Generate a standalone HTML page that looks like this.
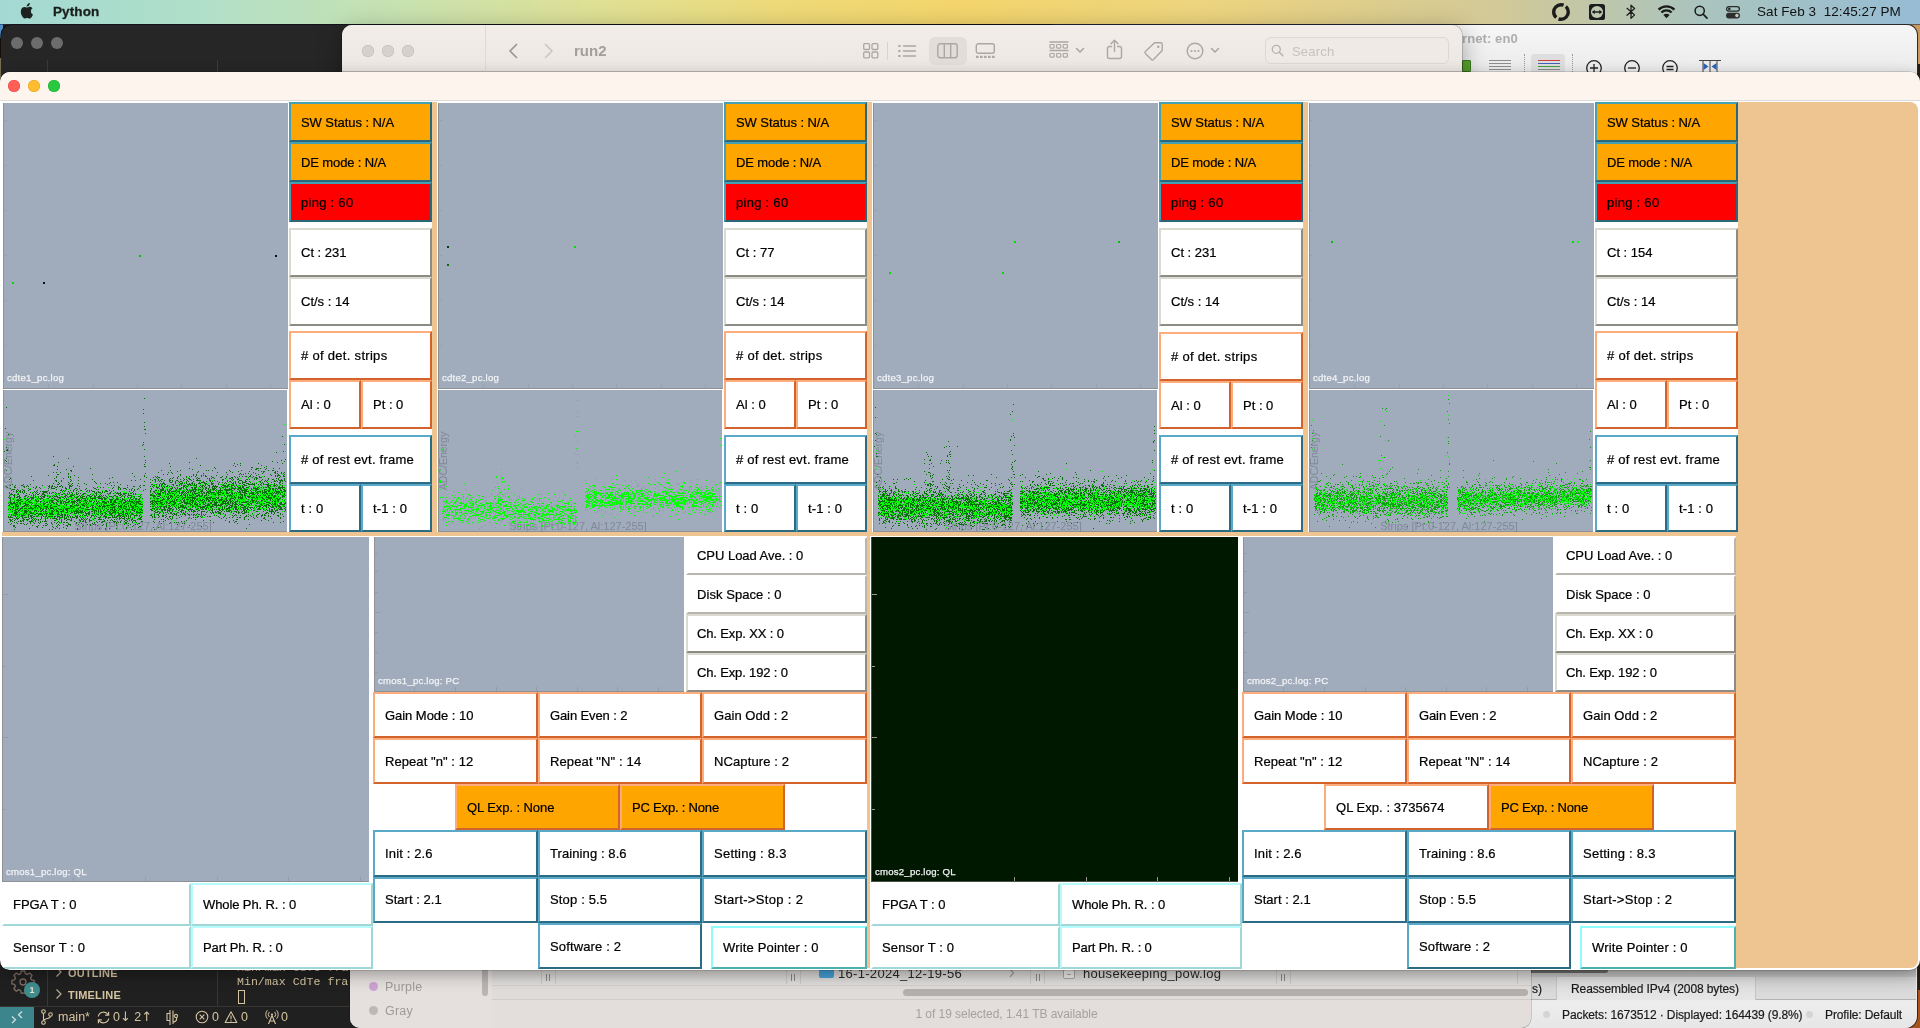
<!DOCTYPE html><html><head><meta charset="utf-8"><title>Python</title><style>
*{box-sizing:border-box;margin:0;padding:0}
html,body{width:1920px;height:1028px;overflow:hidden}
body{position:relative;-webkit-font-smoothing:antialiased;font-family:"Liberation Sans",sans-serif;font-size:13px;color:#000;background:#2a1c10}
.abs,.w,.p,.lb,.ax,.wh{position:absolute}
.wh{background:#fff}
.w{border:2px solid;padding-left:10px;white-space:pre;overflow:hidden;background:#fff;font-size:13px;-webkit-text-stroke:.22px #000}
.p{background:#a0abbb;border-left:1px solid #8e9196;border-bottom:1px solid #8e9196}
.lb{color:#f1f3f6;font-size:9.600px;line-height:12px;white-space:pre;letter-spacing:.22px;-webkit-text-stroke:.25px #f1f3f6}
.t{border-color:#46a0b4 #2a6778 #2a6778 #46a0b4}
.o{border-color:#fdac7c #d3632b #d3632b #fdac7c}
.g{border-color:#dadad0 #8c8c84 #8c8c84 #dadad0}
.g2{border-color:#fff #b9b6ae #b9b6ae #fff}
.c{border-color:#b9fafa #9fd6d6 #9fd6d6 #b9fafa}
.c2{border-color:#fff #a0d8d8 #a0d8d8 #fff}
.wp{border-color:#8ffbfb #4db0ae #4db0ae #8ffbfb}
.b{border-color:#58aac8 #2d6b84 #2d6b84 #58aac8}
.or{background:#ffa500}
.rd{background:#ff0000}
.ax{color:#818998;font-size:11px;line-height:12px;white-space:pre}
svg{position:absolute;overflow:visible}
</style></head><body><div id="root" style="position:absolute;left:0;top:0;width:1920px;height:1028px;will-change:transform">
<div class="abs" style="left:0;top:24px;width:3px;height:14px;background:#4f8fc8"></div>
<div class="abs" style="left:0;top:58px;width:3px;height:20px;background:#eadca0"></div>
<div class="abs" style="left:1900px;top:24px;width:20px;height:40px;background:#c89a60"></div>
<div class="abs" style="left:1900px;top:990px;width:20px;height:38px;background:#a8521c"></div>
<div class="abs" style="left:0;top:0;width:1920px;height:24px;background:linear-gradient(90deg,#a3d9d3 0,#b0dfc8 200px,#c8e2b0 400px,#dfe094 600px,#efd976 800px,#f3d56c 960px,#edd47e 1200px,#d2c998 1500px,#aac4be 1700px,#96bcd4 1920px)"></div>
<div class="abs" style="left:0;top:24px;width:1920px;height:1px;background:rgba(30,50,80,.6)"></div>
<svg style="left:20px;top:3px" width="13.100" height="15.700" viewBox="-1 0 14.500 17.300"><path d="M6.500 4.900C7.300 4.900 8.300 4 9.700 4c.6 0 2.200.2 3.200 1.800-.1.100-1.900 1.100-1.900 3.300 0 2.600 2.200 3.500 2.300 3.500 0 .1-.4 1.300-1.200 2.500-.7 1-1.400 2-2.500 2s-1.500-.6-2.700-.6c-1.300 0-1.700.6-2.700.6-1.100.1-1.900-1.100-2.600-2.100C.200 12.900-.9 9.100.600 6.500 1.300 5.200 2.600 4.400 4 4.400c1.100 0 2 .5 2.500.5zM9 2.700C9.600 2 10 1 9.900 0 9 0 8 .6 7.400 1.300 6.800 2 6.300 3 6.500 3.900c.9.100 1.900-.4 2.500-1.200z" fill="#1b221f"/></svg>
<div class="abs" style="left:53px;top:4px;font-size:13.5px;font-weight:700;line-height:16px;color:#1a1f1c;letter-spacing:.1px;-webkit-text-stroke:.3px #1a1f1c">Python</div>
<div class="abs" style="left:1757px;top:4px;font-size:13.5px;line-height:16px;color:#111;white-space:pre;letter-spacing:.06px">Sat Feb 3  12:45:27 PM</div>
<svg style="left:1551px;top:2px" width="20" height="20" viewBox="0 0 20 20"><circle cx="10" cy="10" r="7.300" fill="none" stroke="#1c1c1c" stroke-width="3.400" stroke-dasharray="20.300 2.630" stroke-dashoffset="6.400"/></svg>
<svg style="left:1589px;top:4px" width="16" height="16" viewBox="0 0 16 16"><rect x="0" y="0" width="16" height="16" rx="2.600" fill="#1c1c1c"/><circle cx="8" cy="8" r="6.100" fill="#bcc8b0"/><path d="M2.800 8l2.900-2.300v1.500h4.600V5.700L13.200 8l-2.900 2.300V8.800H5.700v1.500z" fill="#1c1c1c"/></svg>
<svg style="left:1625px;top:3px" width="12" height="18" viewBox="0 0 12 18"><path d="M2 5.300l7.600 6.600L6 15.400V2.200l3.600 3.300L2 12.300" fill="none" stroke="#1c1c1c" stroke-width="1.250" stroke-linejoin="round" stroke-linecap="round"/></svg>
<svg style="left:1657px;top:4px" width="19" height="15" viewBox="0 0 19 15"><path d="M1.600 5.600a11.300 11.300 0 0 1 15.800 0M4.400 8.500a7.300 7.300 0 0 1 10.200 0" fill="none" stroke="#1c1c1c" stroke-width="2.300" stroke-linecap="butt"/><path d="M9.500 14.200L6.400 11a4.400 4.400 0 0 1 6.200 0z" fill="#1c1c1c"/></svg>
<svg style="left:1693px;top:4px" width="16" height="16" viewBox="0 0 16 16"><circle cx="6.700" cy="6.800" r="4.600" fill="none" stroke="#1c1c1c" stroke-width="1.500"/><path d="M10.100 10.200l3.900 3.900" stroke="#1c1c1c" stroke-width="1.700" stroke-linecap="round"/></svg>
<svg style="left:1725px;top:5px" width="16" height="14" viewBox="0 0 16 14"><rect x="1.600" y="1.600" width="12.800" height="4.600" rx="2.300" fill="none" stroke="#2a2a2a" stroke-width="1.300"/><circle cx="4.300" cy="3.900" r="1.300" fill="#2a2a2a"/><rect x="1" y="7.700" width="14" height="5.700" rx="2.850" fill="#2e2e2e"/><circle cx="11.900" cy="10.550" r="1.700" fill="#c4cbbe"/></svg>
<div class="abs" style="left:1px;top:25px;width:1060px;height:1003px;background:#262626;border-radius:10px 10px 0 0;box-shadow:0 0 0 .5px #000"></div>
<div class="abs" style="left:11px;top:37px;width:12px;height:12px;border-radius:50%;background:#6c6c6c"></div>
<div class="abs" style="left:31px;top:37px;width:12px;height:12px;border-radius:50%;background:#6c6c6c"></div>
<div class="abs" style="left:51px;top:37px;width:12px;height:12px;border-radius:50%;background:#6c6c6c"></div>
<div class="abs" style="left:47px;top:60px;width:1px;height:12px;background:#3e3a36"></div>
<div class="abs" style="left:217px;top:60px;width:1px;height:12px;background:#3e3a36"></div>
<div class="abs" style="left:0;top:960px;width:360px;height:68px;background:#202020"></div>
<div class="abs" style="left:47px;top:960px;width:1px;height:46px;background:#3a3633"></div>
<div class="abs" style="left:217px;top:960px;width:1px;height:46px;background:#3a3633"></div>
<div class="abs" style="left:0;top:1006px;width:360px;height:1px;background:#38342f"></div>
<svg style="left:10px;top:969px" width="26" height="26" viewBox="0 0 26 26"><g fill="none" stroke="#7c6f64" stroke-width="1.300"><circle cx="13" cy="13" r="3"/><path d="M11.200 2h3.600l.5 2.700 2 .85 2.300-1.550 2.500 2.500-1.550 2.300.85 2 2.700.5v3.600l-2.700.5-.85 2 1.550 2.300-2.500 2.500-2.300-1.550-2 .85-.5 2.700h-3.600l-.5-2.700-2-.85-2.300 1.550-2.500-2.500 1.550-2.300-.85-2-2.700-.5v-3.600l2.700-.5.85-2-1.550-2.300 2.500-2.500 2.300 1.550 2-.85z" stroke-linejoin="round"/></g></svg>
<div class="abs" style="left:24px;top:982px;width:16px;height:16px;border-radius:50%;background:#3f8c8f;color:#e8e0c8;font-size:9px;font-weight:700;line-height:16px;text-align:center">1</div>
<svg style="left:55px;top:966px" width="8" height="12" viewBox="0 0 8 12"><path d="M1.500 1.500l4.500 4.500-4.500 4.500" fill="none" stroke="#bdae93" stroke-width="1.200"/></svg>
<div class="abs" style="left:68px;top:966px;font-size:11px;font-weight:700;line-height:14px;color:#d5c4a1;letter-spacing:.2px">OUTLINE</div>
<svg style="left:55px;top:988px" width="8" height="12" viewBox="0 0 8 12"><path d="M1.500 1.500l4.500 4.500-4.500 4.500" fill="none" stroke="#bdae93" stroke-width="1.200"/></svg>
<div class="abs" style="left:68px;top:988px;font-size:11px;font-weight:700;line-height:14px;color:#d5c4a1;letter-spacing:.2px">TIMELINE</div>
<div class="abs" style="left:237px;top:961px;font-family:'Liberation Mono',monospace;font-size:11.600px;line-height:14px;color:#d5c4a1;white-space:pre">Min/max CdTe fra</div>
<div class="abs" style="left:237px;top:975px;font-family:'Liberation Mono',monospace;font-size:11.600px;line-height:14px;color:#d5c4a1;white-space:pre">Min/max CdTe fra</div>
<div class="abs" style="left:238px;top:990px;width:7px;height:14px;border:1px solid #d5c4a1"></div>
<div class="abs" style="left:0;top:1007px;width:34px;height:21px;background:#3c858c;border-radius:0 0 0 0"></div>
<svg style="left:10px;top:1010px" width="14" height="14" viewBox="0 0 14 14"><path d="M2 6.500l3.500 3.300L2 13M12 1.500L8.500 4.700 12 8" fill="none" stroke="#d5e4e0" stroke-width="1.200"/></svg>
<svg style="left:40px;top:1008px" width="14" height="18" viewBox="0 0 14 18"><circle cx="3.500" cy="3.500" r="1.800" fill="none" stroke="#d5c4a1" stroke-width="1.100"/><circle cx="3.500" cy="14.500" r="1.800" fill="none" stroke="#d5c4a1" stroke-width="1.100"/><circle cx="10.500" cy="6.500" r="1.800" fill="none" stroke="#d5c4a1" stroke-width="1.100"/><path d="M3.500 5.300v7.400M10.500 8.300c0 3-7 2-7 4.400" fill="none" stroke="#d5c4a1" stroke-width="1.100"/></svg>
<div class="abs" style="left:58px;top:1009px;font-size:12.5px;line-height:16px;color:#d5c4a1;white-space:pre">main*</div>
<svg style="left:96px;top:1010px" width="15" height="15" viewBox="0 0 15 15"><path d="M2.300 6.500a5.300 5.300 0 0 1 9.800-1.700M12.700 8.500a5.300 5.300 0 0 1-9.800 1.700" fill="none" stroke="#d5c4a1" stroke-width="1.200"/><path d="M12.600 1.800v3.400H9.200M2.400 13.200V9.800h3.400" fill="none" stroke="#d5c4a1" stroke-width="1.200"/></svg>
<div class="abs" style="left:113px;top:1009px;font-size:12.5px;line-height:16px;color:#d5c4a1;white-space:pre">0<span style="font-family:'DejaVu Sans',sans-serif;font-size:13px">↓</span> 2<span style="font-family:'DejaVu Sans',sans-serif;font-size:13px">↑</span></div>
<svg style="left:165px;top:1009px" width="14" height="17" viewBox="0 0 14 17"><path d="M5 1v15M5 4.500h-3v7h3M8 1.500v13.500M8 13c3 0 4-2 3.500-4.500" fill="none" stroke="#d5c4a1" stroke-width="1.100"/><circle cx="11" cy="7" r="1.600" fill="none" stroke="#d5c4a1" stroke-width="1.100"/></svg>
<svg style="left:195px;top:1010px" width="14" height="14" viewBox="0 0 14 14"><circle cx="7" cy="7" r="5.800" fill="none" stroke="#d5c4a1" stroke-width="1.100"/><path d="M4.700 4.700l4.600 4.600M9.300 4.700L4.700 9.300" stroke="#d5c4a1" stroke-width="1.100"/></svg>
<div class="abs" style="left:212px;top:1009px;font-size:12.5px;line-height:16px;color:#d5c4a1;white-space:pre">0</div>
<svg style="left:224px;top:1010px" width="14" height="14" viewBox="0 0 14 14"><path d="M7 1.800l5.800 10.700H1.200z" fill="none" stroke="#d5c4a1" stroke-width="1.100" stroke-linejoin="round"/><path d="M7 5.500v3.700M7 10.300v1.200" stroke="#d5c4a1" stroke-width="1.100"/></svg>
<div class="abs" style="left:241px;top:1009px;font-size:12.5px;line-height:16px;color:#d5c4a1;white-space:pre">0</div>
<svg style="left:265px;top:1009px" width="14" height="16" viewBox="0 0 14 16"><path d="M7 6.500L3.500 15M7 6.500L10.500 15M4.800 12h4.400" fill="none" stroke="#d5c4a1" stroke-width="1.100"/><circle cx="7" cy="5.500" r="1.100" fill="#d5c4a1"/><path d="M4.300 3a3.800 3.800 0 0 0 0 5M9.700 3a3.800 3.800 0 0 1 0 5M2.400 1.300a6.300 6.300 0 0 0 0 8.400M11.600 1.300a6.300 6.300 0 0 1 0 8.400" fill="none" stroke="#d5c4a1" stroke-width="1"/></svg>
<div class="abs" style="left:281px;top:1009px;font-size:12.5px;line-height:16px;color:#d5c4a1;white-space:pre">0</div>
<div class="abs" style="left:1440px;top:25px;width:1478px;height:1003px"></div>
<div class="abs" style="left:1440px;top:25px;width:477px;height:1003px;background:linear-gradient(#f6f6f6 0,#ebebeb 47px,#ebebeb 100%);border-radius:10px 10px 12px 10px;box-shadow:0 0 0 1px #2a2a2a"></div>
<div class="abs" style="left:1462px;top:31px;font-size:13px;font-weight:700;line-height:16px;color:#adadad;white-space:pre;letter-spacing:.1px">rnet: en0</div>
<div class="abs" style="left:1462px;top:60px;width:9px;height:12px;background:#5aa832;border:1px solid #3f8020;border-radius:1px"></div>
<div class="abs" style="left:1489px;top:60px;width:22px;height:12px;background:repeating-linear-gradient(#8c8c8c 0,#8c8c8c 1px,transparent 1px,transparent 3px)"></div>
<div class="abs" style="left:1524px;top:54px;width:1px;height:18px;border-left:1px dotted #999"></div>
<div class="abs" style="left:1531px;top:54px;width:34px;height:20px;background:#dedede;border-radius:4px"></div>
<div class="abs" style="left:1538px;top:60px;width:22px;height:1px;background:#d04040;box-shadow:0 3px 0 #4060c0,0 6px 0 #40a040,0 9px 0 #888"></div>
<div class="abs" style="left:1572px;top:54px;width:1px;height:18px;border-left:1px dotted #999"></div>
<svg style="left:1585px;top:59px" width="18" height="18" viewBox="0 0 18 18"><circle cx="9" cy="9" r="7.300" fill="none" stroke="#222" stroke-width="1.300"/><path d="M5 9h8M9 5v8" stroke="#222" stroke-width="1.300"/></svg>
<svg style="left:1623px;top:59px" width="18" height="18" viewBox="0 0 18 18"><circle cx="9" cy="9" r="7.300" fill="none" stroke="#222" stroke-width="1.300"/><path d="M5 9h8" stroke="#222" stroke-width="1.300"/></svg>
<svg style="left:1661px;top:59px" width="18" height="18" viewBox="0 0 18 18"><circle cx="9" cy="9" r="7.300" fill="none" stroke="#222" stroke-width="1.300"/><path d="M5.500 7.500h7M5.500 10.500h7" stroke="#222" stroke-width="1.300"/></svg>
<svg style="left:1698px;top:59px" width="24" height="14" viewBox="0 0 24 14"><path d="M1 1.500h22M5 2v12M12 2v12M19 2v12" stroke="#444" stroke-width="1" fill="none"/><path d="M5.500 4l5 3.500-5 3.500zM18.500 4l-5 3.500 5 3.500z" fill="#2a62b8"/></svg>
<div class="abs" style="left:1520px;top:960px;width:396px;height:17px;background:linear-gradient(#a8a8a8,#c4c4c4)"></div>
<div class="abs" style="left:1520px;top:968px;width:88px;height:5px;background:#6a6a6a;border-radius:0 3px 3px 0"></div>
<div class="abs" style="left:1520px;top:977px;width:396px;height:23px;background:linear-gradient(#d2d2d2,#dcdcdc);border-bottom:1px solid #b4b4b4"></div>
<div class="abs" style="left:1556px;top:977px;width:200px;height:23px;background:linear-gradient(#dcdcdc,#e6e6e6);border-left:1px solid #c4c4c4;border-right:1px solid #c4c4c4"></div>
<div class="abs" style="left:1532px;top:982px;font-size:12px;line-height:14px;color:#1a1a1a;white-space:pre;letter-spacing:-.1px;-webkit-text-stroke:.2px #1a1a1a">s)</div>
<div class="abs" style="left:1571px;top:982px;font-size:12px;line-height:14px;color:#1a1a1a;white-space:pre;letter-spacing:-.1px;-webkit-text-stroke:.2px #1a1a1a">Reassembled IPv4 (2008 bytes)</div>
<div class="abs" style="left:1520px;top:1001px;width:396px;height:27px;background:linear-gradient(#eeeeee,#e6e6e6);border-radius:0 0 12px 0"></div>
<div class="abs" style="left:1543px;top:1011px;width:7px;height:7px;border-radius:50%;background:#d4d4d4"></div>
<div class="abs" style="left:1562px;top:1008px;font-size:12px;line-height:14px;color:#1a1a1a;white-space:pre;letter-spacing:-.1px;-webkit-text-stroke:.2px #1a1a1a">Packets: 1673512 · Displayed: 164439 (9.8%)</div>
<div class="abs" style="left:1806px;top:1011px;width:7px;height:7px;border-radius:50%;background:#d4d4d4"></div>
<div class="abs" style="left:1825px;top:1008px;font-size:12px;line-height:14px;color:#1a1a1a;white-space:pre;letter-spacing:-.1px;-webkit-text-stroke:.2px #1a1a1a">Profile: Default</div>
<div class="abs" style="left:342px;top:25px;width:1120px;height:80px;background:#efeae5;border-radius:10px 10px 0 0;box-shadow:0 0 0 .5px rgba(0,0,0,.35),0 6px 24px rgba(0,0,0,.35)"></div>
<div class="abs" style="left:342px;top:25px;width:1120px;height:47px;background:linear-gradient(#f2ede8,#ece7e2);border-radius:10px 10px 0 0;border-bottom:1px solid #cfcac5"></div>
<div class="abs" style="left:485px;top:25px;width:1px;height:47px;background:#dfdad5"></div>
<div class="abs" style="left:362px;top:45px;width:12px;height:12px;border-radius:50%;background:#d5d1cc;box-shadow:inset 0 0 0 .5px #bdb9b4"></div>
<div class="abs" style="left:382px;top:45px;width:12px;height:12px;border-radius:50%;background:#d5d1cc;box-shadow:inset 0 0 0 .5px #bdb9b4"></div>
<div class="abs" style="left:402px;top:45px;width:12px;height:12px;border-radius:50%;background:#d5d1cc;box-shadow:inset 0 0 0 .5px #bdb9b4"></div>
<svg style="left:508px;top:43px" width="10" height="16" viewBox="0 0 10 16"><path d="M8.500 1.500L2 8l6.500 6.500" fill="none" stroke="#9a9691" stroke-width="1.700" stroke-linecap="round" stroke-linejoin="round"/></svg>
<svg style="left:544px;top:43px" width="10" height="16" viewBox="0 0 10 16"><path d="M1.500 1.500L8 8l-6.500 6.500" fill="none" stroke="#cbc7c2" stroke-width="1.700" stroke-linecap="round" stroke-linejoin="round"/></svg>
<div class="abs" style="left:574px;top:42px;font-size:15px;font-weight:700;line-height:18px;color:#a29e99">run2</div>
<svg style="left:863px;top:43px" width="16" height="16" viewBox="0 0 16 16"><g fill="none" stroke="#aba7a2" stroke-width="1.300"><rect x=".7" y=".7" width="5.800" height="5.800" rx="1"/><rect x="9" y=".7" width="5.800" height="5.800" rx="1"/><rect x=".7" y="9" width="5.800" height="5.800" rx="1"/><rect x="9" y="9" width="5.800" height="5.800" rx="1"/></g></svg>
<div class="abs" style="left:887px;top:42px;width:1px;height:18px;background:#d9d4cf"></div>
<svg style="left:898px;top:44px" width="19" height="14" viewBox="0 0 19 14"><g stroke="#aba7a2" stroke-width="1.500" stroke-linecap="round"><path d="M5.500 2h12M5.500 7h12M5.500 12h12"/><path d="M1 2h.800M1 7h.800M1 12h.800" stroke-width="1.800"/></g></svg>
<div class="abs" style="left:929px;top:37px;width:38px;height:28px;border-radius:6px;background:#e2ddd8"></div>
<svg style="left:937px;top:43px" width="21" height="16" viewBox="0 0 21 16"><g fill="none" stroke="#aba7a2" stroke-width="1.400"><rect x=".8" y=".8" width="19.400" height="14" rx="2.500"/><path d="M7.300 1v14M13.700 1v14"/></g></svg>
<svg style="left:975px;top:43px" width="21" height="16" viewBox="0 0 21 16"><g fill="none" stroke="#aba7a2" stroke-width="1.400"><rect x="1.300" y=".8" width="18" height="9.500" rx="2"/></g><g fill="#aba7a2"><rect x="1" y="12.800" width="2.600" height="2.200"/><rect x="5" y="12.800" width="2.600" height="2.200"/><rect x="9" y="12.800" width="2.600" height="2.200"/><rect x="13" y="12.800" width="2.600" height="2.200"/><rect x="17" y="12.800" width="2.600" height="2.200"/></g></svg>
<svg style="left:1049px;top:41px" width="20" height="18" viewBox="0 0 20 18"><g fill="none" stroke="#aba7a2" stroke-width="1.200"><path d="M.5 1h19M.5 9.500h19" stroke-width="1.400"/><rect x="1" y="3.500" width="4.200" height="3.600" rx=".8"/><rect x="7.600" y="3.500" width="4.200" height="3.600" rx=".8"/><rect x="14.200" y="3.500" width="4.200" height="3.600" rx=".8"/><rect x="1" y="12.500" width="4.200" height="3.600" rx=".8"/><rect x="7.600" y="12.500" width="4.200" height="3.600" rx=".8"/><rect x="14.200" y="12.500" width="4.200" height="3.600" rx=".8"/></g></svg>
<svg style="left:1075px;top:47px" width="10" height="7" viewBox="0 0 10 7"><path d="M1.500 1.500L5 5l3.500-3.500" fill="none" stroke="#aba7a2" stroke-width="1.600" stroke-linecap="round" stroke-linejoin="round"/></svg>
<svg style="left:1106px;top:39px" width="17" height="21" viewBox="0 0 17 21"><g fill="none" stroke="#aba7a2" stroke-width="1.400" stroke-linecap="round" stroke-linejoin="round"><path d="M5.500 7.500H3.500a2 2 0 0 0-2 2v8a2 2 0 0 0 2 2h10a2 2 0 0 0 2-2v-8a2 2 0 0 0-2-2h-2"/><path d="M8.500 12.500V1.500M5 4.800L8.500 1.300 12 4.800"/></g></svg>
<svg style="left:1143px;top:41px" width="21" height="21" viewBox="0 0 21 21"><g fill="none" stroke="#aba7a2" stroke-width="1.400" stroke-linejoin="round"><path d="M11.500 1.800h6.200a1.500 1.500 0 0 1 1.500 1.500v6.200L10.500 18.600a1.500 1.500 0 0 1-2.100 0L2.400 12.600a1.500 1.500 0 0 1 0-2.100z"/></g><circle cx="15.300" cy="5.700" r="1.200" fill="#aba7a2"/></svg>
<svg style="left:1186px;top:42px" width="18" height="18" viewBox="0 0 18 18"><circle cx="9" cy="9" r="7.800" fill="none" stroke="#aba7a2" stroke-width="1.400"/><g fill="#aba7a2"><circle cx="5.500" cy="9" r="1.100"/><circle cx="9" cy="9" r="1.100"/><circle cx="12.500" cy="9" r="1.100"/></g></svg>
<svg style="left:1210px;top:47px" width="10" height="7" viewBox="0 0 10 7"><path d="M1.500 1.500L5 5l3.500-3.500" fill="none" stroke="#aba7a2" stroke-width="1.600" stroke-linecap="round" stroke-linejoin="round"/></svg>
<div class="abs" style="left:1265px;top:37px;width:184px;height:27px;border-radius:6px;background:#efeae5;border:1px solid #ddd8d3"></div>
<svg style="left:1271px;top:44px" width="13" height="13" viewBox="0 0 13 13"><circle cx="5.300" cy="5.300" r="4" fill="none" stroke="#b5b1ac" stroke-width="1.300"/><path d="M8.300 8.300l3.500 3.500" stroke="#b5b1ac" stroke-width="1.400" stroke-linecap="round"/></svg>
<div class="abs" style="left:1292px;top:44px;font-size:13px;line-height:16px;color:#c6c2bd;letter-spacing:.2px">Search</div>
<div class="abs" style="left:350px;top:960px;width:1181px;height:68px;background:#e3dedb;border-radius:0 0 10px 10px;box-shadow:0 0 0 .5px rgba(0,0,0,.3)"></div>
<div class="abs" style="left:350px;top:960px;width:142px;height:68px;background:#e5e0de;border-radius:0 0 0 10px"></div>
<div class="abs" style="left:482px;top:960px;width:6px;height:36px;background:#b9b5b2;border-radius:3px"></div>
<div class="abs" style="left:369px;top:982px;width:9px;height:9px;border-radius:50%;background:#cba3d3"></div>
<div class="abs" style="left:385px;top:979px;font-size:12.500px;line-height:16px;color:#9e9a97;letter-spacing:.2px">Purple</div>
<div class="abs" style="left:369px;top:1006px;width:9px;height:9px;border-radius:50%;background:#bcb8b5"></div>
<div class="abs" style="left:385px;top:1003px;font-size:12.500px;line-height:16px;color:#9e9a97;letter-spacing:.2px">Gray</div>
<div class="abs" style="left:492px;top:960px;width:1039px;height:25px;background:linear-gradient(#d2d0ce,#e0dedc)"></div>
<div class="abs" style="left:541px;top:968px;width:1px;height:16px;background:#c9c6c3"></div>
<div class="abs" style="left:555px;top:968px;width:1px;height:16px;background:#c9c6c3"></div>
<div class="abs" style="left:786px;top:968px;width:1px;height:16px;background:#c9c6c3"></div>
<div class="abs" style="left:800px;top:968px;width:1px;height:16px;background:#c9c6c3"></div>
<div class="abs" style="left:1030px;top:968px;width:1px;height:16px;background:#c9c6c3"></div>
<div class="abs" style="left:1044px;top:968px;width:1px;height:16px;background:#c9c6c3"></div>
<div class="abs" style="left:1276px;top:968px;width:1px;height:16px;background:#c9c6c3"></div>
<div class="abs" style="left:1290px;top:968px;width:1px;height:16px;background:#c9c6c3"></div>
<div class="abs" style="left:1517px;top:968px;width:1px;height:16px;background:#c9c6c3"></div>
<div class="abs" style="left:546px;top:974px;width:4px;height:7px;border-left:1px solid #8a8784;border-right:1px solid #8a8784"></div>
<div class="abs" style="left:791px;top:974px;width:4px;height:7px;border-left:1px solid #8a8784;border-right:1px solid #8a8784"></div>
<div class="abs" style="left:1036px;top:974px;width:4px;height:7px;border-left:1px solid #8a8784;border-right:1px solid #8a8784"></div>
<div class="abs" style="left:1281px;top:974px;width:4px;height:7px;border-left:1px solid #8a8784;border-right:1px solid #8a8784"></div>
<div class="abs" style="left:819px;top:965px;width:15px;height:13px;background:#459fd6;border-radius:2px"></div>
<div class="abs" style="left:838px;top:966px;font-size:13px;line-height:16px;color:#2a2827;letter-spacing:.3px;white-space:pre">16-1-2024_12-19-56</div>
<svg style="left:1009px;top:968px" width="6" height="10" viewBox="0 0 6 10"><path d="M1 1l3.500 4L1 9" fill="none" stroke="#a09d9a" stroke-width="1.200"/></svg>
<div class="abs" style="left:1063px;top:964px;width:12px;height:15px;border:1px solid #a8a5a2;border-radius:2px;background:#ecebea"></div>
<div class="abs" style="left:1067px;top:974px;width:4px;height:1px;background:#a8a5a2"></div>
<div class="abs" style="left:1083px;top:966px;font-size:13px;line-height:16px;color:#2a2827;letter-spacing:.3px;white-space:pre">housekeeping_pow.log</div>
<div class="abs" style="left:492px;top:985px;width:1039px;height:15px;background:#e0dcda;border-top:1px solid #d2cfcc;border-bottom:1px solid #d0ccc9"></div>
<div class="abs" style="left:903px;top:989px;width:625px;height:7px;background:#b2afad;border-radius:4px"></div>
<div class="abs" style="left:487px;top:1006px;width:1039px;text-align:center;font-size:12px;line-height:16px;color:#a5a19e;letter-spacing:-.05px;white-space:pre">1 of 19 selected, 1.41 TB available</div>
<div class="abs" id="win" style="left:0;top:72px;width:1920px;height:898px;background:#fff;border-radius:10px;box-shadow:0 0 0 0.5px rgba(0,0,0,.25),0 5px 16px rgba(0,0,0,.32)"></div>
<div class="abs" id="clip" style="left:0;top:72px;width:1920px;height:898px;border-radius:10px;overflow:hidden"><div class="abs" style="left:0;top:-72px;width:1920px;height:1028px">
<div class="abs" style="left:0;top:72px;width:1920px;height:29px;background:#fdf4ee;border-bottom:1px solid #dcdcdc"></div>
<div class="abs" style="left:8px;top:80px;width:12px;height:12px;border-radius:50%;background:#fe5f57;box-shadow:inset 0 0 0 0.5px #e2463f"></div>
<div class="abs" style="left:28px;top:80px;width:12px;height:12px;border-radius:50%;background:#febc2e;box-shadow:inset 0 0 0 0.5px #dfa023"></div>
<div class="abs" style="left:48px;top:80px;width:12px;height:12px;border-radius:50%;background:#28c840;box-shadow:inset 0 0 0 0.5px #1dad2b"></div>
<div class="abs" style="left:2px;top:102px;width:1916px;height:866px;background:#eec490;border-radius:0 8px 8px 0"></div>
<div class="wh" style="left:2px;top:102px;width:430px;height:430px"></div>
<div class="p " style="left:3px;top:103px;width:285px;height:286px;"></div>
<div class="abs" style="left:48px;top:384px;width:1px;height:4px;background:#98a1b0"></div>
<div class="abs" style="left:93px;top:384px;width:1px;height:4px;background:#98a1b0"></div>
<div class="abs" style="left:137px;top:384px;width:1px;height:4px;background:#98a1b0"></div>
<div class="abs" style="left:181px;top:384px;width:1px;height:4px;background:#98a1b0"></div>
<div class="abs" style="left:226px;top:384px;width:1px;height:4px;background:#98a1b0"></div>
<div class="abs" style="left:270px;top:384px;width:1px;height:4px;background:#98a1b0"></div>
<div class="abs" style="left:4px;top:120px;width:3px;height:1px;background:#98a1b0"></div>
<div class="abs" style="left:4px;top:165px;width:3px;height:1px;background:#98a1b0"></div>
<div class="abs" style="left:4px;top:210px;width:3px;height:1px;background:#98a1b0"></div>
<div class="abs" style="left:4px;top:255px;width:3px;height:1px;background:#98a1b0"></div>
<div class="abs" style="left:4px;top:300px;width:3px;height:1px;background:#98a1b0"></div>
<div class="abs" style="left:4px;top:345px;width:3px;height:1px;background:#98a1b0"></div>
<div class="lb" style="left:7px;top:372px">cdte1_pc.log</div>
<div class="abs" style="left:139px;top:255px;width:2px;height:2px;background:#00c000"></div>
<div class="abs" style="left:12px;top:282px;width:2px;height:2px;background:#00e000"></div>
<div class="abs" style="left:275px;top:255px;width:2px;height:2px;background:#101010"></div>
<div class="abs" style="left:43px;top:282px;width:2px;height:2px;background:#101010"></div>
<div class="p " style="left:3px;top:390px;width:284px;height:142px;"></div>
<div class="ax" style="left:73px;top:520px;width:140px;text-align:center">Strips [Pt:0-127, Al:127-255]</div>
<div class="ax" style="left:8px;top:461px;width:0;height:0;font-size:10.5px"><div style="position:absolute;left:0;top:0;transform:translate(-50%,-50%) rotate(-90deg);white-space:pre;line-height:12px">ADC/Energy</div></div>
<svg style="left:3px;top:390px" width="284" height="142" shape-rendering="crispEdges"><path d="M141 8h1M3 17h1M140 19h1M140 23h1M141 32h1M141 36h1M2 38h1M141 39h2M142 43h1M5 44h1M279 46h1M140 52h1M140 54h1M281 54h1M139 55h1M3 57h1M4 59h1M141 59h1M3 60h2M1 61h1M280 61h1M273 62h1M50 66h1M141 66h1M3 68h1M65 68h1M193 68h1M282 69h1M2 70h1M142 70h1M278 70h1M3 71h1M269 71h1M281 71h1M55 72h1M142 72h1M186 72h1M274 72h1M166 73h1M231 73h1M237 73h1M255 73h1M279 73h1M51 74h1M141 74h1M234 74h1M50 75h2M197 75h1M230 75h1M237 75h1M258 75h1M54 76h1M70 76h1M141 76h2M167 76h1M232 76h1M263 76h1M211 77h1M248 77h2M261 77h1M87 78h1M186 78h1M212 78h1M253 78h3M257 78h1M263 78h1M270 78h1M276 78h1M54 79h1M63 79h1M189 79h1M248 79h1M252 79h2M262 79h1M3 80h1M67 80h2M158 80h1M167 80h1M177 80h1M203 80h1M205 80h1M209 80h1M226 80h1M238 80h1M255 80h1M265 80h1M269 80h2M68 81h1M174 81h1M195 81h1M227 81h1M235 81h1M246 81h1M258 81h1M260 81h2M272 81h1M274 81h1M50 82h1M53 82h1M57 82h1M155 82h1M165 82h1M168 82h1M194 82h1M214 82h1M223 82h1M229 82h1M250 82h1M260 82h1M271 82h2M278 82h1M281 82h1M65 83h1M129 83h1M142 83h1M169 83h1M200 83h1M237 83h1M242 83h1M245 83h1M252 83h1M259 83h1M272 83h1M274 83h1M278 83h1M280 83h1M54 84h2M65 84h1M89 84h1M160 84h1M164 84h1M177 84h1M190 84h1M193 84h1M224 84h1M236 84h1M238 84h1M240 84h1M248 84h1M255 84h1M267 84h1M275 84h1M281 84h1M45 85h1M71 85h1M141 85h1M177 85h1M190 85h1M193 85h1M198 85h1M200 85h1M202 85h1M213 85h1M247 85h1M253 85h1M268 85h1M272 85h1M274 85h3M280 85h1M28 86h1M53 86h1M65 86h1M67 86h1M131 86h1M141 86h1M152 86h1M154 86h1M175 86h1M183 86h1M186 86h1M188 86h1M192 86h1M198 86h1M202 86h2M208 86h1M219 86h1M223 86h1M231 86h1M236 86h1M239 86h1M242 86h2M246 86h2M250 86h1M256 86h1M261 86h1M272 86h1M274 86h1M277 86h1M280 86h2M53 87h1M65 87h1M67 87h1M75 87h1M109 87h1M143 87h1M150 87h1M153 87h1M155 87h2M170 87h1M174 87h1M183 87h1M194 87h1M209 87h2M217 87h2M223 87h1M228 87h2M232 87h1M234 87h1M245 87h1M249 87h1M252 87h2M256 87h3M276 87h1M7 88h1M51 88h1M60 88h1M106 88h1M154 88h1M167 88h1M169 88h1M174 88h1M180 88h1M185 88h2M193 88h1M195 88h2M204 88h1M206 88h1M208 88h1M211 88h1M222 88h1M226 88h2M229 88h1M235 88h1M251 88h1M253 88h2M265 88h1M273 88h1M275 88h1M281 88h1M6 89h1M67 89h1M89 89h1M137 89h1M147 89h1M151 89h2M155 89h1M158 89h2M166 89h1M177 89h1M181 89h1M183 89h1M186 89h2M190 89h1M194 89h1M206 89h1M219 89h2M228 89h1M230 89h1M234 89h2M243 89h2M246 89h1M251 89h1M253 89h1M259 89h1M265 89h1M269 89h2M275 89h1M278 89h1M281 89h1M30 90h1M52 90h2M58 90h1M68 90h1M75 90h1M128 90h1M132 90h1M149 90h1M152 90h1M155 90h1M157 90h1M161 90h1M166 90h2M169 90h1M173 90h2M180 90h1M184 90h1M188 90h1M193 90h5M206 90h2M211 90h1M219 90h1M224 90h1M229 90h1M236 90h3M242 90h1M258 90h1M262 90h1M264 90h1M271 90h1M273 90h1M276 90h4M281 90h1M53 91h1M58 91h1M67 91h1M91 91h1M141 91h1M152 91h1M156 91h1M158 91h1M166 91h1M169 91h1M172 91h1M175 91h1M177 91h2M183 91h1M185 91h1M190 91h1M200 91h1M203 91h1M207 91h1M209 91h1M214 91h1M224 91h1M226 91h2M232 91h1M235 91h1M239 91h1M242 91h2M246 91h1M256 91h2M261 91h1M263 91h1M271 91h2M274 91h1M277 91h1M279 91h1M282 91h1M55 92h1M65 92h1M92 92h1M107 92h1M110 92h1M114 92h1M147 92h1M160 92h1M167 92h2M172 92h1M176 92h1M179 92h1M183 92h1M189 92h1M196 92h1M198 92h4M208 92h1M216 92h1M219 92h1M222 92h1M228 92h1M230 92h1M232 92h1M235 92h1M239 92h4M247 92h1M257 92h1M259 92h1M264 92h1M268 92h1M276 92h2M50 93h1M56 93h1M66 93h1M69 93h1M75 93h1M81 93h1M93 93h1M97 93h1M102 93h1M106 93h1M157 93h1M159 93h3M172 93h1M177 93h3M181 93h1M183 93h1M186 93h1M188 93h2M191 93h1M195 93h3M201 93h3M208 93h3M215 93h1M221 93h1M223 93h1M229 93h2M232 93h1M236 93h2M239 93h1M243 93h3M249 93h1M251 93h1M253 93h1M258 93h1M260 93h1M265 93h1M271 93h1M276 93h1M279 93h1M9 94h1M20 94h1M27 94h1M54 94h2M65 94h1M68 94h1M83 94h1M104 94h1M117 94h1M148 94h2M153 94h1M156 94h1M158 94h2M161 94h2M169 94h2M176 94h1M178 94h1M184 94h4M189 94h1M191 94h1M193 94h1M202 94h1M204 94h1M208 94h2M215 94h1M218 94h1M220 94h1M225 94h2M228 94h1M230 94h1M233 94h1M240 94h2M245 94h7M255 94h1M257 94h1M260 94h1M262 94h4M268 94h1M271 94h1M273 94h1M277 94h1M7 95h1M12 95h1M18 95h2M24 95h1M39 95h1M46 95h1M49 95h1M58 95h1M66 95h2M69 95h1M74 95h1M108 95h1M111 95h1M124 95h1M137 95h1M140 95h2M150 95h2M156 95h1M158 95h1M164 95h1M170 95h1M173 95h2M176 95h1M178 95h1M180 95h3M185 95h1M187 95h2M190 95h4M197 95h1M199 95h2M202 95h1M205 95h2M210 95h1M212 95h1M219 95h4M224 95h2M228 95h3M233 95h1M236 95h1M239 95h1M241 95h3M251 95h1M258 95h1M264 95h4M270 95h3M274 95h1M279 95h1M3 96h1M11 96h1M20 96h2M23 96h1M25 96h1M33 96h1M45 96h2M48 96h2M51 96h1M54 96h1M56 96h2M59 96h1M66 96h3M76 96h1M115 96h1M130 96h2M136 96h1M147 96h1M149 96h1M153 96h1M156 96h1M158 96h1M160 96h2M163 96h2M166 96h1M168 96h1M180 96h2M183 96h2M193 96h1M196 96h1M198 96h2M201 96h1M206 96h1M209 96h6M218 96h1M221 96h4M226 96h1M228 96h1M231 96h1M234 96h1M237 96h1M239 96h2M246 96h1M256 96h1M264 96h2M267 96h1M271 96h1M273 96h1M276 96h1M279 96h1M4 97h1M11 97h2M21 97h1M30 97h1M33 97h1M36 97h1M46 97h1M48 97h1M52 97h2M59 97h1M62 97h1M66 97h1M90 97h1M94 97h1M97 97h1M100 97h1M110 97h1M115 97h2M124 97h1M137 97h1M150 97h1M153 97h3M159 97h1M161 97h1M169 97h1M171 97h1M174 97h1M178 97h1M180 97h1M182 97h1M188 97h2M191 97h3M197 97h1M199 97h1M202 97h2M206 97h1M209 97h1M211 97h1M213 97h1M216 97h1M219 97h2M222 97h1M224 97h1M228 97h2M232 97h1M235 97h3M239 97h2M243 97h3M250 97h1M252 97h1M254 97h2M258 97h1M260 97h1M262 97h2M265 97h2M275 97h7M7 98h1M25 98h1M32 98h1M37 98h1M45 98h1M48 98h4M62 98h2M66 98h1M72 98h2M76 98h1M83 98h1M91 98h2M109 98h1M115 98h1M117 98h1M120 98h3M129 98h1M135 98h1M148 98h1M154 98h1M156 98h1M159 98h2M167 98h3M172 98h1M174 98h1M176 98h3M180 98h1M183 98h1M189 98h1M191 98h2M200 98h1M202 98h2M205 98h1M209 98h4M217 98h1M222 98h1M226 98h1M228 98h5M235 98h4M240 98h2M248 98h1M250 98h5M256 98h1M266 98h2M269 98h2M272 98h2M275 98h3M279 98h1M9 99h3M14 99h1M19 99h1M26 99h2M53 99h1M58 99h1M63 99h1M71 99h1M74 99h1M82 99h1M93 99h1M95 99h1M115 99h1M117 99h1M123 99h1M126 99h1M128 99h1M131 99h1M134 99h1M142 99h1M148 99h1M157 99h4M164 99h1M166 99h1M168 99h1M173 99h1M176 99h2M183 99h2M186 99h1M189 99h5M195 99h3M199 99h1M202 99h1M205 99h1M207 99h1M209 99h3M213 99h1M217 99h1M221 99h8M231 99h1M234 99h2M237 99h2M241 99h4M248 99h1M252 99h4M261 99h3M266 99h2M269 99h2M272 99h1M274 99h1M277 99h1M280 99h2M8 100h1M13 100h1M15 100h1M17 100h1M20 100h2M25 100h1M34 100h1M45 100h1M57 100h2M60 100h1M62 100h1M67 100h1M70 100h1M73 100h1M77 100h2M84 100h1M86 100h1M88 100h1M102 100h2M106 100h1M110 100h1M128 100h1M131 100h1M140 100h1M147 100h1M152 100h2M155 100h1M157 100h4M162 100h1M164 100h1M166 100h2M172 100h2M176 100h1M180 100h1M184 100h1M186 100h5M192 100h1M195 100h1M198 100h2M203 100h1M206 100h2M210 100h1M212 100h1M215 100h5M222 100h5M228 100h2M236 100h1M238 100h6M247 100h1M250 100h1M252 100h2M259 100h1M261 100h1M264 100h3M270 100h1M272 100h1M277 100h2M281 100h2M10 101h1M13 101h2M16 101h2M19 101h1M21 101h1M31 101h1M33 101h1M37 101h1M39 101h6M59 101h1M61 101h1M65 101h1M70 101h1M75 101h1M83 101h1M86 101h1M89 101h3M95 101h1M99 101h1M102 101h3M108 101h1M126 101h1M130 101h1M147 101h1M150 101h2M157 101h2M161 101h2M165 101h2M168 101h5M174 101h3M179 101h3M183 101h1M185 101h1M187 101h2M190 101h3M197 101h3M204 101h4M213 101h1M215 101h1M217 101h1M223 101h1M228 101h1M234 101h1M236 101h2M239 101h1M241 101h5M248 101h1M252 101h1M254 101h4M259 101h1M261 101h3M265 101h2M272 101h5M278 101h1M280 101h3M6 102h1M13 102h1M17 102h1M19 102h1M21 102h1M27 102h1M30 102h1M32 102h1M34 102h1M40 102h4M46 102h1M49 102h2M52 102h1M57 102h1M66 102h1M68 102h1M73 102h1M91 102h1M93 102h1M95 102h3M99 102h1M101 102h1M107 102h1M112 102h1M114 102h1M117 102h1M129 102h1M147 102h1M151 102h1M154 102h1M157 102h1M159 102h2M162 102h1M165 102h2M168 102h1M173 102h1M176 102h1M178 102h3M182 102h1M184 102h2M187 102h1M189 102h1M191 102h1M195 102h2M198 102h1M200 102h2M203 102h3M207 102h5M214 102h5M220 102h1M223 102h2M226 102h1M228 102h2M232 102h1M235 102h3M239 102h4M248 102h3M253 102h2M257 102h1M259 102h5M269 102h1M271 102h1M273 102h4M278 102h2M6 103h1M8 103h1M15 103h1M20 103h1M23 103h1M29 103h1M33 103h1M36 103h1M39 103h2M44 103h1M46 103h1M48 103h1M53 103h1M55 103h2M60 103h2M64 103h1M66 103h1M69 103h1M73 103h1M75 103h1M77 103h1M80 103h3M92 103h2M98 103h1M104 103h1M106 103h2M110 103h1M113 103h5M120 103h4M125 103h1M127 103h2M130 103h1M132 103h1M149 103h1M152 103h1M154 103h4M160 103h1M162 103h1M164 103h1M166 103h2M169 103h2M172 103h1M176 103h1M178 103h2M181 103h1M183 103h1M189 103h1M191 103h4M198 103h2M201 103h1M203 103h1M205 103h2M208 103h1M210 103h1M212 103h1M214 103h2M219 103h2M223 103h3M228 103h2M231 103h1M233 103h1M237 103h1M241 103h3M246 103h5M252 103h1M254 103h2M259 103h1M261 103h1M263 103h2M266 103h3M270 103h1M272 103h2M275 103h1M277 103h1M281 103h1M7 104h3M11 104h1M14 104h2M26 104h1M30 104h1M32 104h1M34 104h2M39 104h3M52 104h1M58 104h2M62 104h1M64 104h1M68 104h2M71 104h1M73 104h2M79 104h2M87 104h1M90 104h1M93 104h1M97 104h1M105 104h1M115 104h1M117 104h2M120 104h2M125 104h1M130 104h1M132 104h1M138 104h1M147 104h2M153 104h1M155 104h3M162 104h1M164 104h2M171 104h1M178 104h1M180 104h1M182 104h1M184 104h1M186 104h1M189 104h2M192 104h1M195 104h2M199 104h1M203 104h1M208 104h1M210 104h3M215 104h3M227 104h1M229 104h1M236 104h4M241 104h1M246 104h1M249 104h3M254 104h1M260 104h1M262 104h1M264 104h1M268 104h2M274 104h1M277 104h1M281 104h1M6 105h1M10 105h2M16 105h1M22 105h2M28 105h1M30 105h1M38 105h1M41 105h2M44 105h1M50 105h1M53 105h1M56 105h1M62 105h2M67 105h4M76 105h1M78 105h1M84 105h3M89 105h1M91 105h1M93 105h1M96 105h1M98 105h1M100 105h1M102 105h1M111 105h2M116 105h2M119 105h1M122 105h1M125 105h4M137 105h1M147 105h5M156 105h2M166 105h3M171 105h1M174 105h2M177 105h2M181 105h2M184 105h1M186 105h3M190 105h1M193 105h4M198 105h2M201 105h3M205 105h1M212 105h1M215 105h1M221 105h1M224 105h5M230 105h1M233 105h1M238 105h2M241 105h2M248 105h1M253 105h1M255 105h1M257 105h1M260 105h3M265 105h2M268 105h2M271 105h2M279 105h2M282 105h1M6 106h1M11 106h1M14 106h3M21 106h2M25 106h1M30 106h1M32 106h1M35 106h1M37 106h1M39 106h3M44 106h1M46 106h2M49 106h1M51 106h4M58 106h1M61 106h2M64 106h1M66 106h3M71 106h1M74 106h2M77 106h1M79 106h3M83 106h1M86 106h3M91 106h2M95 106h3M99 106h1M103 106h1M106 106h3M110 106h1M113 106h2M118 106h1M121 106h1M124 106h1M128 106h1M130 106h2M135 106h2M150 106h3M154 106h3M161 106h1M163 106h1M165 106h1M167 106h3M173 106h1M176 106h1M179 106h1M182 106h1M184 106h1M189 106h1M192 106h3M196 106h3M201 106h1M208 106h1M222 106h1M224 106h1M226 106h1M228 106h2M231 106h1M235 106h1M237 106h1M239 106h1M242 106h1M244 106h4M250 106h1M253 106h1M256 106h1M263 106h1M265 106h1M270 106h3M275 106h1M279 106h3M5 107h1M7 107h1M11 107h1M13 107h2M16 107h2M24 107h1M27 107h4M32 107h1M35 107h1M38 107h1M40 107h2M46 107h1M50 107h1M54 107h4M59 107h2M62 107h1M65 107h1M68 107h1M72 107h3M77 107h3M83 107h1M87 107h1M91 107h2M94 107h3M98 107h1M100 107h2M104 107h1M109 107h1M114 107h1M117 107h1M121 107h1M125 107h1M127 107h2M131 107h1M137 107h1M150 107h1M157 107h1M159 107h1M164 107h2M167 107h1M169 107h1M172 107h1M174 107h2M178 107h1M180 107h3M184 107h9M200 107h2M203 107h6M213 107h1M215 107h1M218 107h2M223 107h1M228 107h1M231 107h2M235 107h5M242 107h1M245 107h2M248 107h4M253 107h2M256 107h1M258 107h2M263 107h6M270 107h2M277 107h1M279 107h1M6 108h2M10 108h1M16 108h1M21 108h2M26 108h1M28 108h3M34 108h1M36 108h4M44 108h2M48 108h2M51 108h1M56 108h2M61 108h1M63 108h1M70 108h1M73 108h1M76 108h1M79 108h4M84 108h1M87 108h6M95 108h5M101 108h3M110 108h1M113 108h2M119 108h1M127 108h1M130 108h1M132 108h2M136 108h1M139 108h1M147 108h1M151 108h1M153 108h3M160 108h1M164 108h3M168 108h1M172 108h1M179 108h2M184 108h1M186 108h1M189 108h4M194 108h1M196 108h1M202 108h3M206 108h2M209 108h4M214 108h2M218 108h1M222 108h2M227 108h4M232 108h1M235 108h1M237 108h3M243 108h1M249 108h1M252 108h1M254 108h1M259 108h2M265 108h4M273 108h2M276 108h2M7 109h1M10 109h1M14 109h2M17 109h2M22 109h1M24 109h2M28 109h1M32 109h1M34 109h1M37 109h1M40 109h1M51 109h3M55 109h1M63 109h3M68 109h2M74 109h3M78 109h1M82 109h1M84 109h1M89 109h1M92 109h1M98 109h2M101 109h2M106 109h4M112 109h4M117 109h1M119 109h3M126 109h1M128 109h2M132 109h2M135 109h2M154 109h1M159 109h3M164 109h2M171 109h1M173 109h2M176 109h1M179 109h1M181 109h1M183 109h3M187 109h1M189 109h1M191 109h1M193 109h2M197 109h1M199 109h2M203 109h3M207 109h1M210 109h1M212 109h2M216 109h4M222 109h2M226 109h2M231 109h1M236 109h1M238 109h1M240 109h1M245 109h1M248 109h2M254 109h1M260 109h2M263 109h2M267 109h1M269 109h1M272 109h1M274 109h3M279 109h1M7 110h1M13 110h5M23 110h2M27 110h1M32 110h2M35 110h1M40 110h1M46 110h5M53 110h2M57 110h1M59 110h1M63 110h1M66 110h1M71 110h1M73 110h5M81 110h3M86 110h1M88 110h1M93 110h1M107 110h2M111 110h2M118 110h2M121 110h2M124 110h1M126 110h1M130 110h1M132 110h1M136 110h1M149 110h3M154 110h1M157 110h3M164 110h1M166 110h1M169 110h1M171 110h1M173 110h1M177 110h1M180 110h2M184 110h1M187 110h4M192 110h1M194 110h1M196 110h4M201 110h1M203 110h1M205 110h2M208 110h3M212 110h1M215 110h4M220 110h2M223 110h2M226 110h2M229 110h1M234 110h1M248 110h4M253 110h1M258 110h2M267 110h1M270 110h1M272 110h1M274 110h2M281 110h1M7 111h1M11 111h1M15 111h1M18 111h2M22 111h1M25 111h2M33 111h3M37 111h2M41 111h1M44 111h1M46 111h1M48 111h2M54 111h2M57 111h2M60 111h3M65 111h2M68 111h5M74 111h1M76 111h1M78 111h1M80 111h1M82 111h1M84 111h1M86 111h3M91 111h1M93 111h1M95 111h1M99 111h3M104 111h2M107 111h2M110 111h3M116 111h3M122 111h2M125 111h5M131 111h1M133 111h5M147 111h3M151 111h7M162 111h2M167 111h5M174 111h1M176 111h1M178 111h1M180 111h2M184 111h1M186 111h2M189 111h2M192 111h1M195 111h1M198 111h1M200 111h2M205 111h2M209 111h1M211 111h1M213 111h1M216 111h1M219 111h5M225 111h1M227 111h2M230 111h1M232 111h3M236 111h1M240 111h1M242 111h4M247 111h1M249 111h2M252 111h2M255 111h1M258 111h1M261 111h2M269 111h1M271 111h2M274 111h2M6 112h3M10 112h2M13 112h2M16 112h2M22 112h1M24 112h1M26 112h3M37 112h1M40 112h1M43 112h2M46 112h1M48 112h3M53 112h1M57 112h2M60 112h1M62 112h4M68 112h4M73 112h1M76 112h2M82 112h2M90 112h1M94 112h1M96 112h1M99 112h5M105 112h1M107 112h2M110 112h4M118 112h1M120 112h3M124 112h1M128 112h3M132 112h4M138 112h1M147 112h1M149 112h2M152 112h2M157 112h3M163 112h2M166 112h2M170 112h3M178 112h2M181 112h4M186 112h1M188 112h2M192 112h2M196 112h1M199 112h2M202 112h1M207 112h2M211 112h4M216 112h1M219 112h2M222 112h1M224 112h2M227 112h1M229 112h1M231 112h2M236 112h1M238 112h6M246 112h1M249 112h2M252 112h1M254 112h1M256 112h1M263 112h4M272 112h1M277 112h2M282 112h1M5 113h1M7 113h6M14 113h1M16 113h2M20 113h3M29 113h1M33 113h1M40 113h3M47 113h1M50 113h2M53 113h1M57 113h2M60 113h1M62 113h1M69 113h1M71 113h1M74 113h1M80 113h2M83 113h1M85 113h1M90 113h1M93 113h2M96 113h1M98 113h1M101 113h3M109 113h2M115 113h2M118 113h1M120 113h2M124 113h2M127 113h1M130 113h2M133 113h1M135 113h3M148 113h2M151 113h1M153 113h2M156 113h3M161 113h1M163 113h1M165 113h2M168 113h1M171 113h2M176 113h2M181 113h7M189 113h1M191 113h2M194 113h1M200 113h1M202 113h1M205 113h1M207 113h2M211 113h3M218 113h8M227 113h1M229 113h2M232 113h2M244 113h2M247 113h2M253 113h2M256 113h1M258 113h1M260 113h2M266 113h2M269 113h1M271 113h2M276 113h3M281 113h2M6 114h1M8 114h2M12 114h3M17 114h1M22 114h4M28 114h1M32 114h1M37 114h1M40 114h2M44 114h2M48 114h1M53 114h2M61 114h1M63 114h1M69 114h1M73 114h1M75 114h1M78 114h3M82 114h1M84 114h1M88 114h1M93 114h1M98 114h1M100 114h1M107 114h5M119 114h1M122 114h2M127 114h1M132 114h2M136 114h4M147 114h1M149 114h2M152 114h1M154 114h1M158 114h3M169 114h3M175 114h1M179 114h1M183 114h1M187 114h2M191 114h4M196 114h2M200 114h2M204 114h3M209 114h5M215 114h1M217 114h3M222 114h1M225 114h2M229 114h1M231 114h4M236 114h4M244 114h3M248 114h1M257 114h2M263 114h3M268 114h1M270 114h3M274 114h1M277 114h5M5 115h2M12 115h2M15 115h1M21 115h4M26 115h1M30 115h6M38 115h1M40 115h1M44 115h1M47 115h2M55 115h2M63 115h1M67 115h2M71 115h5M79 115h3M83 115h1M88 115h3M94 115h1M96 115h1M98 115h1M100 115h2M103 115h4M108 115h2M113 115h1M115 115h1M117 115h2M121 115h1M125 115h1M127 115h2M131 115h2M151 115h1M158 115h1M163 115h1M165 115h2M168 115h1M170 115h1M173 115h1M177 115h4M182 115h1M187 115h1M189 115h1M193 115h2M202 115h5M209 115h1M211 115h8M223 115h2M227 115h3M232 115h1M235 115h1M238 115h3M243 115h1M246 115h1M252 115h2M256 115h1M258 115h2M261 115h3M265 115h2M269 115h1M272 115h1M274 115h3M280 115h1M7 116h1M10 116h1M12 116h4M19 116h3M23 116h1M25 116h1M27 116h1M32 116h2M35 116h2M38 116h1M41 116h4M47 116h1M50 116h4M60 116h1M67 116h4M77 116h1M81 116h1M84 116h1M87 116h1M89 116h1M92 116h1M95 116h3M99 116h4M104 116h1M110 116h3M115 116h4M120 116h4M125 116h1M128 116h3M132 116h3M138 116h2M147 116h1M149 116h2M154 116h1M156 116h3M160 116h4M166 116h2M171 116h1M175 116h1M177 116h4M182 116h1M185 116h1M189 116h2M192 116h1M194 116h4M199 116h4M204 116h1M207 116h4M213 116h1M217 116h1M219 116h1M221 116h1M223 116h1M226 116h1M228 116h2M231 116h3M237 116h1M241 116h2M245 116h1M254 116h4M260 116h1M262 116h2M267 116h1M269 116h2M272 116h2M275 116h3M280 116h2M8 117h3M12 117h1M14 117h1M18 117h2M27 117h2M31 117h2M34 117h1M36 117h2M40 117h1M43 117h2M47 117h3M58 117h1M61 117h1M67 117h1M70 117h2M76 117h2M83 117h3M89 117h2M92 117h1M96 117h1M99 117h1M101 117h1M105 117h1M107 117h5M115 117h1M117 117h2M120 117h1M123 117h1M126 117h1M128 117h3M132 117h1M135 117h1M152 117h2M155 117h1M157 117h1M160 117h2M163 117h1M165 117h2M169 117h1M172 117h1M175 117h3M179 117h5M189 117h1M192 117h1M197 117h5M203 117h2M207 117h2M213 117h1M219 117h1M221 117h1M225 117h4M231 117h3M238 117h5M244 117h1M246 117h4M251 117h1M253 117h1M256 117h1M259 117h1M263 117h1M265 117h1M268 117h3M273 117h1M276 117h3M282 117h1M6 118h1M10 118h1M12 118h1M14 118h2M17 118h3M21 118h3M25 118h6M32 118h1M34 118h1M37 118h2M40 118h1M42 118h2M45 118h1M47 118h4M54 118h2M60 118h1M62 118h5M68 118h2M74 118h2M78 118h3M89 118h1M93 118h2M96 118h1M99 118h1M103 118h1M109 118h1M111 118h1M114 118h1M116 118h1M118 118h1M120 118h3M126 118h1M129 118h2M134 118h1M136 118h1M138 118h1M149 118h3M154 118h1M157 118h1M161 118h1M165 118h4M173 118h1M175 118h1M181 118h1M183 118h1M187 118h1M194 118h2M197 118h1M199 118h1M202 118h2M205 118h1M209 118h1M215 118h2M219 118h1M221 118h1M223 118h4M230 118h1M232 118h2M235 118h1M237 118h1M240 118h1M242 118h3M247 118h1M250 118h1M255 118h2M260 118h1M266 118h1M271 118h1M275 118h1M277 118h2M281 118h1M5 119h1M7 119h1M9 119h1M12 119h3M16 119h2M24 119h1M29 119h1M37 119h1M39 119h2M43 119h1M46 119h1M50 119h1M52 119h2M56 119h3M60 119h1M62 119h3M73 119h1M75 119h1M82 119h5M88 119h3M95 119h1M97 119h1M101 119h1M104 119h2M107 119h3M111 119h2M116 119h2M119 119h1M122 119h5M128 119h2M131 119h2M134 119h1M136 119h3M147 119h2M151 119h1M153 119h2M156 119h1M158 119h5M164 119h1M166 119h2M169 119h2M173 119h1M176 119h1M179 119h1M184 119h6M193 119h2M198 119h3M202 119h2M207 119h1M209 119h1M211 119h1M213 119h1M215 119h2M218 119h3M223 119h2M226 119h1M230 119h1M232 119h3M238 119h1M240 119h3M244 119h2M248 119h1M254 119h4M260 119h1M263 119h1M266 119h1M268 119h2M271 119h1M274 119h1M276 119h4M282 119h1M11 120h2M15 120h2M19 120h1M21 120h3M25 120h1M31 120h3M38 120h2M42 120h1M46 120h1M48 120h2M51 120h1M53 120h2M59 120h2M63 120h2M68 120h1M70 120h1M72 120h3M76 120h2M79 120h1M82 120h1M90 120h4M95 120h1M97 120h1M100 120h1M104 120h1M107 120h1M109 120h3M113 120h1M115 120h1M120 120h1M123 120h1M125 120h1M129 120h3M136 120h1M138 120h2M148 120h2M152 120h1M158 120h2M161 120h2M164 120h3M169 120h1M175 120h1M178 120h3M185 120h1M188 120h1M190 120h2M195 120h2M206 120h1M208 120h2M216 120h2M219 120h1M223 120h1M225 120h3M234 120h1M240 120h2M243 120h1M246 120h1M250 120h2M262 120h1M264 120h1M266 120h1M268 120h2M272 120h3M282 120h1M9 121h1M12 121h2M15 121h1M18 121h1M21 121h4M26 121h2M31 121h1M33 121h1M35 121h1M37 121h2M40 121h1M42 121h2M48 121h3M53 121h3M57 121h4M64 121h1M66 121h1M68 121h1M70 121h6M77 121h3M81 121h1M86 121h1M88 121h2M91 121h1M93 121h1M95 121h1M97 121h2M103 121h1M105 121h2M108 121h1M110 121h3M119 121h2M123 121h1M127 121h1M131 121h1M133 121h2M137 121h1M151 121h1M154 121h2M159 121h1M164 121h1M166 121h1M169 121h1M172 121h1M177 121h2M182 121h1M186 121h1M188 121h1M190 121h3M194 121h1M198 121h4M204 121h1M209 121h1M212 121h1M214 121h2M218 121h1M221 121h1M223 121h4M228 121h1M231 121h3M235 121h1M239 121h1M241 121h1M243 121h1M253 121h2M260 121h1M266 121h5M272 121h1M281 121h1M11 122h4M16 122h1M21 122h3M26 122h3M30 122h1M42 122h1M46 122h1M48 122h2M55 122h1M58 122h1M62 122h3M68 122h2M71 122h1M73 122h8M82 122h1M85 122h2M91 122h1M95 122h1M97 122h1M101 122h2M106 122h2M109 122h4M114 122h2M119 122h2M124 122h1M127 122h1M133 122h7M152 122h3M156 122h2M160 122h1M162 122h1M164 122h1M167 122h2M174 122h2M178 122h1M180 122h1M182 122h1M190 122h1M198 122h1M203 122h1M207 122h1M209 122h2M212 122h2M215 122h3M228 122h1M233 122h1M235 122h2M238 122h1M241 122h3M245 122h1M263 122h2M268 122h1M271 122h1M274 122h2M11 123h3M20 123h2M23 123h1M27 123h4M33 123h2M36 123h3M40 123h1M42 123h3M46 123h4M54 123h2M58 123h1M67 123h1M71 123h3M75 123h1M78 123h1M82 123h5M89 123h1M91 123h1M93 123h1M98 123h2M102 123h2M106 123h4M112 123h1M115 123h4M120 123h1M122 123h3M126 123h1M128 123h2M134 123h1M136 123h1M151 123h1M156 123h1M160 123h1M165 123h1M167 123h2M170 123h2M173 123h1M180 123h2M184 123h1M194 123h1M198 123h1M208 123h1M210 123h1M215 123h3M220 123h1M230 123h1M235 123h1M239 123h3M249 123h1M256 123h1M262 123h2M265 123h1M268 123h1M271 123h1M277 123h1M6 124h1M8 124h1M10 124h1M12 124h3M16 124h1M18 124h1M20 124h1M22 124h1M25 124h2M31 124h2M35 124h5M41 124h1M43 124h1M46 124h5M54 124h3M58 124h2M61 124h2M64 124h1M80 124h1M83 124h1M85 124h2M94 124h2M97 124h1M99 124h1M102 124h1M104 124h1M107 124h2M112 124h1M115 124h2M119 124h2M122 124h1M124 124h1M128 124h3M133 124h1M137 124h1M148 124h1M151 124h1M154 124h2M163 124h1M169 124h1M171 124h3M177 124h1M179 124h1M181 124h2M185 124h2M188 124h1M190 124h2M193 124h1M195 124h2M198 124h1M200 124h1M202 124h1M217 124h1M222 124h1M232 124h1M245 124h1M254 124h2M259 124h1M261 124h1M270 124h1M277 124h1M279 124h1M8 125h1M10 125h3M16 125h1M18 125h4M25 125h1M27 125h3M35 125h1M39 125h1M43 125h1M54 125h1M57 125h3M61 125h2M64 125h1M66 125h1M72 125h1M74 125h1M77 125h1M79 125h1M81 125h3M88 125h3M92 125h1M98 125h1M101 125h1M106 125h1M108 125h2M111 125h1M114 125h5M120 125h1M122 125h2M125 125h1M127 125h1M131 125h4M136 125h1M147 125h2M151 125h1M155 125h1M159 125h2M162 125h1M170 125h1M173 125h1M175 125h1M182 125h1M186 125h1M190 125h1M192 125h1M198 125h1M201 125h1M211 125h1M213 125h1M222 125h1M229 125h1M231 125h1M233 125h1M237 125h1M243 125h1M247 125h1M250 125h1M253 125h1M258 125h2M261 125h2M265 125h1M274 125h2M5 126h1M7 126h1M12 126h1M14 126h1M18 126h2M25 126h1M27 126h2M30 126h2M33 126h2M38 126h1M40 126h1M42 126h2M45 126h5M51 126h2M54 126h3M59 126h1M61 126h1M64 126h2M67 126h1M69 126h1M72 126h3M76 126h1M84 126h1M88 126h1M91 126h1M93 126h1M97 126h1M100 126h4M109 126h1M111 126h1M113 126h2M116 126h2M119 126h3M123 126h1M125 126h1M127 126h1M131 126h1M136 126h1M138 126h1M149 126h1M151 126h1M156 126h1M159 126h2M163 126h1M166 126h2M169 126h1M178 126h1M194 126h2M197 126h1M199 126h1M204 126h1M206 126h2M215 126h1M221 126h1M230 126h1M242 126h2M245 126h1M248 126h1M253 126h1M258 126h1M265 126h1M267 126h1M275 126h1M280 126h1M5 127h5M13 127h1M16 127h1M19 127h1M21 127h3M25 127h1M28 127h2M38 127h1M42 127h1M44 127h1M51 127h1M54 127h1M56 127h4M61 127h1M63 127h1M65 127h1M67 127h1M69 127h3M73 127h2M77 127h1M79 127h1M87 127h1M95 127h3M102 127h2M105 127h3M109 127h5M116 127h1M118 127h1M121 127h1M125 127h1M127 127h1M131 127h1M137 127h2M149 127h1M151 127h2M155 127h1M162 127h1M166 127h1M169 127h1M176 127h1M186 127h1M190 127h1M192 127h1M194 127h1M198 127h1M216 127h1M220 127h1M226 127h1M229 127h1M234 127h1M236 127h2M241 127h1M250 127h1M254 127h1M261 127h1M277 127h1M11 128h1M13 128h3M19 128h2M26 128h1M28 128h1M30 128h1M32 128h1M38 128h1M42 128h1M44 128h1M47 128h1M49 128h5M56 128h1M61 128h3M68 128h1M73 128h1M78 128h1M80 128h1M82 128h1M84 128h1M91 128h2M96 128h1M102 128h1M105 128h1M114 128h1M116 128h2M119 128h3M123 128h1M125 128h2M129 128h1M135 128h3M164 128h1M167 128h1M169 128h1M173 128h1M185 128h1M188 128h1M218 128h1M223 128h1M241 128h1M251 128h1M260 128h2M268 128h1M277 128h1M6 129h2M9 129h1M12 129h1M14 129h1M20 129h2M23 129h3M29 129h1M31 129h1M33 129h1M35 129h1M37 129h1M42 129h1M53 129h2M56 129h1M58 129h1M61 129h1M64 129h3M68 129h1M76 129h1M78 129h2M81 129h1M83 129h1M86 129h1M90 129h1M95 129h4M100 129h1M108 129h1M111 129h1M113 129h1M116 129h1M121 129h1M124 129h1M128 129h2M134 129h1M136 129h3M151 129h1M158 129h1M160 129h1M165 129h1M168 129h1M192 129h1M233 129h2M241 129h1M245 129h1M262 129h1M7 130h2M11 130h1M17 130h1M19 130h2M24 130h1M28 130h1M30 130h1M32 130h1M35 130h1M42 130h1M51 130h2M58 130h1M63 130h1M67 130h2M76 130h2M80 130h1M82 130h1M86 130h3M101 130h1M104 130h1M107 130h1M109 130h1M118 130h1M122 130h2M126 130h1M128 130h1M130 130h3M162 130h1M183 130h1M200 130h1M207 130h1M222 130h1M230 130h1M258 130h1M265 130h1M7 131h1M9 131h1M15 131h1M17 131h2M20 131h1M26 131h4M32 131h1M37 131h1M39 131h1M41 131h3M55 131h1M58 131h1M71 131h1M77 131h1M79 131h2M82 131h1M86 131h1M93 131h1M96 131h1M99 131h3M110 131h3M114 131h1M117 131h1M121 131h1M124 131h1M129 131h1M132 131h1M138 131h2M150 131h1M156 131h1M160 131h1M178 131h1M181 131h1M226 131h1M232 131h2M280 131h1M5 132h1M11 132h1M13 132h1M27 132h1M30 132h1M35 132h1M37 132h1M48 132h1M51 132h1M54 132h1M56 132h1M58 132h1M60 132h2M63 132h2M73 132h1M76 132h1M82 132h2M91 132h1M94 132h1M98 132h2M106 132h1M111 132h1M113 132h1M115 132h1M117 132h1M122 132h2M129 132h1M133 132h1M151 132h1M167 132h1M171 132h1M173 132h1M175 132h1M210 132h1M226 132h1M231 132h1M270 132h1M277 132h1M8 133h1M14 133h1M17 133h2M20 133h1M24 133h1M27 133h1M31 133h1M36 133h1M42 133h2M48 133h1M53 133h1M65 133h1M73 133h1M78 133h1M89 133h1M91 133h1M103 133h1M113 133h1M122 133h2M125 133h1M135 133h2M158 133h1M166 133h1M179 133h1M181 133h1M234 133h1M7 134h1M21 134h1M23 134h1M44 134h1M49 134h1M55 134h1M60 134h1M65 134h3M75 134h1M84 134h1M87 134h1M90 134h1M92 134h1M100 134h1M103 134h1M121 134h1M127 134h1M132 134h1M134 134h1M174 134h1M246 134h1M10 135h2M29 135h1M35 135h1M40 135h1M42 135h2M54 135h1M56 135h1M63 135h2M67 135h1M80 135h1M87 135h1M94 135h1M99 135h1M103 135h1M113 135h1M125 135h1M130 135h1M186 135h1M10 136h2M33 136h2M49 136h1M53 136h1M64 136h1M79 136h1M103 136h1M129 136h1M136 136h2M178 136h1M198 136h1M12 137h1M34 137h1M39 137h1M50 137h1M54 137h1M60 137h1M123 137h1M135 137h1M150 137h1M155 137h1M26 138h1M52 138h1M56 138h1M63 138h1M74 138h1M96 138h1M102 138h1M106 138h1M113 138h1M123 138h1M243 138h1M11 139h1M46 139h1M49 139h1M74 139h1M102 139h1M128 139h1M151 139h1" stroke="#0a6e0a" stroke-width="1" fill="none" transform="translate(0,0.5)"/><path d="M281 34h1M1 49h1M66 78h1M200 84h1M256 84h1M279 84h1M259 86h1M185 87h1M192 87h1M248 87h1M254 87h1M260 87h1M156 88h1M237 88h1M245 88h1M264 88h1M268 88h1M223 89h1M256 89h1M262 89h1M209 90h1M250 90h1M268 90h1M280 90h1M154 91h1M196 91h2M212 91h1M231 91h1M247 91h1M250 91h1M255 91h1M265 91h1M270 91h1M151 92h2M174 92h1M181 92h1M204 92h1M212 92h1M225 92h1M253 92h1M270 92h1M154 93h1M175 93h1M190 93h1M205 93h1M226 93h1M250 93h1M151 94h2M154 94h1M166 94h1M168 94h1M177 94h1M180 94h1M182 94h1M197 94h1M199 94h1M203 94h1M206 94h1M217 94h1M219 94h1M223 94h1M227 94h1M229 94h1M236 94h1M258 94h1M261 94h1M267 94h1M269 94h1M276 94h1M4 95h1M44 95h1M128 95h1M153 95h1M159 95h2M162 95h1M165 95h1M183 95h1M189 95h1M226 95h1M231 95h1M235 95h1M237 95h1M255 95h1M276 95h3M281 95h2M95 96h1M151 96h1M155 96h1M159 96h1M167 96h1M170 96h1M172 96h1M175 96h1M185 96h1M191 96h1M200 96h1M204 96h1M220 96h1M225 96h1M227 96h1M232 96h1M235 96h1M245 96h1M250 96h2M253 96h1M259 96h1M262 96h1M268 96h3M275 96h1M278 96h1M16 97h1M32 97h1M41 97h1M105 97h1M158 97h1M162 97h4M168 97h1M179 97h1M183 97h1M186 97h1M190 97h1M195 97h1M200 97h1M208 97h1M212 97h1M217 97h1M221 97h1M223 97h1M227 97h1M230 97h1M234 97h1M238 97h1M251 97h1M257 97h1M261 97h1M264 97h1M267 97h1M272 97h1M27 98h1M68 98h1M147 98h1M158 98h1M163 98h2M188 98h1M194 98h3M198 98h2M204 98h1M206 98h1M216 98h1M218 98h3M227 98h1M233 98h2M242 98h2M245 98h2M255 98h1M258 98h3M265 98h1M268 98h1M274 98h1M281 98h2M32 99h1M65 99h1M70 99h1M122 99h1M136 99h1M152 99h2M162 99h2M167 99h1M170 99h1M172 99h1M174 99h2M178 99h1M180 99h2M187 99h2M194 99h1M198 99h1M200 99h1M206 99h1M208 99h1M220 99h1M230 99h1M236 99h1M239 99h1M246 99h1M249 99h2M257 99h2M260 99h1M264 99h2M271 99h1M61 100h1M94 100h1M99 100h1M148 100h1M161 100h1M165 100h1M168 100h1M170 100h2M174 100h2M177 100h1M179 100h1M181 100h2M185 100h1M193 100h2M197 100h1M204 100h2M208 100h2M213 100h2M220 100h2M227 100h1M230 100h1M232 100h1M235 100h1M245 100h1M249 100h1M251 100h1M256 100h3M260 100h1M262 100h2M267 100h1M269 100h1M273 100h1M275 100h1M280 100h1M79 101h1M84 101h1M94 101h1M101 101h1M111 101h1M119 101h1M121 101h1M124 101h1M132 101h1M137 101h1M148 101h1M152 101h2M155 101h2M164 101h1M173 101h1M186 101h1M195 101h1M200 101h1M216 101h1M219 101h1M221 101h2M224 101h1M227 101h1M229 101h2M232 101h1M250 101h1M253 101h1M258 101h1M267 101h3M271 101h1M277 101h1M279 101h1M15 102h1M29 102h1M59 102h1M64 102h1M69 102h1M74 102h1M84 102h2M106 102h1M121 102h1M123 102h1M127 102h1M150 102h1M152 102h2M155 102h1M161 102h1M167 102h1M169 102h1M171 102h1M174 102h2M186 102h1M190 102h1M192 102h2M206 102h1M213 102h1M219 102h1M221 102h2M227 102h1M231 102h1M233 102h2M238 102h1M245 102h3M251 102h1M255 102h2M265 102h3M270 102h1M272 102h1M277 102h1M281 102h1M14 103h1M51 103h1M88 103h2M94 103h1M97 103h1M111 103h1M150 103h1M159 103h1M161 103h1M165 103h1M168 103h1M171 103h1M173 103h1M177 103h1M180 103h1M182 103h1M184 103h2M187 103h2M190 103h1M195 103h3M200 103h1M202 103h1M207 103h1M209 103h1M211 103h1M213 103h1M216 103h3M221 103h2M226 103h1M230 103h1M232 103h1M234 103h2M238 103h1M240 103h1M244 103h2M251 103h1M253 103h1M257 103h2M260 103h1M262 103h1M265 103h1M269 103h1M274 103h1M276 103h1M279 103h2M12 104h1M38 104h1M50 104h1M53 104h1M55 104h2M61 104h1M65 104h1M67 104h1M83 104h1M89 104h1M95 104h1M102 104h1M106 104h1M133 104h1M135 104h1M137 104h1M149 104h2M154 104h1M158 104h2M163 104h1M167 104h3M172 104h4M181 104h1M185 104h1M187 104h1M191 104h1M198 104h1M200 104h1M202 104h1M204 104h2M207 104h1M209 104h1M213 104h2M218 104h2M221 104h6M228 104h1M231 104h1M233 104h3M242 104h3M248 104h1M252 104h1M256 104h4M261 104h1M263 104h1M265 104h3M270 104h1M272 104h1M275 104h2M278 104h3M282 104h1M7 105h1M12 105h2M24 105h1M31 105h2M43 105h1M45 105h2M48 105h2M51 105h1M71 105h1M79 105h2M82 105h1M88 105h1M105 105h1M110 105h1M124 105h1M129 105h1M152 105h4M158 105h2M161 105h5M169 105h2M172 105h2M176 105h1M179 105h2M183 105h1M189 105h1M191 105h1M197 105h1M204 105h1M206 105h1M208 105h2M211 105h1M213 105h1M216 105h5M223 105h1M229 105h1M231 105h2M235 105h3M240 105h1M243 105h5M249 105h4M256 105h1M258 105h2M263 105h2M267 105h1M270 105h1M273 105h3M278 105h1M281 105h1M8 106h1M24 106h1M27 106h1M33 106h1M45 106h1M48 106h1M57 106h1M59 106h1M73 106h1M94 106h1M98 106h1M104 106h1M109 106h1M112 106h1M119 106h2M129 106h1M133 106h1M137 106h2M149 106h1M158 106h3M162 106h1M164 106h1M170 106h3M174 106h2M177 106h2M183 106h1M185 106h4M190 106h2M199 106h2M202 106h3M206 106h2M209 106h4M214 106h3M218 106h1M221 106h1M225 106h1M227 106h1M230 106h1M232 106h2M236 106h1M240 106h2M248 106h2M251 106h2M254 106h2M257 106h6M264 106h1M266 106h4M273 106h2M276 106h1M278 106h1M6 107h1M8 107h1M12 107h1M20 107h2M31 107h1M33 107h1M47 107h1M52 107h1M64 107h1M67 107h1M69 107h3M84 107h2M88 107h3M93 107h1M97 107h1M102 107h1M105 107h1M108 107h1M110 107h1M112 107h2M115 107h2M124 107h1M129 107h1M138 107h1M147 107h2M151 107h4M156 107h1M158 107h1M160 107h4M168 107h1M170 107h2M173 107h1M176 107h2M179 107h1M183 107h1M194 107h6M202 107h1M209 107h4M214 107h1M216 107h2M221 107h1M224 107h1M226 107h2M229 107h2M233 107h2M240 107h2M244 107h1M247 107h1M252 107h1M255 107h1M257 107h1M261 107h2M269 107h1M272 107h5M278 107h1M280 107h2M9 108h1M11 108h1M17 108h1M23 108h1M25 108h1M33 108h1M35 108h1M43 108h1M52 108h1M54 108h1M65 108h1M67 108h1M69 108h1M74 108h2M77 108h2M83 108h1M85 108h1M105 108h2M108 108h2M115 108h1M118 108h1M121 108h1M123 108h1M125 108h1M131 108h1M134 108h1M137 108h1M148 108h3M152 108h1M156 108h3M161 108h2M169 108h3M174 108h5M181 108h1M183 108h1M185 108h1M187 108h2M193 108h1M195 108h1M197 108h1M199 108h1M201 108h1M205 108h1M208 108h1M219 108h3M224 108h3M231 108h1M234 108h1M236 108h1M240 108h3M247 108h2M250 108h2M253 108h1M255 108h4M261 108h4M269 108h4M275 108h1M280 108h1M282 108h1M9 109h1M11 109h3M16 109h1M19 109h3M26 109h1M29 109h2M33 109h1M35 109h1M38 109h1M41 109h5M47 109h3M54 109h1M57 109h1M59 109h3M66 109h1M70 109h1M72 109h1M80 109h2M85 109h1M87 109h1M91 109h1M93 109h2M96 109h1M103 109h1M110 109h2M116 109h1M122 109h3M127 109h1M130 109h1M134 109h1M139 109h1M147 109h2M150 109h4M155 109h1M157 109h2M162 109h2M166 109h5M172 109h1M175 109h1M177 109h2M182 109h1M186 109h1M188 109h1M195 109h2M201 109h2M206 109h1M209 109h1M211 109h1M215 109h1M220 109h2M224 109h2M228 109h1M230 109h1M232 109h4M237 109h1M239 109h1M241 109h4M246 109h1M251 109h3M255 109h5M262 109h1M265 109h2M271 109h1M273 109h1M277 109h1M281 109h2M6 110h1M8 110h1M11 110h1M18 110h2M25 110h2M28 110h4M39 110h1M41 110h5M55 110h2M58 110h1M65 110h1M67 110h1M69 110h1M78 110h3M87 110h1M89 110h3M95 110h10M109 110h2M113 110h5M127 110h3M131 110h1M133 110h1M135 110h1M137 110h2M148 110h1M152 110h2M155 110h1M160 110h4M165 110h1M167 110h2M170 110h1M172 110h1M174 110h3M178 110h1M182 110h2M185 110h2M191 110h1M193 110h1M195 110h1M200 110h1M202 110h1M207 110h1M211 110h1M213 110h2M219 110h1M222 110h1M228 110h1M230 110h3M235 110h3M239 110h1M241 110h2M244 110h2M247 110h1M252 110h1M254 110h1M256 110h1M260 110h5M266 110h1M268 110h2M271 110h1M273 110h1M279 110h1M5 111h2M8 111h2M13 111h2M16 111h2M20 111h2M23 111h1M27 111h2M31 111h2M39 111h1M42 111h2M45 111h1M47 111h1M50 111h1M56 111h1M59 111h1M64 111h1M75 111h1M77 111h1M79 111h1M81 111h1M83 111h1M90 111h1M92 111h1M96 111h1M98 111h1M102 111h2M109 111h1M114 111h2M119 111h2M124 111h1M130 111h1M132 111h1M138 111h2M150 111h1M158 111h4M164 111h3M172 111h2M175 111h1M177 111h1M182 111h2M185 111h1M188 111h1M191 111h1M194 111h1M196 111h2M199 111h1M202 111h3M210 111h1M212 111h1M215 111h1M217 111h2M226 111h1M229 111h1M235 111h1M237 111h3M241 111h1M248 111h1M251 111h1M254 111h1M256 111h2M259 111h1M263 111h4M268 111h1M270 111h1M273 111h1M276 111h2M279 111h4M5 112h1M12 112h1M15 112h1M18 112h2M21 112h1M23 112h1M25 112h1M29 112h6M38 112h1M41 112h2M47 112h1M51 112h2M54 112h2M66 112h2M74 112h1M78 112h1M80 112h2M84 112h5M91 112h1M95 112h1M97 112h2M104 112h1M106 112h1M109 112h1M114 112h4M123 112h1M125 112h3M131 112h1M136 112h2M139 112h1M151 112h1M154 112h3M160 112h3M168 112h2M173 112h1M176 112h2M180 112h1M185 112h1M187 112h1M190 112h2M197 112h2M201 112h1M204 112h1M206 112h1M209 112h2M215 112h1M217 112h2M221 112h1M226 112h1M228 112h1M230 112h1M233 112h2M237 112h1M244 112h2M247 112h2M251 112h1M255 112h1M257 112h3M267 112h5M273 112h3M280 112h2M13 113h1M15 113h1M18 113h2M23 113h6M30 113h3M34 113h6M45 113h2M48 113h1M52 113h1M54 113h1M56 113h1M59 113h1M61 113h1M63 113h3M67 113h1M70 113h1M75 113h5M82 113h1M84 113h1M86 113h4M91 113h2M95 113h1M97 113h1M99 113h2M105 113h4M111 113h4M117 113h1M119 113h1M122 113h2M126 113h1M128 113h2M132 113h1M134 113h1M138 113h2M150 113h1M152 113h1M155 113h1M159 113h1M164 113h1M167 113h1M169 113h2M173 113h3M178 113h1M193 113h1M195 113h5M203 113h2M206 113h1M210 113h1M217 113h1M226 113h1M228 113h1M235 113h4M243 113h1M251 113h1M255 113h1M257 113h1M259 113h1M262 113h2M265 113h1M270 113h1M273 113h2M7 114h1M10 114h2M15 114h2M19 114h2M31 114h1M33 114h4M38 114h2M43 114h1M46 114h2M49 114h4M56 114h3M62 114h1M64 114h3M70 114h2M74 114h1M76 114h2M81 114h1M83 114h1M85 114h3M89 114h4M94 114h2M97 114h1M99 114h1M101 114h6M112 114h1M114 114h2M117 114h2M120 114h2M124 114h2M128 114h4M134 114h2M148 114h1M151 114h1M155 114h3M161 114h4M166 114h3M172 114h3M176 114h2M182 114h1M184 114h3M189 114h1M199 114h1M202 114h1M207 114h1M216 114h1M220 114h1M223 114h2M228 114h1M230 114h1M240 114h4M251 114h2M254 114h1M256 114h1M259 114h3M269 114h1M273 114h1M276 114h1M7 115h5M14 115h1M16 115h2M20 115h1M25 115h1M27 115h3M37 115h1M39 115h1M41 115h3M45 115h2M49 115h1M51 115h4M57 115h6M64 115h1M66 115h1M69 115h2M76 115h3M82 115h1M84 115h4M92 115h2M97 115h1M102 115h1M107 115h1M110 115h3M116 115h1M119 115h2M122 115h2M126 115h1M129 115h2M133 115h1M135 115h2M139 115h1M149 115h2M152 115h6M159 115h2M162 115h1M164 115h1M169 115h1M171 115h2M174 115h2M181 115h1M183 115h2M186 115h1M188 115h1M190 115h3M195 115h3M200 115h1M207 115h2M221 115h2M226 115h1M230 115h2M241 115h1M245 115h1M247 115h4M254 115h2M257 115h1M260 115h1M264 115h1M268 115h1M270 115h2M273 115h1M279 115h1M281 115h1M5 116h2M8 116h1M11 116h1M17 116h1M22 116h1M24 116h1M26 116h1M28 116h4M37 116h1M39 116h2M45 116h2M48 116h2M54 116h6M61 116h6M71 116h1M73 116h2M76 116h1M78 116h3M82 116h2M85 116h2M91 116h1M93 116h2M98 116h1M103 116h1M105 116h5M114 116h1M119 116h1M126 116h2M131 116h1M135 116h1M137 116h1M148 116h1M151 116h2M159 116h1M165 116h1M169 116h1M172 116h2M181 116h1M184 116h1M187 116h1M191 116h1M193 116h1M198 116h1M203 116h1M205 116h2M214 116h1M216 116h1M222 116h1M230 116h1M234 116h2M240 116h1M243 116h2M251 116h3M261 116h1M264 116h3M268 116h1M271 116h1M274 116h1M279 116h1M5 117h3M11 117h1M13 117h1M15 117h2M20 117h6M29 117h2M33 117h1M35 117h1M38 117h2M41 117h2M45 117h2M50 117h5M56 117h2M59 117h2M62 117h2M65 117h2M68 117h2M73 117h3M78 117h3M82 117h1M88 117h1M93 117h3M97 117h2M100 117h1M102 117h3M106 117h1M112 117h2M116 117h1M119 117h1M121 117h2M124 117h2M127 117h1M131 117h1M133 117h2M136 117h4M149 117h2M154 117h1M158 117h1M162 117h1M164 117h1M173 117h2M178 117h1M185 117h1M187 117h2M193 117h1M196 117h1M205 117h1M210 117h3M215 117h1M217 117h2M222 117h1M229 117h1M234 117h2M237 117h1M245 117h1M257 117h1M272 117h1M275 117h1M5 118h1M7 118h3M11 118h1M13 118h1M16 118h1M20 118h1M24 118h1M31 118h1M33 118h1M35 118h1M39 118h1M41 118h1M44 118h1M46 118h1M51 118h3M56 118h4M61 118h1M67 118h1M70 118h4M76 118h2M81 118h4M87 118h2M90 118h2M95 118h1M97 118h2M100 118h3M104 118h5M110 118h1M112 118h2M115 118h1M117 118h1M119 118h1M123 118h3M128 118h1M131 118h3M135 118h1M137 118h1M148 118h1M152 118h2M155 118h2M158 118h1M160 118h1M162 118h1M164 118h1M170 118h1M176 118h1M178 118h3M182 118h1M184 118h1M186 118h1M192 118h2M198 118h1M200 118h2M206 118h3M212 118h1M217 118h1M222 118h1M228 118h2M241 118h1M251 118h2M254 118h1M257 118h1M259 118h1M261 118h1M263 118h1M272 118h1M276 118h1M280 118h1M282 118h1M6 119h1M8 119h1M10 119h1M18 119h2M21 119h3M25 119h4M30 119h6M38 119h1M42 119h1M44 119h2M47 119h2M51 119h1M54 119h2M59 119h1M65 119h5M71 119h2M74 119h1M76 119h6M87 119h1M91 119h4M96 119h1M98 119h3M102 119h2M106 119h1M110 119h1M113 119h3M118 119h1M121 119h1M127 119h1M130 119h1M133 119h1M135 119h1M139 119h1M149 119h1M157 119h1M168 119h1M177 119h2M183 119h1M192 119h1M195 119h2M205 119h1M214 119h1M221 119h2M225 119h1M227 119h3M235 119h3M251 119h2M261 119h1M273 119h1M5 120h1M7 120h4M13 120h2M17 120h2M20 120h1M24 120h1M26 120h5M34 120h4M40 120h1M44 120h2M47 120h1M50 120h1M52 120h1M55 120h4M61 120h2M65 120h1M67 120h1M69 120h1M71 120h1M75 120h1M78 120h1M80 120h2M83 120h3M88 120h2M98 120h1M101 120h3M106 120h1M108 120h1M112 120h1M114 120h1M116 120h1M118 120h2M122 120h1M126 120h3M132 120h4M137 120h1M150 120h1M153 120h1M167 120h2M170 120h1M176 120h1M192 120h1M205 120h1M220 120h1M228 120h1M230 120h1M236 120h1M238 120h1M245 120h1M247 120h1M261 120h1M265 120h1M6 121h3M10 121h2M14 121h1M17 121h1M19 121h2M25 121h1M28 121h1M32 121h1M34 121h1M36 121h1M41 121h1M44 121h4M51 121h2M61 121h1M65 121h1M67 121h1M69 121h1M76 121h1M82 121h3M90 121h1M92 121h1M94 121h1M96 121h1M99 121h4M104 121h1M107 121h1M109 121h1M113 121h3M117 121h2M121 121h2M124 121h3M130 121h1M135 121h2M138 121h2M150 121h1M152 121h1M156 121h3M160 121h1M171 121h1M173 121h1M180 121h1M183 121h1M189 121h1M202 121h1M229 121h1M238 121h1M242 121h1M244 121h2M248 121h1M252 121h1M255 121h1M279 121h1M5 122h5M19 122h2M24 122h2M29 122h1M31 122h4M37 122h1M39 122h1M41 122h1M43 122h3M47 122h1M50 122h2M53 122h2M56 122h2M59 122h3M65 122h1M84 122h1M88 122h1M90 122h1M92 122h2M96 122h1M98 122h3M104 122h2M113 122h1M117 122h2M121 122h3M125 122h2M128 122h3M132 122h1M159 122h1M163 122h1M170 122h1M214 122h1M227 122h1M230 122h1M244 122h1M251 122h1M258 122h1M270 122h1M9 123h2M14 123h6M22 123h1M24 123h3M31 123h2M35 123h1M39 123h1M41 123h1M50 123h2M53 123h1M56 123h2M60 123h2M63 123h1M65 123h2M68 123h1M70 123h1M77 123h1M79 123h1M88 123h1M92 123h1M94 123h4M100 123h2M110 123h2M113 123h1M119 123h1M125 123h1M130 123h4M135 123h1M137 123h3M150 123h1M162 123h1M174 123h1M176 123h1M179 123h1M213 123h1M218 123h1M236 123h1M5 124h1M9 124h1M11 124h1M15 124h1M17 124h1M19 124h1M21 124h1M23 124h2M28 124h3M34 124h1M44 124h2M51 124h2M60 124h1M65 124h1M68 124h4M75 124h2M79 124h1M89 124h5M98 124h1M103 124h1M105 124h2M111 124h1M118 124h1M121 124h1M125 124h1M127 124h1M136 124h1M138 124h1M149 124h1M153 124h1M159 124h1M184 124h1M211 124h1M219 124h1M227 124h1M249 124h1M5 125h2M9 125h1M13 125h3M22 125h1M24 125h1M32 125h3M37 125h1M40 125h1M42 125h1M44 125h2M47 125h3M52 125h2M55 125h1M68 125h1M71 125h1M84 125h3M94 125h2M100 125h1M102 125h2M105 125h1M107 125h1M110 125h1M119 125h1M121 125h1M128 125h1M130 125h1M137 125h2M193 125h1M221 125h1M8 126h1M10 126h1M15 126h1M17 126h1M20 126h1M22 126h2M26 126h1M32 126h1M35 126h2M41 126h1M50 126h1M58 126h1M60 126h1M62 126h2M77 126h6M90 126h1M115 126h1M133 126h1M139 126h1M174 126h1M182 126h1M10 127h1M15 127h1M20 127h1M24 127h1M30 127h1M45 127h1M47 127h1M49 127h1M80 127h2M88 127h1M91 127h1M94 127h1M99 127h2M104 127h1M122 127h1M129 127h1M193 127h1M199 127h1M201 127h1M240 127h1M10 128h1M31 128h1M34 128h1M41 128h1M43 128h1M57 128h1M72 128h1M74 128h1M86 128h1M89 128h1M112 128h1M124 128h1M128 128h1M130 128h2M174 128h1M186 128h1M34 129h1M38 129h1M70 129h1M89 129h1M125 129h1M135 129h1M23 130h1M29 130h1M44 130h1M48 130h1M53 130h1M74 130h1M91 130h1M114 130h1M171 130h1M24 131h1M68 131h1M102 131h1M126 131h1M57 132h1M102 132h1M131 132h1M56 133h2M121 133h1M133 133h1M150 134h1M62 135h1" stroke="#00ff00" stroke-width="1" fill="none" transform="translate(0,0.5)"/></svg>
<div class="w t or" style="left:289px;top:102px;width:143px;height:40px;line-height:37px;letter-spacing:-0.06px;">SW Status : N/A</div>
<div class="w t or" style="left:289px;top:142px;width:143px;height:40px;line-height:37px;letter-spacing:-0.12px;">DE mode : N/A</div>
<div class="w t rd" style="left:289px;top:182px;width:143px;height:40px;line-height:37px;letter-spacing:0.28px;">ping : 60</div>
<div class="w g" style="left:289px;top:228px;width:143px;height:49px;line-height:46px;">Ct : 231</div>
<div class="w g" style="left:289px;top:277px;width:143px;height:49px;line-height:46px;">Ct/s : 14</div>
<div class="w o" style="left:289px;top:331px;width:143px;height:49px;line-height:46px;letter-spacing:0.3px;"># of det. strips</div>
<div class="w o" style="left:289px;top:380px;width:72px;height:49px;line-height:46px;">Al : 0</div>
<div class="w o" style="left:361px;top:380px;width:71px;height:49px;line-height:46px;">Pt : 0</div>
<div class="w b" style="left:289px;top:435px;width:143px;height:49px;line-height:46px;letter-spacing:0.23px;"># of rest evt. frame</div>
<div class="w b" style="left:289px;top:484px;width:72px;height:48px;line-height:45px;letter-spacing:0.16px;">t : 0</div>
<div class="w b" style="left:361px;top:484px;width:71px;height:48px;line-height:45px;letter-spacing:0.11px;">t-1 : 0</div>
<div class="wh" style="left:437px;top:102px;width:430px;height:430px"></div>
<div class="p " style="left:438px;top:103px;width:285px;height:286px;"></div>
<div class="abs" style="left:483px;top:384px;width:1px;height:4px;background:#98a1b0"></div>
<div class="abs" style="left:528px;top:384px;width:1px;height:4px;background:#98a1b0"></div>
<div class="abs" style="left:572px;top:384px;width:1px;height:4px;background:#98a1b0"></div>
<div class="abs" style="left:616px;top:384px;width:1px;height:4px;background:#98a1b0"></div>
<div class="abs" style="left:661px;top:384px;width:1px;height:4px;background:#98a1b0"></div>
<div class="abs" style="left:705px;top:384px;width:1px;height:4px;background:#98a1b0"></div>
<div class="abs" style="left:439px;top:120px;width:3px;height:1px;background:#98a1b0"></div>
<div class="abs" style="left:439px;top:165px;width:3px;height:1px;background:#98a1b0"></div>
<div class="abs" style="left:439px;top:210px;width:3px;height:1px;background:#98a1b0"></div>
<div class="abs" style="left:439px;top:255px;width:3px;height:1px;background:#98a1b0"></div>
<div class="abs" style="left:439px;top:300px;width:3px;height:1px;background:#98a1b0"></div>
<div class="abs" style="left:439px;top:345px;width:3px;height:1px;background:#98a1b0"></div>
<div class="lb" style="left:442px;top:372px">cdte2_pc.log</div>
<div class="abs" style="left:447px;top:246px;width:2px;height:2px;background:#0a3a0a"></div>
<div class="abs" style="left:447px;top:264px;width:2px;height:2px;background:#0a6a0a"></div>
<div class="abs" style="left:574px;top:246px;width:2px;height:2px;background:#00e000"></div>
<div class="p " style="left:438px;top:390px;width:284px;height:142px;"></div>
<div class="ax" style="left:508px;top:520px;width:140px;text-align:center">Strips [Pt:0-127, Al:127-255]</div>
<div class="ax" style="left:443px;top:461px;width:0;height:0;font-size:10.5px"><div style="position:absolute;left:0;top:0;transform:translate(-50%,-50%) rotate(-90deg);white-space:pre;line-height:12px">ADC/Energy</div></div>
<svg style="left:438px;top:390px" width="284" height="142" shape-rendering="crispEdges"><path d="" stroke="#0a6e0a" stroke-width="1" fill="none" transform="translate(0,0.5)"/><path d="M139 10h1M139 21h1M139 26h1M3 41h1M138 41h1M140 41h1M137 45h1M3 47h1M282 48h1M139 51h1M282 55h1M138 58h1M4 59h1M139 60h1M137 63h1M139 64h1M139 72h1M139 73h1M3 76h1M139 77h1M63 79h1M2 80h1M238 81h1M3 82h1M226 83h1M63 85h1M178 85h1M58 86h1M58 87h1M63 87h2M210 87h1M224 87h1M64 88h1M157 88h1M173 88h1M63 89h1M65 89h1M178 89h1M217 89h1M230 89h1M259 89h1M2 90h1M147 90h1M187 90h1M197 90h1M268 90h1M2 91h1M64 91h1M66 91h1M193 91h1M253 91h1M275 91h1M2 92h1M64 92h1M220 92h1M228 92h1M230 92h1M245 92h2M282 92h1M26 93h1M59 93h1M148 93h1M167 93h1M174 93h1M199 93h1M210 93h1M221 93h1M229 93h3M239 93h1M241 93h1M246 93h1M281 93h1M178 94h1M181 94h1M191 94h1M212 94h1M216 94h2M222 94h1M239 94h1M258 94h2M278 94h1M70 95h1M151 95h1M154 95h1M156 95h2M175 95h1M177 95h1M184 95h1M190 95h1M199 95h1M201 95h1M232 95h1M244 95h1M277 95h1M8 96h1M60 96h1M152 96h1M156 96h1M164 96h1M170 96h1M172 96h1M188 96h1M193 96h1M199 96h1M205 96h1M219 96h1M223 96h1M225 96h1M242 96h1M244 96h1M252 96h1M257 96h1M263 96h1M267 96h2M57 97h1M155 97h1M166 97h1M172 97h3M176 97h1M187 97h1M189 97h1M207 97h1M226 97h1M231 97h1M244 97h1M251 97h1M253 97h1M258 97h2M261 97h1M263 97h1M274 97h1M60 98h1M70 98h1M148 98h1M151 98h1M179 98h1M181 98h1M186 98h1M190 98h1M194 98h1M203 98h1M217 98h1M228 98h1M231 98h1M233 98h1M235 98h1M260 98h1M268 98h1M273 98h1M280 98h1M2 99h1M27 99h1M61 99h1M66 99h1M70 99h1M83 99h1M150 99h1M156 99h2M167 99h2M170 99h2M173 99h2M181 99h1M187 99h1M191 99h1M203 99h1M207 99h2M230 99h1M232 99h3M241 99h3M245 99h1M251 99h1M253 99h1M256 99h1M259 99h2M263 99h1M265 99h1M273 99h2M277 99h1M281 99h1M54 100h1M150 100h1M153 100h2M162 100h2M165 100h1M175 100h1M177 100h1M180 100h1M182 100h1M192 100h1M197 100h2M200 100h1M202 100h1M204 100h1M209 100h1M211 100h1M221 100h1M225 100h1M227 100h1M229 100h1M239 100h1M243 100h1M246 100h3M251 100h1M258 100h2M262 100h1M268 100h1M270 100h2M274 100h2M278 100h1M15 101h1M63 101h1M125 101h1M148 101h2M152 101h1M155 101h2M158 101h1M167 101h1M171 101h1M173 101h1M178 101h2M189 101h1M194 101h1M198 101h1M202 101h1M206 101h2M210 101h3M216 101h1M224 101h1M226 101h3M231 101h3M237 101h1M239 101h1M245 101h1M250 101h1M255 101h2M259 101h1M261 101h1M263 101h1M267 101h2M275 101h1M277 101h1M279 101h1M281 101h1M20 102h1M61 102h2M69 102h1M147 102h1M149 102h1M151 102h1M154 102h1M156 102h1M158 102h1M160 102h2M165 102h1M168 102h2M172 102h1M174 102h1M177 102h1M179 102h2M186 102h1M188 102h1M190 102h1M194 102h1M198 102h1M200 102h2M203 102h1M208 102h1M212 102h2M217 102h1M219 102h1M224 102h2M227 102h2M230 102h1M233 102h2M236 102h1M239 102h3M244 102h2M247 102h1M250 102h1M253 102h2M257 102h4M262 102h1M264 102h1M266 102h2M270 102h3M53 103h1M61 103h1M67 103h1M110 103h1M149 103h1M151 103h1M155 103h2M158 103h3M162 103h4M167 103h3M172 103h2M177 103h1M179 103h1M181 103h1M183 103h2M186 103h1M188 103h1M190 103h1M193 103h2M196 103h2M199 103h1M202 103h1M204 103h2M207 103h1M209 103h1M216 103h2M220 103h2M227 103h3M231 103h1M235 103h1M240 103h1M242 103h3M246 103h2M249 103h1M254 103h1M257 103h2M260 103h1M262 103h2M265 103h3M269 103h6M276 103h1M279 103h1M281 103h1M24 104h1M30 104h2M53 104h1M59 104h1M61 104h1M64 104h1M76 104h1M100 104h1M103 104h1M116 104h1M126 104h1M149 104h5M156 104h3M161 104h2M167 104h1M169 104h2M172 104h4M177 104h2M181 104h1M183 104h2M186 104h1M188 104h1M190 104h1M192 104h1M195 104h2M200 104h2M203 104h2M207 104h1M210 104h1M213 104h1M216 104h3M220 104h1M225 104h1M228 104h2M231 104h1M233 104h1M236 104h1M241 104h1M243 104h1M245 104h1M251 104h2M255 104h2M258 104h1M262 104h2M266 104h1M268 104h3M274 104h3M14 105h1M17 105h1M31 105h2M40 105h1M59 105h1M65 105h1M127 105h1M147 105h4M154 105h2M157 105h2M162 105h2M165 105h3M170 105h3M174 105h1M177 105h1M180 105h6M187 105h1M189 105h2M193 105h1M195 105h3M199 105h1M201 105h1M203 105h2M206 105h1M209 105h1M211 105h1M213 105h1M215 105h2M218 105h5M224 105h2M230 105h3M237 105h6M244 105h2M248 105h1M252 105h1M254 105h1M259 105h1M261 105h1M263 105h5M272 105h1M274 105h1M281 105h1M25 106h1M29 106h1M41 106h1M44 106h2M51 106h1M56 106h1M60 106h1M67 106h1M70 106h1M79 106h1M81 106h1M117 106h1M148 106h3M152 106h2M155 106h3M164 106h1M167 106h1M169 106h3M173 106h1M175 106h3M179 106h1M181 106h8M190 106h3M195 106h3M202 106h4M209 106h1M215 106h2M218 106h1M226 106h4M231 106h8M241 106h1M245 106h1M247 106h1M251 106h4M256 106h1M259 106h1M261 106h2M264 106h3M268 106h12M281 106h2M2 107h1M4 107h1M8 107h1M11 107h1M16 107h1M19 107h2M25 107h1M33 107h2M47 107h1M61 107h2M70 107h2M81 107h1M87 107h1M96 107h1M106 107h1M121 107h1M148 107h3M152 107h1M155 107h4M163 107h3M167 107h8M176 107h2M179 107h1M181 107h1M183 107h3M190 107h3M195 107h2M199 107h3M206 107h6M215 107h1M221 107h2M224 107h3M231 107h1M233 107h2M236 107h2M239 107h1M242 107h5M248 107h2M252 107h2M256 107h2M263 107h11M277 107h1M281 107h1M7 108h1M15 108h1M20 108h1M23 108h1M28 108h1M31 108h1M33 108h1M45 108h1M56 108h2M60 108h1M63 108h1M79 108h1M84 108h1M94 108h1M99 108h1M101 108h2M111 108h1M125 108h1M132 108h1M147 108h1M149 108h3M153 108h1M155 108h3M167 108h2M170 108h1M174 108h8M183 108h2M187 108h4M192 108h3M196 108h1M200 108h1M202 108h1M205 108h5M213 108h3M217 108h2M220 108h1M222 108h3M226 108h2M231 108h1M234 108h2M237 108h2M240 108h1M242 108h1M244 108h1M248 108h1M253 108h1M255 108h1M257 108h1M259 108h1M261 108h3M265 108h1M267 108h7M277 108h3M281 108h1M18 109h1M22 109h1M25 109h1M32 109h1M38 109h1M42 109h1M44 109h1M57 109h1M60 109h1M62 109h3M71 109h1M73 109h1M80 109h1M86 109h1M94 109h2M101 109h1M110 109h1M149 109h2M152 109h1M154 109h1M157 109h3M162 109h2M167 109h1M172 109h4M177 109h1M179 109h1M182 109h1M185 109h1M188 109h1M190 109h2M193 109h3M200 109h1M203 109h1M207 109h4M212 109h6M219 109h1M221 109h3M225 109h2M228 109h2M231 109h10M242 109h5M250 109h5M258 109h2M261 109h1M265 109h8M274 109h3M278 109h1M280 109h2M5 110h1M8 110h1M14 110h1M18 110h1M27 110h1M31 110h1M33 110h1M40 110h1M47 110h1M60 110h1M62 110h2M71 110h1M75 110h1M78 110h1M84 110h1M86 110h1M93 110h1M97 110h1M99 110h1M101 110h1M115 110h1M119 110h1M124 110h1M132 110h1M148 110h2M151 110h1M154 110h2M157 110h9M167 110h1M169 110h1M171 110h1M173 110h4M178 110h2M181 110h3M185 110h1M187 110h1M190 110h1M192 110h2M195 110h1M197 110h2M201 110h5M210 110h4M215 110h2M218 110h2M221 110h2M224 110h3M228 110h3M234 110h3M239 110h1M241 110h3M245 110h7M254 110h5M261 110h1M263 110h1M265 110h5M272 110h1M274 110h1M277 110h3M281 110h1M5 111h2M8 111h2M13 111h1M17 111h2M23 111h1M25 111h1M29 111h2M33 111h2M37 111h2M41 111h1M47 111h1M55 111h1M59 111h2M63 111h4M68 111h1M77 111h1M85 111h1M92 111h1M103 111h1M117 111h1M120 111h1M122 111h1M129 111h1M133 111h1M147 111h4M152 111h2M155 111h3M159 111h6M170 111h4M177 111h2M180 111h1M182 111h2M185 111h1M187 111h8M199 111h2M202 111h1M204 111h4M210 111h1M213 111h1M216 111h1M219 111h1M223 111h1M227 111h3M231 111h1M233 111h5M239 111h2M244 111h5M251 111h1M253 111h1M255 111h2M260 111h1M262 111h1M264 111h1M267 111h5M275 111h3M281 111h2M7 112h2M12 112h1M16 112h2M19 112h1M21 112h2M25 112h1M27 112h1M32 112h1M35 112h1M37 112h2M48 112h1M52 112h1M57 112h1M59 112h2M64 112h2M67 112h1M70 112h1M72 112h1M76 112h1M79 112h2M89 112h1M93 112h2M105 112h1M112 112h2M124 112h1M130 112h1M137 112h1M148 112h4M154 112h1M156 112h4M162 112h1M164 112h1M166 112h3M170 112h1M172 112h1M174 112h1M176 112h1M178 112h1M180 112h3M184 112h1M187 112h2M190 112h4M195 112h1M199 112h1M207 112h3M211 112h1M213 112h1M216 112h3M221 112h2M224 112h1M227 112h3M231 112h2M236 112h1M238 112h3M242 112h3M246 112h2M249 112h1M251 112h2M255 112h5M261 112h3M265 112h3M271 112h2M274 112h4M7 113h1M9 113h2M16 113h1M21 113h5M28 113h1M31 113h2M34 113h2M37 113h1M42 113h2M48 113h5M54 113h1M58 113h3M62 113h1M71 113h1M73 113h1M77 113h1M82 113h1M88 113h1M99 113h2M103 113h3M113 113h1M126 113h1M128 113h1M130 113h1M135 113h3M150 113h2M153 113h2M158 113h1M161 113h2M166 113h1M168 113h1M170 113h2M173 113h2M176 113h1M178 113h3M182 113h1M184 113h1M188 113h2M192 113h5M199 113h2M202 113h1M204 113h1M207 113h3M212 113h2M215 113h1M219 113h1M225 113h1M227 113h4M232 113h2M236 113h3M240 113h8M249 113h1M251 113h1M253 113h1M255 113h2M258 113h2M263 113h2M267 113h1M270 113h2M275 113h1M279 113h1M5 114h1M11 114h1M15 114h1M19 114h1M23 114h1M26 114h3M33 114h3M38 114h1M44 114h1M46 114h1M49 114h1M52 114h1M55 114h1M57 114h1M61 114h3M67 114h2M72 114h1M75 114h1M80 114h1M83 114h1M85 114h3M90 114h3M95 114h1M101 114h1M109 114h3M117 114h1M119 114h1M125 114h1M130 114h1M133 114h1M148 114h2M151 114h1M154 114h1M156 114h2M159 114h1M161 114h1M163 114h2M169 114h1M171 114h2M174 114h3M178 114h2M181 114h4M187 114h2M191 114h1M193 114h1M199 114h3M203 114h8M212 114h1M216 114h2M219 114h1M221 114h3M225 114h1M229 114h1M231 114h1M233 114h1M235 114h2M238 114h3M245 114h3M249 114h1M254 114h2M262 114h1M265 114h1M267 114h1M269 114h1M272 114h1M274 114h1M277 114h1M279 114h1M8 115h1M12 115h1M14 115h1M17 115h1M19 115h5M26 115h3M32 115h1M34 115h2M40 115h6M47 115h1M51 115h3M55 115h1M58 115h1M62 115h1M65 115h2M68 115h2M73 115h1M75 115h2M78 115h1M80 115h1M84 115h2M95 115h1M101 115h1M103 115h1M105 115h1M107 115h3M111 115h1M113 115h1M115 115h1M118 115h1M120 115h1M127 115h1M133 115h1M148 115h1M150 115h1M153 115h2M156 115h9M166 115h1M168 115h1M170 115h1M172 115h1M174 115h1M177 115h1M181 115h1M183 115h1M187 115h1M193 115h1M197 115h1M205 115h1M209 115h1M211 115h3M222 115h1M225 115h1M228 115h4M235 115h1M238 115h1M240 115h2M243 115h1M254 115h3M258 115h1M263 115h1M265 115h1M270 115h1M274 115h2M282 115h1M5 116h2M8 116h4M13 116h2M16 116h1M18 116h1M25 116h2M28 116h1M30 116h1M33 116h1M37 116h1M39 116h2M43 116h1M46 116h1M49 116h2M52 116h2M55 116h1M60 116h2M65 116h4M70 116h1M72 116h1M76 116h2M81 116h1M86 116h3M91 116h1M93 116h1M96 116h4M101 116h1M103 116h2M108 116h1M110 116h1M113 116h1M118 116h2M121 116h7M130 116h1M132 116h2M136 116h1M148 116h1M150 116h2M154 116h3M161 116h3M166 116h1M175 116h1M181 116h2M185 116h1M187 116h1M190 116h2M193 116h1M195 116h2M198 116h1M201 116h2M205 116h1M208 116h1M211 116h2M219 116h1M222 116h1M224 116h1M238 116h1M240 116h1M242 116h3M253 116h6M260 116h1M263 116h1M265 116h1M267 116h2M273 116h2M278 116h1M6 117h2M9 117h1M11 117h2M18 117h1M23 117h1M26 117h1M30 117h6M39 117h1M42 117h1M46 117h1M51 117h2M54 117h1M56 117h1M58 117h1M60 117h1M63 117h1M65 117h1M72 117h2M77 117h2M82 117h1M85 117h2M88 117h2M91 117h1M93 117h4M100 117h1M102 117h1M106 117h1M108 117h1M113 117h2M119 117h3M124 117h1M126 117h1M129 117h1M131 117h1M147 117h2M154 117h2M161 117h1M168 117h1M172 117h1M179 117h1M182 117h1M185 117h1M188 117h1M191 117h1M197 117h1M201 117h3M205 117h1M209 117h2M215 117h1M224 117h2M230 117h1M233 117h1M236 117h1M241 117h2M244 117h2M250 117h2M255 117h1M257 117h1M261 117h3M268 117h1M271 117h1M275 117h1M281 117h1M5 118h1M10 118h1M12 118h1M22 118h3M26 118h1M33 118h1M38 118h3M46 118h1M49 118h1M52 118h3M59 118h1M62 118h2M68 118h4M74 118h1M77 118h2M83 118h2M92 118h1M96 118h1M98 118h2M102 118h1M105 118h4M113 118h2M116 118h1M119 118h1M121 118h3M127 118h1M130 118h1M135 118h2M152 118h1M160 118h1M176 118h1M182 118h1M185 118h1M189 118h2M192 118h1M196 118h2M202 118h1M205 118h1M208 118h1M215 118h1M220 118h1M229 118h1M233 118h1M239 118h1M244 118h1M253 118h1M255 118h1M271 118h2M279 118h1M5 119h1M8 119h2M12 119h1M16 119h5M22 119h1M29 119h1M33 119h2M36 119h1M38 119h1M40 119h1M48 119h6M59 119h1M62 119h2M65 119h1M68 119h1M74 119h2M79 119h1M83 119h2M90 119h1M92 119h1M94 119h1M97 119h2M101 119h1M104 119h1M107 119h1M110 119h2M114 119h4M119 119h1M124 119h2M127 119h7M136 119h1M147 119h1M149 119h1M174 119h1M183 119h2M187 119h1M190 119h2M201 119h1M213 119h1M215 119h1M221 119h1M234 119h1M237 119h1M244 119h1M258 119h1M261 119h1M268 119h1M270 119h1M5 120h2M9 120h1M11 120h1M15 120h1M17 120h1M19 120h1M21 120h2M26 120h1M28 120h1M30 120h2M33 120h3M38 120h2M41 120h1M45 120h2M49 120h2M54 120h2M57 120h2M60 120h2M63 120h1M65 120h1M69 120h3M76 120h1M78 120h3M82 120h1M84 120h2M87 120h1M90 120h1M93 120h1M95 120h1M98 120h2M103 120h2M107 120h1M110 120h6M118 120h2M125 120h2M128 120h3M132 120h1M134 120h3M138 120h1M156 120h1M161 120h1M163 120h1M191 120h1M195 120h1M202 120h1M205 120h1M217 120h1M221 120h1M225 120h1M234 120h1M251 120h1M254 120h1M264 120h1M272 120h1M277 120h1M4 121h1M6 121h2M9 121h1M13 121h2M17 121h1M23 121h1M27 121h1M30 121h1M32 121h2M35 121h1M38 121h1M42 121h1M44 121h2M52 121h1M55 121h3M62 121h1M65 121h3M69 121h1M73 121h3M78 121h7M86 121h1M92 121h1M94 121h1M97 121h1M99 121h1M102 121h1M105 121h3M110 121h5M117 121h1M122 121h3M127 121h1M132 121h2M137 121h2M159 121h1M167 121h1M182 121h1M190 121h1M197 121h1M199 121h2M221 121h1M233 121h1M240 121h1M247 121h1M267 121h1M269 121h3M274 121h1M5 122h1M7 122h1M10 122h1M14 122h1M17 122h3M21 122h3M27 122h1M31 122h1M33 122h2M37 122h1M39 122h1M43 122h3M47 122h2M50 122h3M57 122h2M60 122h2M64 122h4M71 122h1M75 122h1M77 122h1M80 122h1M82 122h2M85 122h3M91 122h1M93 122h1M96 122h3M105 122h1M109 122h1M111 122h1M114 122h1M121 122h1M124 122h2M133 122h1M135 122h4M157 122h1M195 122h1M205 122h1M208 122h1M245 122h1M256 122h1M262 122h1M271 122h1M273 122h1M4 123h1M11 123h1M13 123h1M17 123h2M23 123h1M25 123h5M32 123h1M36 123h1M43 123h3M47 123h1M51 123h1M53 123h1M55 123h1M59 123h4M64 123h1M66 123h1M69 123h1M75 123h5M81 123h1M85 123h1M87 123h1M90 123h4M95 123h1M98 123h4M103 123h3M108 123h1M110 123h1M117 123h2M122 123h1M126 123h1M131 123h4M137 123h1M167 123h1M173 123h1M192 123h1M218 123h1M250 123h1M8 124h1M10 124h2M15 124h1M17 124h2M24 124h1M29 124h1M35 124h1M37 124h2M40 124h1M42 124h2M47 124h2M51 124h1M57 124h1M61 124h3M66 124h1M70 124h3M74 124h2M77 124h1M80 124h1M82 124h2M85 124h6M93 124h1M96 124h2M100 124h2M104 124h3M108 124h3M112 124h4M118 124h1M120 124h3M127 124h2M133 124h1M179 124h1M238 124h1M252 124h1M266 124h1M8 125h1M10 125h2M13 125h2M17 125h1M22 125h1M26 125h1M34 125h1M36 125h5M47 125h2M51 125h2M57 125h5M66 125h4M71 125h1M81 125h1M83 125h1M85 125h1M89 125h3M96 125h2M99 125h1M101 125h1M103 125h2M106 125h1M108 125h1M111 125h1M115 125h2M118 125h1M121 125h1M123 125h3M127 125h1M129 125h3M133 125h3M137 125h1M164 125h1M196 125h1M215 125h1M221 125h1M5 126h1M15 126h2M22 126h1M27 126h1M31 126h2M35 126h1M37 126h1M42 126h1M44 126h2M48 126h1M51 126h1M55 126h2M59 126h1M63 126h1M65 126h1M68 126h1M70 126h1M73 126h1M76 126h2M79 126h1M81 126h3M86 126h1M90 126h2M93 126h1M95 126h1M97 126h1M99 126h1M102 126h3M107 126h1M111 126h1M117 126h1M122 126h2M125 126h1M129 126h2M132 126h1M135 126h1M137 126h1M215 126h1M232 126h1M6 127h3M15 127h1M20 127h1M25 127h1M27 127h1M31 127h1M33 127h1M41 127h1M46 127h1M52 127h1M55 127h4M65 127h1M68 127h2M72 127h1M76 127h2M80 127h2M83 127h2M87 127h1M91 127h2M96 127h2M99 127h3M106 127h2M111 127h1M115 127h2M120 127h2M130 127h1M132 127h1M137 127h2M176 127h1M5 128h1M9 128h2M15 128h2M18 128h1M20 128h1M22 128h1M26 128h1M30 128h1M33 128h1M35 128h1M37 128h1M40 128h1M48 128h1M50 128h2M54 128h1M56 128h1M62 128h1M64 128h1M66 128h1M74 128h1M79 128h2M85 128h2M88 128h1M90 128h1M92 128h1M94 128h1M100 128h1M102 128h3M108 128h1M110 128h1M113 128h1M115 128h1M120 128h2M124 128h3M129 128h1M132 128h1M134 128h2M137 128h1M5 129h1M7 129h1M20 129h2M29 129h2M42 129h1M44 129h1M60 129h1M63 129h3M67 129h1M72 129h1M92 129h6M101 129h1M104 129h2M111 129h2M116 129h1M118 129h3M122 129h2M130 129h1M137 129h1M240 129h1M5 130h1M22 130h1M24 130h2M29 130h1M31 130h1M40 130h1M46 130h2M56 130h1M60 130h2M63 130h1M75 130h1M77 130h1M79 130h1M81 130h1M89 130h1M95 130h1M97 130h1M101 130h1M104 130h3M108 130h1M110 130h1M114 130h1M121 130h1M123 130h2M130 130h1M132 130h1M137 130h2M10 131h1M14 131h1M21 131h1M23 131h1M28 131h1M42 131h1M45 131h1M63 131h1M74 131h4M82 131h1M88 131h1M93 131h1M100 131h3M105 131h1M112 131h1M120 131h1M123 131h1M130 131h1M132 131h1M135 131h1M137 131h1M191 131h1M8 132h1M13 132h1M15 132h1M24 132h1M31 132h1M34 132h1M40 132h1M51 132h1M57 132h1M71 132h1M73 132h2M80 132h3M85 132h2M88 132h2M95 132h1M107 132h2M115 132h1M122 132h4M127 132h1M134 132h3M30 133h1M58 133h1M76 133h1M92 133h1M94 133h1M101 133h1M117 133h3M122 133h1M126 133h1M130 133h2M135 133h2M11 134h1M19 134h1M61 134h1M77 134h1M81 134h1M89 134h1M108 134h1M115 134h1M119 134h1M126 134h1M135 134h2M8 135h1M47 135h1M53 135h1M66 135h1M77 135h1M85 135h1M88 135h1M90 135h1M104 135h1M109 135h1M115 135h1M117 135h1M119 135h1M43 136h1M77 136h1M80 136h1M82 136h1M94 136h1M99 136h1M104 136h1M113 136h1M43 137h1M57 137h1M85 137h1M101 137h1M114 137h1M41 138h1M127 138h1M81 139h1M85 139h1M119 139h1" stroke="#00ff00" stroke-width="1" fill="none" transform="translate(0,0.5)"/></svg>
<div class="w t or" style="left:724px;top:102px;width:143px;height:40px;line-height:37px;letter-spacing:-0.06px;">SW Status : N/A</div>
<div class="w t or" style="left:724px;top:142px;width:143px;height:40px;line-height:37px;letter-spacing:-0.12px;">DE mode : N/A</div>
<div class="w t rd" style="left:724px;top:182px;width:143px;height:40px;line-height:37px;letter-spacing:0.28px;">ping : 60</div>
<div class="w g" style="left:724px;top:228px;width:143px;height:49px;line-height:46px;letter-spacing:0.03px;">Ct : 77</div>
<div class="w g" style="left:724px;top:277px;width:143px;height:49px;line-height:46px;">Ct/s : 14</div>
<div class="w o" style="left:724px;top:331px;width:143px;height:49px;line-height:46px;letter-spacing:0.3px;"># of det. strips</div>
<div class="w o" style="left:724px;top:380px;width:72px;height:49px;line-height:46px;">Al : 0</div>
<div class="w o" style="left:796px;top:380px;width:71px;height:49px;line-height:46px;">Pt : 0</div>
<div class="w b" style="left:724px;top:435px;width:143px;height:49px;line-height:46px;letter-spacing:0.23px;"># of rest evt. frame</div>
<div class="w b" style="left:724px;top:484px;width:72px;height:48px;line-height:45px;letter-spacing:0.16px;">t : 0</div>
<div class="w b" style="left:796px;top:484px;width:71px;height:48px;line-height:45px;letter-spacing:0.11px;">t-1 : 0</div>
<div class="wh" style="left:872px;top:102px;width:431px;height:430px"></div>
<div class="p " style="left:873px;top:103px;width:285px;height:286px;"></div>
<div class="abs" style="left:918px;top:384px;width:1px;height:4px;background:#98a1b0"></div>
<div class="abs" style="left:963px;top:384px;width:1px;height:4px;background:#98a1b0"></div>
<div class="abs" style="left:1007px;top:384px;width:1px;height:4px;background:#98a1b0"></div>
<div class="abs" style="left:1051px;top:384px;width:1px;height:4px;background:#98a1b0"></div>
<div class="abs" style="left:1096px;top:384px;width:1px;height:4px;background:#98a1b0"></div>
<div class="abs" style="left:1140px;top:384px;width:1px;height:4px;background:#98a1b0"></div>
<div class="abs" style="left:874px;top:120px;width:3px;height:1px;background:#98a1b0"></div>
<div class="abs" style="left:874px;top:165px;width:3px;height:1px;background:#98a1b0"></div>
<div class="abs" style="left:874px;top:210px;width:3px;height:1px;background:#98a1b0"></div>
<div class="abs" style="left:874px;top:255px;width:3px;height:1px;background:#98a1b0"></div>
<div class="abs" style="left:874px;top:300px;width:3px;height:1px;background:#98a1b0"></div>
<div class="abs" style="left:874px;top:345px;width:3px;height:1px;background:#98a1b0"></div>
<div class="lb" style="left:877px;top:372px">cdte3_pc.log</div>
<div class="abs" style="left:1014px;top:241px;width:2px;height:2px;background:#00e000"></div>
<div class="abs" style="left:1118px;top:241px;width:2px;height:2px;background:#00c000"></div>
<div class="abs" style="left:889px;top:272px;width:2px;height:2px;background:#00e000"></div>
<div class="abs" style="left:1002px;top:272px;width:2px;height:2px;background:#00e000"></div>
<div class="p " style="left:873px;top:390px;width:284px;height:142px;"></div>
<div class="ax" style="left:943px;top:520px;width:140px;text-align:center">Strips [Pt:0-127, Al:127-255]</div>
<div class="ax" style="left:878px;top:461px;width:0;height:0;font-size:10.5px"><div style="position:absolute;left:0;top:0;transform:translate(-50%,-50%) rotate(-90deg);white-space:pre;line-height:12px">ADC/Energy</div></div>
<svg style="left:873px;top:390px" width="284" height="142" shape-rendering="crispEdges"><path d="M140 14h1M2 17h1M139 21h1M137 24h1M2 27h1M281 36h1M281 40h1M2 43h1M140 43h1M281 43h1M3 44h1M140 45h1M138 46h1M141 47h1M137 49h1M2 50h1M137 50h1M281 50h1M75 51h1M280 51h1M280 52h1M141 55h1M1 56h1M73 56h1M76 56h1M84 56h1M71 57h1M138 60h1M281 60h1M77 61h1M53 62h1M76 62h1M3 63h1M54 64h1M76 64h2M139 64h1M74 65h1M3 66h2M55 66h1M58 66h1M74 66h1M77 66h1M51 69h1M57 69h1M56 70h2M68 70h1M73 70h1M75 70h1M142 70h1M279 70h1M141 71h1M73 72h1M75 72h1M139 72h1M279 72h1M51 73h1M58 73h1M67 73h1M76 73h1M193 73h1M56 74h1M138 74h1M60 76h1M139 76h1M77 77h1M139 77h1M56 78h1M138 78h1M139 79h1M74 80h1M76 80h1M217 80h1M281 80h1M51 81h1M140 81h1M165 81h1M55 82h2M75 82h1M202 82h1M57 83h1M177 83h1M277 83h1M4 84h1M53 84h1M60 84h1M76 84h1M118 84h1M140 84h2M149 84h1M173 84h1M203 84h1M57 85h1M59 85h1M95 85h1M100 85h1M147 85h1M162 85h1M243 85h1M253 85h1M57 86h1M73 86h1M75 86h1M165 86h2M187 86h1M231 86h1M235 86h1M280 86h1M7 87h1M59 87h1M76 87h1M123 87h1M138 87h1M141 87h1M152 87h1M164 87h1M181 87h1M189 87h1M200 87h1M203 87h1M248 87h1M271 87h1M33 88h1M37 88h1M58 88h1M74 88h1M169 88h2M175 88h1M179 88h1M185 88h1M189 88h1M205 88h1M230 88h1M245 88h1M280 88h1M20 89h1M24 89h1M31 89h1M35 89h1M69 89h1M75 89h2M80 89h1M135 89h1M170 89h1M175 89h1M189 89h1M211 89h1M221 89h1M275 89h1M6 90h1M52 90h1M78 90h1M88 90h1M99 90h1M113 90h2M136 90h1M156 90h1M171 90h2M184 90h1M193 90h1M215 90h1M223 90h1M232 90h1M239 90h1M252 90h1M263 90h1M268 90h1M280 90h1M11 91h1M41 91h1M59 91h2M147 91h1M149 91h1M159 91h2M175 91h2M178 91h1M203 91h1M211 91h1M215 91h1M218 91h1M220 91h2M238 91h1M242 91h1M252 91h1M261 91h1M265 91h1M267 91h1M273 91h1M279 91h1M3 92h1M23 92h1M51 92h1M67 92h1M72 92h1M94 92h1M101 92h1M138 92h1M159 92h1M168 92h1M175 92h1M180 92h1M192 92h1M205 92h1M221 92h1M230 92h1M258 92h1M264 92h1M272 92h1M12 93h1M20 93h2M56 93h2M73 93h1M77 93h1M79 93h1M107 93h1M118 93h1M122 93h1M128 93h1M137 93h1M172 93h1M175 93h1M177 93h1M179 93h1M187 93h1M189 93h1M197 93h1M199 93h2M207 93h1M209 93h1M230 93h1M251 93h1M253 93h1M52 94h1M54 94h2M57 94h2M60 94h1M69 94h1M71 94h1M86 94h1M98 94h1M102 94h1M110 94h1M126 94h1M138 94h2M141 94h1M157 94h1M161 94h1M164 94h1M167 94h1M173 94h1M177 94h1M185 94h1M193 94h1M196 94h1M206 94h1M219 94h1M228 94h2M234 94h1M237 94h1M262 94h1M265 94h1M267 94h1M278 94h2M3 95h1M54 95h2M57 95h1M59 95h1M72 95h1M90 95h1M104 95h1M113 95h1M122 95h1M157 95h1M162 95h1M164 95h2M176 95h2M179 95h3M190 95h2M200 95h1M204 95h1M212 95h1M215 95h2M220 95h1M228 95h3M240 95h2M259 95h1M261 95h1M266 95h1M271 95h1M274 95h1M10 96h1M16 96h1M22 96h1M57 96h1M62 96h1M64 96h1M73 96h2M76 96h1M86 96h1M105 96h1M130 96h1M139 96h1M148 96h1M154 96h1M159 96h1M168 96h1M198 96h1M200 96h1M202 96h1M210 96h1M216 96h1M219 96h2M222 96h1M226 96h1M229 96h2M232 96h2M236 96h1M246 96h1M248 96h1M250 96h2M257 96h1M259 96h1M264 96h1M268 96h1M271 96h1M274 96h2M5 97h1M7 97h1M9 97h1M22 97h1M43 97h1M48 97h1M64 97h1M70 97h1M75 97h2M87 97h1M93 97h1M99 97h1M111 97h3M118 97h1M127 97h1M129 97h1M136 97h1M148 97h1M152 97h1M158 97h1M160 97h1M167 97h1M171 97h6M183 97h1M187 97h1M192 97h2M201 97h1M206 97h2M209 97h1M212 97h1M219 97h1M221 97h1M223 97h2M226 97h1M238 97h1M241 97h2M250 97h1M258 97h1M261 97h1M265 97h1M274 97h2M279 97h1M10 98h1M16 98h1M22 98h2M53 98h1M57 98h2M63 98h1M71 98h1M73 98h1M76 98h1M80 98h1M84 98h2M101 98h1M104 98h1M149 98h1M151 98h1M153 98h1M156 98h1M158 98h1M163 98h3M167 98h2M170 98h2M174 98h1M180 98h1M184 98h2M187 98h1M189 98h1M195 98h1M197 98h1M200 98h1M203 98h1M207 98h1M212 98h3M217 98h1M220 98h1M223 98h1M226 98h2M233 98h2M236 98h1M240 98h1M243 98h1M245 98h4M250 98h1M254 98h3M258 98h1M260 98h4M267 98h2M270 98h3M278 98h1M281 98h1M5 99h1M12 99h1M18 99h1M25 99h1M32 99h1M42 99h1M56 99h1M61 99h1M74 99h2M93 99h1M101 99h1M116 99h1M124 99h1M138 99h1M161 99h3M166 99h1M174 99h1M176 99h1M184 99h1M190 99h1M193 99h3M197 99h5M203 99h1M207 99h1M209 99h1M211 99h3M217 99h1M220 99h1M222 99h1M228 99h1M230 99h2M241 99h1M248 99h2M251 99h3M258 99h1M267 99h1M271 99h4M276 99h1M278 99h1M6 100h1M12 100h1M14 100h1M17 100h2M25 100h1M28 100h1M46 100h1M54 100h1M56 100h1M58 100h1M66 100h2M75 100h1M84 100h2M95 100h1M100 100h1M111 100h1M136 100h2M153 100h2M156 100h1M168 100h1M170 100h1M172 100h1M175 100h1M180 100h1M186 100h4M192 100h1M195 100h2M198 100h1M200 100h1M205 100h1M207 100h1M210 100h1M212 100h2M215 100h1M217 100h2M220 100h1M222 100h1M224 100h1M226 100h1M229 100h1M233 100h1M235 100h3M242 100h1M245 100h1M248 100h1M251 100h1M253 100h1M255 100h1M257 100h4M262 100h3M267 100h5M273 100h1M276 100h1M278 100h1M280 100h1M6 101h2M10 101h4M18 101h1M21 101h1M25 101h2M29 101h1M31 101h2M35 101h1M39 101h2M51 101h1M53 101h1M57 101h1M60 101h1M62 101h1M66 101h1M72 101h1M76 101h1M90 101h1M96 101h2M101 101h1M109 101h2M122 101h1M124 101h1M131 101h1M134 101h3M147 101h3M151 101h1M155 101h3M159 101h2M162 101h1M164 101h2M172 101h1M177 101h2M182 101h1M185 101h1M187 101h2M191 101h2M195 101h2M199 101h1M205 101h1M211 101h2M215 101h1M217 101h1M225 101h1M232 101h1M234 101h1M237 101h1M240 101h1M244 101h4M249 101h1M251 101h2M255 101h1M257 101h3M265 101h3M269 101h1M272 101h1M274 101h3M278 101h1M281 101h1M6 102h1M9 102h1M12 102h1M18 102h1M20 102h1M22 102h1M29 102h1M31 102h1M40 102h1M42 102h1M46 102h1M51 102h1M56 102h1M60 102h3M66 102h1M68 102h1M77 102h2M82 102h1M87 102h1M89 102h1M95 102h1M100 102h1M110 102h2M125 102h2M128 102h1M138 102h1M149 102h2M156 102h1M159 102h3M163 102h3M167 102h1M170 102h3M176 102h1M179 102h1M185 102h1M188 102h2M191 102h3M195 102h1M197 102h1M200 102h2M203 102h1M207 102h2M210 102h1M213 102h1M217 102h1M219 102h1M222 102h1M224 102h1M228 102h1M230 102h2M233 102h1M236 102h1M238 102h1M240 102h2M245 102h1M247 102h1M250 102h1M253 102h2M256 102h6M263 102h1M265 102h1M270 102h3M275 102h2M278 102h1M280 102h1M282 102h1M10 103h1M12 103h2M16 103h2M20 103h2M25 103h1M35 103h1M40 103h1M43 103h3M51 103h3M63 103h1M65 103h1M67 103h2M85 103h1M97 103h1M100 103h1M108 103h1M112 103h1M122 103h1M128 103h1M130 103h6M138 103h1M147 103h3M153 103h1M158 103h1M160 103h4M166 103h3M172 103h1M175 103h1M181 103h1M183 103h2M186 103h1M189 103h1M191 103h1M195 103h2M199 103h1M201 103h5M207 103h2M211 103h1M214 103h3M218 103h2M221 103h1M224 103h2M237 103h1M239 103h1M241 103h1M243 103h1M245 103h1M247 103h1M253 103h1M255 103h1M259 103h1M261 103h1M263 103h1M267 103h2M270 103h2M277 103h5M7 104h1M9 104h3M14 104h1M16 104h1M20 104h1M23 104h1M25 104h1M29 104h1M37 104h1M39 104h1M42 104h1M49 104h1M53 104h2M58 104h3M65 104h2M68 104h3M84 104h1M86 104h1M88 104h2M93 104h1M96 104h1M98 104h1M101 104h1M103 104h1M107 104h2M111 104h1M118 104h1M121 104h2M130 104h2M137 104h1M151 104h1M153 104h1M157 104h1M160 104h1M164 104h2M174 104h2M177 104h2M181 104h3M185 104h2M190 104h1M192 104h1M196 104h1M198 104h2M202 104h2M207 104h1M210 104h2M215 104h3M219 104h1M225 104h1M227 104h4M232 104h2M236 104h2M241 104h1M244 104h1M248 104h1M250 104h2M254 104h1M257 104h2M261 104h2M264 104h3M269 104h2M272 104h1M275 104h4M280 104h1M5 105h1M9 105h3M13 105h4M20 105h1M23 105h1M26 105h3M30 105h1M33 105h2M37 105h1M40 105h1M44 105h1M46 105h2M49 105h2M55 105h1M58 105h1M60 105h1M64 105h1M66 105h2M69 105h1M72 105h1M78 105h1M81 105h1M84 105h2M90 105h1M93 105h2M97 105h2M101 105h1M106 105h1M112 105h1M115 105h1M118 105h1M120 105h1M126 105h1M131 105h3M137 105h2M152 105h2M155 105h1M159 105h2M168 105h2M171 105h1M173 105h1M176 105h1M180 105h3M192 105h2M201 105h1M205 105h1M207 105h2M210 105h2M215 105h1M217 105h2M220 105h2M224 105h1M232 105h1M234 105h1M236 105h1M241 105h1M243 105h1M250 105h3M255 105h2M258 105h1M262 105h2M265 105h5M271 105h1M273 105h1M279 105h2M282 105h1M5 106h1M8 106h3M12 106h1M19 106h1M21 106h1M25 106h1M34 106h2M41 106h3M47 106h1M50 106h1M54 106h1M58 106h2M62 106h3M66 106h1M68 106h1M70 106h1M72 106h1M75 106h1M78 106h2M86 106h1M90 106h1M92 106h1M94 106h2M99 106h2M103 106h1M106 106h2M112 106h1M115 106h1M119 106h1M124 106h1M126 106h2M130 106h1M132 106h1M138 106h2M147 106h1M154 106h1M156 106h2M160 106h1M164 106h3M170 106h3M174 106h1M178 106h1M182 106h3M187 106h1M190 106h1M192 106h3M202 106h1M204 106h2M208 106h1M216 106h1M219 106h1M221 106h1M224 106h3M229 106h1M232 106h2M237 106h2M242 106h1M246 106h1M251 106h2M257 106h2M260 106h1M264 106h1M267 106h1M269 106h2M272 106h3M276 106h5M282 106h1M7 107h2M11 107h1M13 107h1M15 107h3M22 107h1M26 107h1M28 107h1M31 107h1M34 107h2M38 107h1M41 107h1M46 107h2M49 107h5M56 107h2M61 107h1M68 107h1M71 107h1M74 107h1M79 107h1M82 107h2M85 107h1M88 107h3M93 107h1M95 107h1M97 107h2M103 107h2M106 107h1M108 107h2M116 107h1M119 107h1M122 107h2M125 107h1M128 107h1M130 107h1M132 107h6M149 107h1M154 107h1M156 107h1M158 107h1M160 107h2M163 107h1M165 107h2M169 107h2M176 107h1M178 107h1M184 107h2M187 107h1M190 107h2M193 107h2M199 107h1M201 107h4M208 107h2M212 107h2M215 107h1M217 107h2M220 107h2M224 107h1M235 107h2M238 107h3M243 107h2M248 107h2M251 107h1M257 107h1M260 107h1M263 107h1M267 107h1M271 107h1M278 107h2M281 107h1M5 108h1M7 108h2M11 108h3M15 108h2M18 108h1M21 108h2M27 108h2M30 108h2M33 108h2M36 108h1M39 108h2M44 108h1M46 108h1M48 108h1M51 108h2M55 108h1M57 108h1M62 108h1M64 108h1M68 108h3M73 108h2M76 108h2M79 108h1M81 108h1M83 108h8M92 108h4M97 108h1M101 108h1M103 108h1M109 108h1M111 108h1M113 108h2M121 108h1M124 108h1M128 108h2M136 108h2M147 108h1M149 108h1M151 108h1M153 108h1M156 108h3M163 108h2M167 108h2M171 108h1M182 108h1M185 108h1M191 108h1M194 108h1M196 108h1M198 108h3M202 108h3M207 108h1M209 108h3M214 108h1M220 108h4M225 108h2M230 108h3M234 108h1M236 108h1M238 108h3M246 108h2M249 108h1M254 108h1M256 108h1M258 108h1M263 108h1M269 108h1M271 108h1M274 108h2M8 109h1M13 109h7M21 109h1M23 109h1M25 109h1M29 109h2M32 109h3M37 109h1M39 109h3M43 109h5M49 109h1M57 109h1M59 109h1M64 109h2M67 109h1M69 109h4M76 109h1M78 109h3M86 109h1M90 109h1M92 109h5M98 109h1M103 109h1M107 109h2M110 109h2M119 109h2M124 109h2M128 109h1M131 109h1M133 109h1M135 109h1M137 109h2M147 109h3M155 109h3M159 109h4M165 109h1M168 109h2M172 109h5M178 109h1M180 109h1M182 109h1M184 109h3M189 109h3M193 109h1M199 109h1M202 109h1M204 109h1M206 109h1M210 109h1M220 109h2M223 109h1M226 109h1M231 109h3M235 109h2M241 109h1M244 109h1M247 109h2M254 109h2M257 109h1M260 109h4M267 109h1M270 109h2M278 109h1M282 109h1M5 110h2M9 110h1M11 110h1M14 110h10M25 110h1M28 110h1M30 110h1M32 110h1M36 110h1M39 110h3M43 110h1M45 110h3M50 110h1M52 110h3M56 110h2M59 110h4M67 110h1M69 110h1M75 110h1M78 110h2M83 110h1M88 110h1M91 110h2M94 110h1M96 110h2M99 110h1M102 110h3M106 110h1M112 110h2M118 110h1M124 110h3M128 110h3M132 110h2M135 110h3M149 110h1M151 110h1M153 110h1M156 110h2M159 110h3M164 110h1M166 110h2M172 110h3M177 110h1M179 110h1M181 110h1M183 110h4M191 110h2M194 110h1M207 110h2M213 110h1M215 110h1M217 110h1M221 110h2M226 110h4M234 110h2M238 110h2M241 110h1M243 110h1M247 110h1M249 110h1M253 110h4M261 110h1M263 110h1M266 110h1M269 110h6M278 110h4M6 111h6M16 111h1M22 111h1M27 111h2M30 111h2M38 111h1M40 111h1M42 111h1M44 111h2M50 111h1M52 111h1M55 111h2M59 111h3M65 111h1M68 111h3M73 111h1M75 111h1M79 111h6M86 111h2M93 111h1M95 111h4M100 111h5M107 111h2M112 111h1M115 111h1M119 111h2M122 111h1M124 111h2M130 111h1M132 111h1M135 111h1M147 111h5M153 111h2M160 111h1M162 111h1M164 111h1M169 111h2M172 111h1M174 111h1M176 111h1M180 111h1M182 111h1M185 111h1M189 111h2M192 111h1M195 111h2M201 111h1M205 111h1M208 111h1M211 111h2M215 111h1M220 111h1M222 111h1M229 111h1M231 111h1M235 111h1M238 111h1M240 111h7M249 111h1M251 111h1M257 111h1M263 111h1M265 111h1M268 111h1M270 111h2M276 111h1M280 111h2M6 112h2M12 112h2M15 112h2M18 112h1M20 112h2M27 112h2M31 112h1M35 112h2M39 112h2M46 112h1M49 112h2M52 112h1M57 112h2M61 112h1M63 112h1M65 112h1M68 112h4M73 112h1M75 112h1M77 112h2M80 112h1M82 112h4M87 112h1M90 112h1M93 112h4M98 112h3M106 112h1M108 112h1M117 112h1M119 112h1M121 112h3M125 112h2M128 112h1M132 112h1M136 112h2M139 112h1M147 112h2M150 112h1M152 112h1M154 112h1M157 112h1M159 112h1M161 112h4M168 112h1M171 112h1M174 112h1M176 112h1M178 112h1M180 112h1M182 112h2M186 112h1M189 112h1M192 112h1M196 112h3M202 112h1M204 112h1M207 112h2M214 112h4M221 112h1M223 112h1M225 112h1M228 112h3M233 112h3M237 112h3M241 112h4M248 112h2M251 112h1M253 112h1M256 112h3M261 112h2M269 112h2M273 112h1M279 112h1M281 112h1M5 113h2M11 113h1M14 113h1M17 113h2M20 113h1M23 113h1M33 113h3M37 113h2M41 113h1M44 113h1M48 113h1M50 113h2M53 113h1M55 113h1M57 113h1M60 113h1M62 113h3M69 113h1M71 113h1M75 113h1M80 113h2M83 113h2M87 113h1M89 113h1M91 113h1M94 113h2M97 113h2M101 113h1M106 113h2M109 113h2M112 113h2M115 113h3M120 113h1M122 113h2M125 113h3M130 113h2M134 113h2M138 113h2M147 113h3M154 113h6M161 113h3M165 113h1M168 113h1M173 113h1M175 113h1M177 113h2M180 113h5M186 113h1M188 113h2M194 113h1M198 113h1M204 113h1M207 113h2M210 113h2M216 113h1M218 113h2M222 113h1M227 113h1M230 113h1M232 113h1M239 113h4M246 113h1M248 113h1M259 113h2M262 113h1M265 113h1M267 113h4M274 113h1M276 113h2M279 113h4M5 114h1M7 114h2M12 114h1M17 114h2M21 114h1M26 114h2M30 114h1M32 114h1M35 114h1M37 114h4M44 114h1M46 114h1M48 114h2M52 114h1M54 114h1M56 114h1M58 114h2M66 114h5M73 114h2M80 114h1M82 114h2M85 114h3M91 114h3M95 114h1M97 114h12M110 114h1M112 114h1M114 114h1M118 114h2M121 114h3M127 114h2M132 114h2M137 114h1M139 114h1M154 114h1M158 114h1M160 114h2M164 114h1M166 114h3M173 114h1M178 114h5M184 114h1M186 114h1M188 114h1M196 114h1M199 114h9M209 114h5M216 114h1M221 114h1M223 114h3M227 114h1M231 114h1M233 114h1M235 114h1M237 114h3M242 114h1M246 114h1M248 114h1M250 114h1M254 114h1M261 114h1M264 114h1M266 114h1M270 114h5M277 114h1M279 114h2M6 115h2M10 115h7M19 115h1M23 115h1M25 115h5M32 115h2M35 115h1M37 115h1M39 115h2M42 115h4M47 115h5M53 115h1M55 115h1M59 115h2M62 115h1M68 115h3M75 115h2M80 115h2M85 115h2M91 115h2M94 115h2M97 115h1M99 115h1M102 115h2M105 115h1M109 115h1M112 115h1M114 115h1M116 115h1M118 115h1M120 115h1M124 115h1M126 115h1M128 115h2M134 115h1M136 115h2M149 115h1M151 115h2M154 115h3M161 115h1M164 115h3M168 115h2M173 115h2M178 115h2M183 115h1M188 115h1M190 115h2M194 115h1M197 115h1M199 115h2M203 115h1M206 115h1M208 115h5M215 115h1M217 115h2M225 115h1M228 115h1M230 115h1M233 115h6M240 115h1M242 115h1M244 115h1M246 115h1M248 115h1M252 115h2M264 115h1M268 115h2M271 115h2M274 115h1M278 115h2M281 115h1M8 116h3M13 116h2M16 116h2M19 116h1M21 116h2M24 116h2M29 116h1M32 116h2M35 116h1M37 116h1M41 116h1M43 116h3M48 116h2M54 116h3M63 116h1M65 116h4M71 116h1M73 116h1M75 116h3M79 116h2M82 116h1M85 116h1M99 116h1M102 116h2M105 116h1M110 116h2M115 116h4M120 116h1M122 116h4M128 116h1M132 116h1M135 116h2M138 116h1M147 116h2M154 116h1M157 116h3M164 116h2M167 116h1M169 116h1M171 116h3M175 116h2M179 116h1M184 116h2M188 116h1M198 116h1M201 116h2M204 116h1M207 116h1M211 116h1M216 116h1M221 116h2M224 116h1M227 116h2M231 116h2M234 116h1M237 116h2M241 116h1M245 116h1M248 116h1M251 116h3M257 116h1M259 116h2M266 116h1M268 116h1M270 116h2M274 116h1M276 116h1M278 116h2M8 117h2M14 117h3M21 117h1M23 117h1M25 117h1M27 117h3M31 117h1M37 117h3M43 117h2M47 117h1M50 117h1M54 117h1M57 117h2M60 117h2M68 117h4M75 117h1M77 117h4M82 117h2M85 117h1M92 117h1M94 117h2M100 117h1M104 117h1M107 117h2M110 117h1M113 117h4M119 117h1M125 117h2M130 117h1M133 117h6M147 117h3M152 117h4M160 117h1M165 117h2M170 117h2M173 117h2M179 117h2M182 117h2M185 117h3M190 117h1M193 117h1M195 117h1M199 117h2M202 117h1M205 117h1M207 117h1M210 117h1M213 117h1M216 117h2M220 117h1M224 117h2M228 117h2M234 117h1M238 117h1M240 117h1M243 117h4M250 117h1M254 117h1M260 117h1M264 117h1M266 117h1M274 117h3M278 117h1M282 117h1M5 118h1M7 118h1M9 118h2M12 118h1M14 118h1M16 118h2M20 118h1M22 118h1M25 118h2M28 118h1M30 118h3M34 118h1M39 118h1M42 118h2M45 118h1M48 118h2M53 118h5M60 118h1M62 118h1M64 118h1M67 118h3M71 118h2M75 118h1M78 118h1M80 118h1M82 118h2M85 118h3M89 118h1M93 118h1M96 118h1M101 118h1M103 118h1M105 118h1M107 118h1M109 118h1M113 118h1M120 118h2M123 118h2M129 118h1M131 118h1M133 118h1M138 118h1M149 118h1M152 118h3M159 118h1M162 118h1M164 118h3M168 118h2M173 118h1M175 118h3M180 118h4M185 118h1M188 118h1M191 118h1M193 118h3M197 118h2M200 118h1M207 118h1M209 118h4M214 118h1M216 118h1M218 118h1M222 118h1M224 118h1M235 118h1M237 118h1M240 118h2M244 118h4M253 118h4M261 118h1M264 118h2M268 118h3M272 118h1M274 118h1M276 118h2M280 118h3M10 119h1M12 119h3M17 119h1M24 119h1M30 119h2M33 119h3M38 119h2M41 119h1M43 119h1M45 119h4M50 119h1M52 119h1M56 119h1M59 119h4M64 119h2M67 119h1M69 119h4M74 119h1M79 119h1M81 119h1M85 119h1M87 119h1M89 119h1M91 119h3M97 119h2M100 119h1M103 119h4M108 119h1M110 119h1M113 119h1M115 119h1M117 119h1M121 119h2M124 119h3M129 119h3M133 119h1M148 119h1M154 119h1M157 119h1M160 119h2M163 119h1M165 119h1M167 119h2M172 119h1M176 119h1M182 119h3M186 119h1M189 119h2M192 119h2M195 119h5M205 119h1M208 119h1M210 119h1M216 119h1M218 119h2M222 119h1M229 119h1M233 119h3M237 119h1M239 119h2M242 119h1M246 119h1M250 119h1M253 119h1M255 119h3M261 119h1M264 119h3M269 119h5M277 119h4M8 120h4M19 120h1M23 120h3M28 120h4M33 120h1M35 120h1M37 120h1M40 120h2M43 120h3M51 120h3M57 120h1M61 120h3M66 120h1M74 120h2M79 120h1M85 120h5M91 120h1M94 120h6M101 120h2M105 120h2M113 120h1M115 120h1M119 120h1M124 120h1M127 120h1M129 120h3M133 120h2M137 120h3M147 120h1M151 120h2M154 120h2M157 120h1M160 120h2M163 120h1M169 120h2M173 120h1M176 120h1M178 120h1M184 120h1M189 120h1M191 120h2M194 120h3M198 120h1M201 120h1M203 120h1M205 120h1M207 120h3M211 120h1M215 120h2M221 120h1M223 120h3M227 120h2M230 120h2M236 120h6M243 120h2M248 120h1M252 120h2M255 120h4M261 120h1M263 120h1M265 120h2M272 120h1M275 120h1M278 120h1M281 120h1M11 121h1M13 121h1M15 121h1M17 121h3M22 121h2M25 121h2M29 121h1M32 121h1M34 121h2M37 121h4M42 121h1M48 121h2M57 121h1M60 121h3M64 121h1M72 121h7M81 121h1M83 121h1M89 121h1M91 121h2M96 121h2M99 121h3M103 121h1M107 121h1M111 121h1M116 121h1M119 121h1M122 121h2M125 121h1M128 121h1M130 121h1M135 121h2M138 121h1M148 121h1M150 121h1M152 121h1M155 121h2M159 121h2M163 121h4M168 121h1M170 121h3M174 121h2M180 121h3M184 121h3M188 121h1M190 121h4M201 121h1M208 121h2M215 121h1M218 121h1M221 121h1M223 121h2M227 121h1M230 121h1M236 121h1M238 121h1M243 121h1M252 121h2M256 121h2M259 121h1M262 121h2M266 121h2M269 121h1M271 121h1M276 121h1M278 121h3M5 122h2M8 122h1M14 122h1M18 122h3M26 122h2M29 122h1M31 122h2M35 122h1M37 122h3M43 122h1M46 122h1M48 122h1M50 122h1M52 122h1M60 122h2M63 122h3M67 122h1M69 122h1M71 122h1M76 122h1M79 122h2M82 122h1M87 122h1M89 122h1M93 122h1M96 122h1M98 122h2M104 122h1M106 122h2M109 122h1M115 122h4M120 122h1M122 122h2M126 122h1M133 122h1M137 122h1M149 122h1M152 122h4M165 122h1M170 122h1M174 122h2M178 122h2M182 122h1M184 122h3M188 122h1M190 122h1M192 122h1M196 122h1M198 122h4M211 122h1M213 122h1M216 122h1M218 122h1M222 122h2M225 122h1M227 122h3M239 122h1M241 122h1M245 122h1M251 122h1M255 122h2M259 122h2M262 122h2M268 122h1M272 122h1M274 122h3M282 122h1M5 123h1M7 123h1M10 123h6M20 123h1M22 123h1M26 123h1M28 123h2M33 123h3M37 123h2M41 123h1M45 123h2M48 123h1M50 123h1M54 123h1M61 123h2M64 123h3M68 123h1M71 123h1M76 123h3M80 123h1M83 123h1M88 123h1M90 123h5M96 123h1M99 123h2M104 123h1M106 123h1M110 123h1M113 123h1M115 123h2M118 123h1M125 123h2M128 123h1M131 123h1M133 123h1M136 123h1M138 123h1M150 123h1M162 123h1M164 123h1M170 123h2M175 123h1M177 123h1M179 123h1M183 123h1M185 123h1M193 123h2M196 123h1M202 123h2M211 123h1M219 123h1M223 123h1M227 123h1M234 123h1M236 123h1M238 123h1M243 123h3M249 123h3M254 123h1M257 123h1M261 123h2M266 123h2M269 123h2M272 123h1M281 123h1M6 124h1M8 124h1M11 124h1M15 124h1M17 124h2M21 124h2M25 124h1M28 124h2M31 124h4M40 124h3M46 124h1M56 124h3M60 124h2M63 124h1M65 124h2M69 124h1M74 124h3M79 124h2M82 124h1M84 124h2M88 124h1M90 124h1M93 124h2M97 124h1M99 124h1M106 124h1M108 124h1M111 124h1M113 124h4M119 124h1M121 124h2M125 124h1M127 124h2M131 124h1M135 124h1M137 124h3M148 124h1M150 124h2M154 124h2M157 124h1M168 124h1M171 124h2M198 124h1M205 124h1M207 124h1M210 124h1M212 124h1M216 124h1M218 124h1M223 124h2M229 124h1M236 124h2M241 124h1M250 124h1M254 124h2M257 124h1M263 124h1M265 124h1M267 124h1M271 124h1M273 124h1M276 124h2M5 125h1M8 125h2M11 125h1M15 125h1M18 125h3M24 125h4M29 125h1M32 125h5M45 125h1M47 125h1M49 125h3M56 125h1M58 125h2M61 125h3M65 125h1M67 125h3M71 125h2M79 125h2M84 125h1M87 125h1M89 125h1M93 125h1M95 125h2M98 125h4M103 125h1M106 125h1M109 125h1M112 125h2M119 125h1M121 125h1M126 125h1M128 125h1M131 125h5M149 125h1M152 125h1M156 125h2M161 125h1M164 125h1M177 125h1M191 125h1M195 125h2M200 125h2M210 125h1M217 125h1M225 125h1M228 125h1M230 125h1M242 125h1M246 125h1M250 125h1M259 125h1M261 125h1M263 125h2M266 125h1M269 125h1M271 125h1M273 125h1M280 125h1M10 126h1M13 126h1M15 126h2M19 126h1M22 126h1M24 126h2M27 126h1M30 126h4M35 126h1M37 126h1M40 126h1M42 126h1M44 126h5M60 126h1M63 126h2M67 126h1M73 126h1M76 126h2M82 126h1M84 126h1M86 126h2M93 126h5M100 126h1M102 126h1M106 126h3M110 126h2M115 126h1M118 126h1M121 126h1M123 126h2M127 126h1M129 126h6M136 126h1M148 126h1M170 126h1M189 126h1M207 126h1M210 126h4M221 126h1M227 126h1M253 126h2M256 126h1M267 126h1M277 126h1M12 127h1M14 127h1M16 127h1M18 127h4M24 127h2M35 127h1M38 127h2M41 127h1M43 127h1M48 127h2M52 127h5M63 127h1M65 127h1M69 127h6M76 127h1M80 127h2M92 127h2M95 127h1M98 127h2M101 127h1M103 127h1M109 127h2M114 127h1M121 127h1M123 127h1M125 127h1M131 127h3M135 127h4M151 127h1M161 127h1M166 127h1M173 127h2M179 127h1M184 127h1M196 127h1M203 127h1M205 127h1M209 127h1M226 127h1M230 127h1M237 127h2M240 127h1M251 127h1M254 127h1M273 127h1M275 127h3M280 127h1M6 128h1M8 128h1M12 128h1M14 128h1M17 128h4M26 128h3M35 128h1M37 128h1M40 128h1M43 128h1M47 128h1M58 128h2M61 128h1M63 128h1M65 128h1M70 128h2M77 128h1M79 128h1M82 128h1M84 128h1M86 128h2M90 128h1M93 128h4M98 128h1M100 128h1M105 128h1M112 128h1M115 128h1M120 128h2M124 128h1M127 128h2M131 128h2M136 128h3M154 128h1M157 128h1M166 128h1M179 128h1M204 128h1M208 128h1M215 128h1M221 128h2M230 128h1M246 128h1M258 128h1M271 128h2M277 128h1M281 128h1M6 129h1M13 129h2M20 129h1M23 129h2M26 129h3M30 129h3M36 129h1M38 129h2M41 129h1M45 129h1M48 129h1M50 129h1M55 129h1M58 129h1M60 129h1M64 129h1M66 129h1M68 129h1M71 129h1M76 129h2M79 129h3M86 129h1M89 129h1M92 129h1M95 129h1M104 129h1M107 129h2M111 129h1M113 129h1M117 129h1M122 129h1M126 129h1M132 129h2M135 129h1M137 129h1M153 129h1M158 129h1M192 129h2M196 129h2M206 129h1M217 129h1M221 129h1M252 129h1M268 129h1M270 129h1M274 129h2M6 130h1M11 130h2M16 130h1M38 130h1M41 130h2M49 130h1M51 130h1M53 130h1M61 130h1M63 130h1M66 130h1M73 130h4M82 130h1M84 130h1M93 130h4M98 130h1M104 130h2M107 130h1M112 130h2M115 130h2M119 130h1M121 130h1M123 130h1M129 130h3M134 130h1M137 130h2M234 130h1M236 130h1M239 130h1M259 130h1M269 130h1M10 131h1M13 131h1M15 131h2M23 131h1M27 131h1M34 131h1M38 131h2M41 131h1M45 131h1M49 131h1M61 131h1M63 131h2M71 131h1M73 131h1M75 131h3M79 131h1M82 131h2M91 131h1M100 131h2M106 131h2M109 131h1M111 131h3M116 131h1M118 131h1M121 131h1M123 131h1M128 131h2M131 131h1M136 131h1M155 131h1M162 131h1M184 131h1M193 131h1M226 131h1M237 131h1M246 131h1M257 131h1M269 131h1M10 132h2M16 132h1M19 132h1M30 132h1M39 132h1M44 132h1M49 132h1M63 132h1M67 132h1M70 132h1M76 132h1M78 132h1M87 132h1M89 132h1M92 132h1M97 132h1M99 132h2M104 132h1M106 132h1M127 132h1M137 132h1M173 132h1M204 132h1M261 132h1M6 133h1M9 133h1M12 133h1M22 133h1M25 133h2M31 133h1M46 133h1M48 133h1M50 133h1M53 133h2M57 133h1M60 133h1M62 133h2M66 133h1M71 133h1M76 133h1M78 133h1M83 133h1M85 133h2M88 133h1M91 133h1M97 133h1M101 133h1M104 133h1M109 133h2M112 133h3M121 133h1M125 133h1M153 133h1M160 133h1M164 133h1M198 133h1M233 133h1M236 133h1M257 133h1M34 134h1M53 134h1M58 134h1M64 134h1M66 134h1M68 134h1M75 134h1M86 134h5M92 134h2M117 134h1M121 134h1M129 134h3M136 134h1M20 135h1M25 135h2M34 135h1M43 135h1M46 135h1M51 135h1M54 135h1M65 135h1M71 135h1M81 135h1M83 135h1M90 135h1M97 135h2M101 135h1M128 135h2M132 135h1M149 135h1M161 135h1M19 136h1M38 136h1M42 136h1M49 136h1M51 136h1M57 136h2M78 136h1M84 136h1M99 136h2M122 136h1M124 136h1M135 136h1M137 136h1M154 136h1M169 136h1M12 137h1M35 137h1M51 137h1M112 137h1M123 137h1M132 137h1M136 137h1M18 138h1M39 138h1M44 138h1M63 138h1M75 138h1M86 138h1M98 138h1M115 138h1M121 138h1M220 138h1M53 139h1M62 139h1M89 139h1M109 139h3" stroke="#0a6e0a" stroke-width="1" fill="none" transform="translate(0,0.5)"/><path d="M139 29h1M78 59h1M3 60h1M3 78h1M193 79h1M279 79h1M52 81h1M229 81h1M170 86h1M230 87h1M177 89h1M224 90h1M259 90h1M273 90h1M53 92h1M210 92h1M234 92h1M236 92h1M260 92h1M281 92h1M166 93h1M178 93h1M183 93h1M220 93h1M245 93h1M41 94h1M192 94h1M260 94h1M275 94h1M78 95h1M149 95h1M203 95h1M218 95h2M236 95h1M244 95h1M253 95h1M262 95h3M17 96h1M158 96h1M165 96h1M171 96h1M173 96h1M178 96h1M187 96h1M194 96h1M218 96h1M269 96h1M280 96h2M107 97h1M149 97h1M164 97h1M169 97h1M195 97h1M208 97h1M210 97h1M220 97h1M231 97h1M246 97h3M257 97h1M260 97h1M282 97h1M126 98h1M140 98h1M169 98h1M173 98h1M175 98h1M181 98h1M183 98h1M186 98h1M198 98h1M202 98h1M230 98h2M244 98h1M259 98h1M265 98h1M273 98h1M276 98h2M8 99h2M54 99h1M95 99h1M148 99h1M152 99h1M156 99h1M160 99h1M164 99h1M168 99h4M185 99h1M188 99h1M205 99h1M218 99h1M221 99h1M225 99h1M234 99h1M236 99h1M242 99h1M246 99h1M259 99h1M279 99h1M281 99h1M57 100h1M87 100h1M107 100h1M132 100h1M148 100h3M162 100h1M165 100h1M169 100h1M194 100h1M199 100h1M204 100h1M206 100h1M208 100h2M219 100h1M223 100h1M225 100h1M228 100h1M230 100h1M238 100h1M261 100h1M275 100h1M279 100h1M282 100h1M8 101h1M22 101h1M28 101h1M43 101h1M70 101h1M74 101h1M150 101h1M152 101h1M161 101h1M193 101h1M198 101h1M200 101h1M202 101h2M206 101h2M213 101h1M218 101h1M220 101h1M223 101h1M230 101h1M238 101h2M241 101h1M243 101h1M254 101h1M256 101h1M260 101h1M262 101h2M268 101h1M270 101h1M279 101h1M23 102h1M33 102h1M35 102h1M57 102h1M71 102h1M96 102h1M99 102h1M103 102h1M105 102h1M130 102h1M137 102h1M148 102h1M152 102h1M157 102h2M169 102h1M173 102h1M175 102h1M178 102h1M180 102h1M183 102h1M186 102h1M196 102h1M202 102h1M211 102h1M216 102h1M218 102h1M221 102h1M223 102h1M226 102h2M232 102h1M239 102h1M242 102h1M244 102h1M248 102h1M252 102h1M264 102h1M268 102h1M273 102h2M281 102h1M5 103h1M11 103h1M33 103h1M41 103h1M66 103h1M70 103h1M74 103h1M91 103h1M98 103h1M110 103h1M120 103h1M151 103h1M154 103h1M156 103h2M164 103h1M169 103h3M173 103h2M176 103h2M180 103h1M182 103h1M187 103h1M194 103h1M197 103h1M200 103h1M206 103h1M210 103h1M213 103h1M220 103h1M222 103h2M229 103h3M236 103h1M240 103h1M242 103h1M244 103h1M246 103h1M248 103h1M251 103h2M254 103h1M257 103h2M260 103h1M262 103h1M264 103h3M269 103h1M272 103h3M276 103h1M8 104h1M12 104h1M21 104h2M26 104h2M44 104h1M67 104h1M83 104h1M110 104h1M117 104h1M134 104h1M147 104h4M152 104h1M154 104h3M159 104h1M161 104h3M166 104h1M171 104h3M176 104h1M179 104h2M184 104h1M188 104h2M191 104h1M194 104h2M197 104h1M200 104h2M204 104h2M208 104h2M220 104h2M223 104h2M226 104h1M234 104h2M238 104h1M242 104h2M245 104h2M249 104h1M252 104h1M255 104h1M259 104h1M263 104h1M267 104h2M271 104h1M273 104h1M281 104h1M8 105h1M18 105h1M32 105h1M39 105h1M43 105h1M52 105h3M59 105h1M75 105h1M82 105h1M89 105h1M100 105h1M116 105h1M119 105h1M134 105h1M139 105h1M148 105h1M150 105h2M154 105h1M156 105h3M162 105h1M164 105h4M174 105h2M177 105h3M183 105h6M191 105h1M194 105h3M198 105h3M202 105h2M209 105h1M219 105h1M222 105h2M228 105h3M233 105h1M237 105h4M242 105h1M244 105h2M247 105h2M253 105h2M259 105h1M261 105h1M264 105h1M270 105h1M272 105h1M276 105h1M278 105h1M7 106h1M11 106h1M13 106h1M16 106h1M24 106h1M27 106h1M32 106h1M40 106h1M48 106h1M52 106h1M65 106h1M74 106h1M80 106h1M82 106h2M111 106h1M118 106h1M122 106h2M133 106h1M135 106h1M148 106h5M155 106h1M158 106h2M161 106h1M163 106h1M167 106h2M176 106h2M179 106h3M188 106h2M195 106h4M200 106h2M203 106h1M206 106h2M209 106h4M215 106h1M217 106h2M220 106h1M222 106h2M227 106h2M230 106h2M235 106h2M239 106h1M243 106h3M247 106h4M253 106h4M259 106h1M261 106h2M265 106h2M268 106h1M275 106h1M18 107h2M23 107h1M25 107h1M33 107h1M37 107h1M44 107h1M48 107h1M55 107h1M62 107h1M72 107h1M76 107h1M78 107h1M91 107h2M101 107h1M110 107h1M114 107h2M117 107h2M126 107h1M129 107h1M147 107h2M151 107h1M153 107h1M155 107h1M157 107h1M159 107h1M164 107h1M168 107h1M171 107h3M175 107h1M177 107h1M179 107h1M181 107h2M186 107h1M188 107h2M192 107h1M195 107h4M200 107h1M205 107h1M207 107h1M210 107h2M219 107h1M222 107h2M225 107h1M227 107h8M237 107h1M242 107h1M245 107h2M250 107h1M253 107h2M258 107h2M264 107h3M269 107h2M272 107h3M276 107h2M280 107h1M282 107h1M9 108h1M14 108h1M17 108h1M19 108h1M23 108h2M26 108h1M35 108h1M37 108h1M41 108h1M43 108h1M47 108h1M49 108h1M58 108h2M61 108h1M65 108h1M67 108h1M71 108h2M75 108h1M80 108h1M91 108h1M96 108h1M98 108h2M102 108h1M104 108h1M106 108h1M112 108h1M118 108h2M122 108h1M125 108h1M132 108h1M135 108h1M139 108h1M148 108h1M150 108h1M154 108h1M159 108h4M165 108h2M169 108h1M173 108h1M175 108h3M179 108h3M183 108h2M186 108h5M192 108h2M195 108h1M197 108h1M201 108h1M205 108h2M216 108h4M224 108h1M227 108h3M233 108h1M237 108h1M241 108h5M250 108h2M255 108h1M257 108h1M259 108h4M264 108h2M267 108h2M273 108h1M276 108h7M5 109h1M7 109h1M9 109h4M20 109h1M26 109h3M35 109h2M38 109h1M42 109h1M50 109h2M53 109h4M60 109h3M66 109h1M73 109h2M81 109h1M85 109h1M87 109h2M100 109h3M106 109h1M112 109h1M116 109h1M118 109h1M150 109h4M158 109h1M163 109h2M166 109h2M171 109h1M177 109h1M179 109h1M181 109h1M183 109h1M187 109h2M192 109h1M194 109h1M196 109h3M201 109h1M203 109h1M205 109h1M207 109h3M211 109h2M214 109h1M216 109h3M222 109h1M224 109h2M228 109h3M234 109h1M237 109h3M242 109h2M245 109h2M250 109h1M252 109h2M256 109h1M258 109h2M264 109h3M268 109h2M272 109h6M279 109h2M10 110h1M13 110h1M24 110h1M26 110h2M29 110h1M31 110h1M33 110h3M37 110h2M42 110h1M44 110h1M48 110h2M51 110h1M58 110h1M63 110h2M68 110h1M70 110h2M77 110h1M80 110h1M90 110h1M95 110h1M98 110h1M105 110h1M107 110h1M111 110h1M114 110h4M119 110h1M121 110h1M127 110h1M131 110h1M147 110h1M150 110h1M152 110h1M155 110h1M158 110h1M165 110h1M168 110h4M175 110h2M178 110h1M180 110h1M187 110h4M193 110h1M195 110h1M197 110h1M200 110h5M206 110h1M210 110h1M212 110h1M218 110h3M223 110h3M230 110h1M236 110h2M244 110h3M248 110h1M250 110h1M252 110h1M257 110h4M262 110h1M264 110h2M267 110h1M275 110h3M12 111h4M17 111h1M19 111h3M23 111h4M29 111h1M32 111h4M37 111h1M41 111h1M43 111h1M46 111h3M53 111h2M57 111h2M62 111h3M66 111h2M72 111h1M74 111h1M76 111h3M85 111h1M88 111h1M90 111h1M92 111h1M99 111h1M105 111h2M109 111h1M111 111h1M113 111h2M116 111h1M121 111h1M123 111h1M126 111h1M128 111h1M134 111h1M136 111h3M152 111h1M155 111h3M159 111h1M165 111h4M171 111h1M173 111h1M175 111h1M177 111h2M181 111h1M183 111h2M187 111h2M191 111h1M193 111h2M197 111h1M199 111h2M202 111h3M206 111h2M209 111h1M213 111h1M216 111h4M221 111h1M223 111h6M230 111h1M232 111h3M236 111h2M239 111h1M247 111h2M250 111h1M252 111h5M259 111h4M264 111h1M266 111h2M269 111h1M273 111h3M277 111h3M282 111h1M5 112h1M8 112h4M14 112h1M17 112h1M19 112h1M22 112h5M30 112h1M32 112h3M37 112h2M41 112h1M43 112h2M48 112h1M51 112h1M53 112h4M59 112h2M62 112h1M64 112h1M66 112h2M74 112h1M76 112h1M79 112h1M81 112h1M86 112h1M88 112h1M91 112h2M97 112h1M101 112h2M107 112h1M109 112h4M114 112h1M118 112h1M120 112h1M124 112h1M127 112h1M131 112h1M149 112h1M151 112h1M155 112h1M160 112h1M165 112h3M170 112h1M172 112h2M175 112h1M177 112h1M179 112h1M181 112h1M184 112h1M187 112h2M190 112h2M193 112h3M199 112h3M203 112h1M206 112h1M209 112h1M211 112h3M218 112h3M222 112h1M224 112h1M226 112h2M231 112h2M236 112h1M240 112h1M245 112h3M250 112h1M252 112h1M254 112h2M259 112h2M263 112h6M271 112h2M274 112h3M278 112h1M282 112h1M7 113h1M9 113h2M12 113h2M15 113h2M21 113h2M25 113h4M31 113h2M39 113h1M42 113h2M45 113h3M49 113h1M52 113h1M54 113h1M58 113h1M65 113h3M72 113h3M76 113h4M82 113h1M85 113h1M88 113h1M93 113h1M99 113h2M102 113h3M108 113h1M111 113h1M124 113h1M129 113h1M136 113h2M150 113h4M160 113h1M164 113h1M166 113h1M169 113h4M174 113h1M179 113h1M185 113h1M187 113h1M190 113h4M195 113h3M199 113h2M202 113h2M205 113h2M209 113h1M212 113h4M217 113h1M220 113h2M223 113h4M229 113h1M231 113h1M233 113h6M243 113h3M247 113h1M250 113h2M253 113h1M255 113h4M263 113h2M266 113h1M272 113h2M6 114h1M9 114h3M13 114h4M19 114h2M22 114h2M25 114h1M28 114h2M31 114h1M33 114h2M41 114h1M47 114h1M50 114h2M55 114h1M57 114h1M60 114h6M71 114h1M75 114h5M81 114h1M84 114h1M88 114h3M94 114h1M96 114h1M109 114h1M111 114h1M113 114h1M116 114h2M120 114h1M124 114h3M129 114h1M131 114h1M134 114h1M136 114h1M138 114h1M148 114h2M151 114h2M155 114h3M159 114h1M162 114h2M165 114h1M169 114h4M174 114h4M183 114h1M187 114h1M189 114h7M197 114h2M208 114h1M214 114h2M218 114h3M226 114h1M228 114h3M232 114h1M234 114h1M236 114h1M240 114h2M243 114h3M247 114h1M251 114h3M255 114h6M262 114h2M265 114h1M267 114h1M269 114h1M276 114h1M281 114h1M9 115h1M17 115h2M21 115h2M31 115h1M34 115h1M41 115h1M46 115h1M52 115h1M54 115h1M56 115h1M58 115h1M61 115h1M63 115h2M66 115h2M71 115h1M73 115h2M77 115h3M82 115h3M87 115h4M93 115h1M96 115h1M98 115h1M101 115h1M104 115h1M106 115h1M108 115h1M110 115h1M113 115h1M115 115h1M117 115h1M119 115h1M121 115h1M123 115h1M125 115h1M130 115h2M133 115h1M135 115h1M138 115h1M147 115h1M150 115h1M153 115h1M157 115h2M160 115h1M162 115h2M167 115h1M170 115h3M175 115h2M180 115h2M184 115h3M189 115h1M192 115h2M196 115h1M198 115h1M201 115h2M204 115h2M207 115h1M213 115h1M216 115h1M219 115h4M224 115h1M226 115h2M229 115h1M231 115h2M241 115h1M243 115h1M245 115h1M247 115h1M250 115h2M254 115h3M258 115h6M265 115h3M270 115h1M273 115h1M275 115h3M280 115h1M282 115h1M5 116h3M12 116h1M15 116h1M20 116h1M23 116h1M27 116h2M30 116h1M34 116h1M38 116h3M42 116h1M46 116h2M50 116h4M57 116h4M62 116h1M64 116h1M69 116h1M72 116h1M74 116h1M78 116h1M81 116h1M83 116h2M86 116h10M97 116h2M100 116h2M104 116h1M106 116h1M109 116h1M113 116h2M119 116h1M121 116h1M126 116h2M129 116h1M131 116h1M133 116h2M137 116h1M149 116h3M155 116h1M160 116h2M163 116h1M166 116h1M168 116h1M170 116h1M177 116h2M182 116h2M186 116h2M189 116h8M200 116h1M203 116h1M205 116h1M208 116h3M212 116h2M215 116h1M217 116h4M223 116h1M225 116h1M229 116h2M233 116h1M235 116h1M239 116h2M242 116h3M246 116h2M250 116h1M255 116h2M258 116h1M261 116h1M263 116h2M267 116h1M269 116h1M273 116h1M275 116h1M281 116h1M6 117h2M10 117h2M13 117h1M17 117h4M22 117h1M24 117h1M26 117h1M30 117h1M32 117h5M40 117h3M45 117h2M48 117h1M51 117h3M55 117h2M59 117h1M62 117h5M73 117h2M76 117h1M81 117h1M84 117h1M88 117h2M91 117h1M93 117h1M96 117h4M101 117h3M105 117h2M111 117h2M117 117h2M120 117h4M127 117h3M131 117h2M151 117h1M156 117h3M161 117h1M167 117h1M175 117h3M181 117h1M189 117h1M191 117h1M194 117h1M197 117h2M201 117h1M203 117h2M208 117h2M212 117h1M214 117h2M219 117h1M222 117h2M226 117h1M230 117h2M235 117h1M237 117h1M239 117h1M241 117h2M253 117h1M256 117h1M258 117h2M262 117h2M267 117h1M271 117h3M277 117h1M279 117h2M6 118h1M8 118h1M11 118h1M15 118h1M18 118h2M21 118h1M23 118h1M33 118h1M35 118h2M40 118h1M44 118h1M46 118h2M50 118h1M52 118h1M58 118h2M65 118h2M70 118h1M73 118h2M76 118h2M79 118h1M81 118h1M84 118h1M90 118h1M94 118h2M97 118h4M102 118h1M106 118h1M108 118h1M110 118h3M115 118h3M125 118h4M132 118h1M134 118h4M147 118h2M156 118h2M160 118h1M163 118h1M170 118h1M172 118h1M178 118h1M184 118h1M186 118h1M189 118h2M205 118h1M215 118h1M219 118h3M223 118h1M225 118h2M228 118h7M236 118h1M238 118h2M242 118h1M250 118h3M257 118h2M260 118h1M266 118h2M273 118h1M275 118h1M6 119h4M11 119h1M15 119h2M19 119h2M22 119h2M25 119h2M28 119h2M32 119h1M36 119h2M40 119h1M42 119h1M44 119h1M49 119h1M51 119h1M53 119h3M57 119h2M66 119h1M68 119h1M75 119h2M78 119h1M80 119h1M82 119h3M86 119h1M88 119h1M90 119h1M96 119h1M99 119h1M101 119h2M107 119h1M109 119h1M112 119h1M114 119h1M118 119h3M127 119h2M132 119h1M134 119h2M137 119h2M152 119h1M155 119h2M158 119h1M162 119h1M164 119h1M169 119h1M171 119h1M173 119h2M180 119h2M185 119h1M191 119h1M194 119h1M206 119h2M209 119h1M211 119h3M215 119h1M223 119h2M226 119h3M231 119h2M236 119h1M243 119h2M248 119h1M251 119h2M254 119h1M258 119h1M260 119h1M263 119h1M267 119h1M274 119h1M276 119h1M281 119h1M7 120h1M12 120h1M14 120h5M20 120h3M27 120h1M32 120h1M34 120h1M36 120h1M38 120h2M42 120h1M46 120h5M54 120h2M58 120h3M64 120h2M68 120h4M73 120h1M76 120h1M78 120h1M80 120h1M82 120h3M90 120h1M92 120h2M100 120h1M104 120h1M108 120h1M110 120h2M114 120h1M117 120h1M121 120h3M126 120h1M132 120h1M135 120h2M149 120h2M153 120h1M156 120h1M158 120h1M164 120h1M167 120h1M171 120h1M179 120h1M187 120h2M193 120h1M200 120h1M202 120h1M217 120h1M219 120h1M222 120h1M229 120h1M232 120h1M235 120h1M251 120h1M260 120h1M268 120h1M274 120h1M276 120h1M280 120h1M6 121h1M8 121h3M12 121h1M14 121h1M16 121h1M20 121h1M24 121h1M27 121h1M31 121h1M33 121h1M41 121h1M43 121h1M45 121h3M51 121h2M54 121h3M58 121h2M63 121h1M65 121h2M68 121h1M70 121h2M79 121h1M82 121h1M85 121h4M90 121h1M93 121h3M102 121h1M104 121h3M108 121h1M110 121h1M112 121h1M114 121h1M117 121h2M120 121h2M124 121h1M126 121h2M129 121h1M131 121h4M137 121h1M151 121h1M199 121h1M206 121h1M210 121h1M212 121h1M225 121h1M229 121h1M232 121h1M234 121h1M240 121h1M258 121h1M260 121h2M272 121h1M277 121h1M9 122h5M15 122h3M24 122h1M28 122h1M30 122h1M33 122h2M36 122h1M40 122h3M44 122h2M47 122h1M49 122h1M55 122h4M66 122h1M68 122h1M72 122h1M74 122h1M81 122h1M83 122h1M85 122h1M90 122h3M94 122h2M100 122h4M108 122h1M110 122h1M112 122h3M119 122h1M121 122h1M124 122h2M128 122h2M131 122h2M134 122h3M148 122h1M150 122h1M159 122h1M164 122h1M169 122h1M189 122h1M193 122h1M217 122h1M220 122h2M243 122h1M277 122h1M6 123h1M8 123h2M16 123h1M18 123h2M21 123h1M23 123h1M27 123h1M30 123h1M39 123h1M43 123h2M51 123h3M57 123h3M67 123h1M70 123h1M72 123h2M75 123h1M82 123h1M84 123h1M86 123h1M89 123h1M98 123h1M101 123h3M105 123h1M107 123h3M111 123h2M114 123h1M117 123h1M119 123h6M129 123h2M132 123h1M134 123h2M137 123h1M139 123h1M167 123h1M169 123h1M186 123h1M208 123h1M221 123h1M235 123h1M246 123h1M264 123h1M274 123h1M5 124h1M7 124h1M9 124h2M12 124h2M19 124h1M24 124h1M26 124h2M30 124h1M37 124h1M39 124h1M44 124h1M48 124h6M55 124h1M64 124h1M68 124h1M70 124h2M73 124h1M77 124h2M83 124h1M86 124h1M89 124h1M91 124h1M96 124h1M98 124h1M101 124h3M105 124h1M107 124h1M109 124h1M112 124h1M117 124h2M124 124h1M130 124h1M133 124h1M173 124h1M181 124h1M195 124h1M209 124h1M235 124h1M268 124h2M10 125h1M13 125h1M16 125h1M22 125h2M28 125h1M37 125h4M42 125h2M48 125h1M53 125h2M57 125h1M66 125h1M73 125h1M86 125h1M88 125h1M94 125h1M102 125h1M104 125h1M110 125h2M115 125h2M118 125h1M124 125h2M130 125h1M136 125h3M181 125h1M185 125h1M198 125h1M12 126h1M18 126h1M26 126h1M28 126h1M43 126h1M49 126h3M56 126h1M58 126h1M62 126h1M70 126h2M74 126h1M78 126h1M80 126h2M83 126h1M85 126h1M90 126h1M92 126h1M98 126h1M101 126h1M103 126h3M112 126h1M114 126h1M116 126h1M125 126h1M128 126h1M135 126h1M169 126h1M217 126h1M232 126h1M275 126h1M7 127h1M13 127h1M15 127h1M17 127h1M31 127h2M66 127h3M78 127h1M83 127h1M86 127h1M90 127h2M100 127h1M105 127h1M115 127h2M122 127h1M126 127h2M134 127h1M232 127h1M257 127h1M10 128h1M21 128h2M24 128h2M31 128h1M33 128h1M38 128h1M41 128h1M50 128h1M67 128h1M80 128h1M99 128h1M101 128h2M108 128h1M114 128h1M117 128h1M130 128h1M150 128h1M162 128h1M270 128h1M12 129h1M33 129h1M42 129h1M75 129h1M82 129h1M84 129h1M91 129h1M96 129h1M100 129h1M110 129h1M114 129h1M121 129h1M127 129h1M134 129h1M136 129h1M62 130h1M65 130h1M78 130h1M85 130h1M88 130h1M91 130h1M100 130h1M12 131h1M25 131h1M36 131h1M42 131h1M46 131h1M95 131h1M108 131h1M79 132h1M82 132h1M101 132h1M103 132h1M105 132h1M51 133h1M73 137h1" stroke="#00ff00" stroke-width="1" fill="none" transform="translate(0,0.5)"/></svg>
<div class="w t or" style="left:1159px;top:102px;width:144px;height:40px;line-height:37px;letter-spacing:-0.06px;">SW Status : N/A</div>
<div class="w t or" style="left:1159px;top:142px;width:144px;height:40px;line-height:37px;letter-spacing:-0.12px;">DE mode : N/A</div>
<div class="w t rd" style="left:1159px;top:182px;width:144px;height:40px;line-height:37px;letter-spacing:0.28px;">ping : 60</div>
<div class="w g" style="left:1159px;top:228px;width:144px;height:49px;line-height:46px;">Ct : 231</div>
<div class="w g" style="left:1159px;top:277px;width:144px;height:49px;line-height:46px;">Ct/s : 14</div>
<div class="w o" style="left:1159px;top:332px;width:144px;height:49px;line-height:46px;letter-spacing:0.3px;"># of det. strips</div>
<div class="w o" style="left:1159px;top:381px;width:72px;height:48px;line-height:45px;">Al : 0</div>
<div class="w o" style="left:1231px;top:381px;width:72px;height:48px;line-height:45px;">Pt : 0</div>
<div class="w b" style="left:1159px;top:435px;width:144px;height:49px;line-height:46px;letter-spacing:0.23px;"># of rest evt. frame</div>
<div class="w b" style="left:1159px;top:484px;width:72px;height:48px;line-height:45px;letter-spacing:0.16px;">t : 0</div>
<div class="w b" style="left:1231px;top:484px;width:72px;height:48px;line-height:45px;letter-spacing:0.11px;">t-1 : 0</div>
<div class="wh" style="left:1308px;top:102px;width:430px;height:430px"></div>
<div class="p " style="left:1309px;top:103px;width:285px;height:286px;"></div>
<div class="abs" style="left:1354px;top:384px;width:1px;height:4px;background:#98a1b0"></div>
<div class="abs" style="left:1399px;top:384px;width:1px;height:4px;background:#98a1b0"></div>
<div class="abs" style="left:1443px;top:384px;width:1px;height:4px;background:#98a1b0"></div>
<div class="abs" style="left:1487px;top:384px;width:1px;height:4px;background:#98a1b0"></div>
<div class="abs" style="left:1532px;top:384px;width:1px;height:4px;background:#98a1b0"></div>
<div class="abs" style="left:1576px;top:384px;width:1px;height:4px;background:#98a1b0"></div>
<div class="abs" style="left:1310px;top:120px;width:3px;height:1px;background:#98a1b0"></div>
<div class="abs" style="left:1310px;top:165px;width:3px;height:1px;background:#98a1b0"></div>
<div class="abs" style="left:1310px;top:210px;width:3px;height:1px;background:#98a1b0"></div>
<div class="abs" style="left:1310px;top:255px;width:3px;height:1px;background:#98a1b0"></div>
<div class="abs" style="left:1310px;top:300px;width:3px;height:1px;background:#98a1b0"></div>
<div class="abs" style="left:1310px;top:345px;width:3px;height:1px;background:#98a1b0"></div>
<div class="lb" style="left:1313px;top:372px">cdte4_pc.log</div>
<div class="abs" style="left:1331px;top:241px;width:2px;height:2px;background:#00c000"></div>
<div class="abs" style="left:1572px;top:241px;width:2px;height:2px;background:#00e000"></div>
<div class="abs" style="left:1577px;top:241px;width:2px;height:2px;background:#00ff00"></div>
<div class="p " style="left:1309px;top:390px;width:284px;height:142px;"></div>
<div class="ax" style="left:1379px;top:520px;width:140px;text-align:center">Strips [Pt:0-127, Al:127-255]</div>
<div class="ax" style="left:1314px;top:461px;width:0;height:0;font-size:10.5px"><div style="position:absolute;left:0;top:0;transform:translate(-50%,-50%) rotate(-90deg);white-space:pre;line-height:12px">ADC/Energy</div></div>
<svg style="left:1309px;top:390px" width="284" height="142" shape-rendering="crispEdges"><path d="M139 9h1M140 13h1M73 18h1M77 18h1M76 19h1M138 21h1M139 29h1M140 33h1M2 35h1M75 35h1M4 40h1M281 41h1M3 43h1M71 46h1M139 47h1M280 49h1M3 50h1M79 50h1M139 51h1M139 53h1M2 54h1M2 57h1M281 57h1M138 62h1M72 65h1M75 67h1M184 70h1M281 70h1M224 71h1M140 73h1M247 73h1M33 74h1M140 74h1M83 77h1M280 77h2M81 79h1M109 79h1M239 79h1M281 79h1M131 80h1M154 80h1M80 81h1M139 81h1M273 81h1M239 82h1M256 82h1M12 83h1M51 83h1M78 83h1M108 83h1M170 83h1M268 83h1M25 84h1M77 84h1M250 84h1M24 85h1M63 85h1M73 85h1M122 85h1M169 85h1M240 85h1M17 86h1M37 86h1M44 86h1M47 86h1M51 86h1M139 86h1M204 86h1M35 87h1M50 87h1M64 87h1M66 87h1M74 87h1M131 87h1M154 87h1M185 87h1M203 87h1M237 87h1M246 87h1M21 88h1M70 88h1M95 88h1M137 88h1M170 88h1M183 88h1M197 88h1M211 88h1M252 88h1M119 89h1M167 89h1M197 89h1M227 89h1M237 89h1M246 89h1M248 89h1M252 89h1M270 89h2M277 89h1M11 90h1M42 90h1M54 90h1M65 90h1M125 90h1M224 90h1M232 90h1M252 90h1M273 90h1M9 91h2M37 91h1M53 91h1M58 91h1M60 91h1M68 91h1M70 91h1M85 91h1M87 91h1M122 91h1M137 91h1M157 91h1M168 91h1M181 91h1M236 91h1M245 91h1M252 91h1M274 91h1M19 92h1M31 92h1M39 92h1M53 92h1M63 92h1M96 92h1M107 92h1M109 92h1M111 92h2M116 92h1M129 92h1M133 92h1M157 92h2M169 92h1M176 92h1M180 92h1M183 92h1M195 92h1M217 92h2M226 92h1M230 92h1M236 92h1M238 92h1M240 92h1M242 92h1M254 92h1M262 92h1M265 92h1M18 93h1M21 93h1M39 93h1M60 93h1M70 93h1M81 93h2M88 93h1M101 93h1M104 93h2M108 93h2M118 93h1M135 93h1M139 93h1M177 93h1M200 93h1M211 93h1M223 93h1M231 93h1M233 93h1M244 93h1M259 93h3M265 93h1M272 93h2M7 94h1M17 94h1M26 94h1M28 94h2M33 94h1M39 94h1M46 94h1M50 94h1M53 94h1M60 94h1M66 94h1M68 94h2M74 94h1M117 94h1M123 94h1M139 94h1M158 94h1M165 94h2M170 94h1M192 94h1M203 94h1M212 94h1M216 94h1M236 94h1M242 94h1M256 94h3M260 94h1M278 94h1M19 95h1M42 95h2M50 95h1M52 95h1M63 95h2M75 95h1M77 95h1M81 95h1M83 95h1M85 95h1M87 95h1M118 95h2M137 95h1M163 95h1M170 95h2M176 95h2M184 95h1M186 95h2M189 95h1M195 95h1M199 95h1M206 95h1M212 95h1M219 95h1M232 95h1M238 95h1M247 95h1M251 95h1M253 95h3M262 95h1M264 95h1M267 95h1M271 95h1M275 95h1M277 95h2M11 96h1M22 96h1M24 96h2M32 96h3M43 96h1M54 96h1M57 96h1M60 96h2M64 96h2M67 96h1M76 96h1M78 96h1M80 96h1M82 96h1M88 96h2M94 96h2M97 96h1M108 96h2M124 96h1M129 96h1M138 96h1M152 96h2M163 96h1M188 96h1M190 96h1M195 96h1M200 96h1M204 96h1M209 96h2M222 96h1M230 96h3M238 96h1M241 96h1M243 96h1M252 96h1M258 96h1M260 96h1M272 96h3M276 96h2M279 96h1M281 96h2M7 97h1M16 97h2M21 97h2M35 97h1M41 97h1M43 97h1M47 97h1M54 97h1M71 97h2M81 97h1M86 97h1M89 97h1M92 97h1M98 97h1M100 97h1M103 97h1M108 97h1M111 97h1M113 97h1M119 97h1M121 97h1M124 97h1M127 97h1M134 97h2M138 97h1M140 97h1M148 97h1M152 97h1M154 97h1M156 97h1M160 97h1M162 97h1M167 97h1M170 97h3M174 97h1M187 97h2M196 97h2M201 97h1M207 97h1M209 97h1M212 97h1M215 97h2M218 97h1M220 97h1M222 97h1M228 97h1M233 97h1M236 97h2M250 97h1M255 97h3M259 97h1M263 97h1M271 97h1M24 98h1M28 98h1M33 98h1M44 98h2M50 98h1M55 98h1M58 98h2M64 98h1M68 98h1M77 98h1M79 98h5M93 98h1M96 98h1M105 98h1M107 98h1M109 98h2M114 98h2M119 98h1M123 98h1M126 98h1M128 98h1M154 98h2M164 98h1M167 98h1M178 98h1M180 98h1M183 98h1M189 98h2M192 98h1M200 98h4M207 98h1M220 98h2M230 98h1M233 98h4M240 98h2M248 98h1M251 98h1M258 98h1M264 98h1M267 98h1M272 98h2M279 98h3M7 99h1M9 99h1M15 99h1M20 99h1M26 99h1M30 99h1M32 99h2M44 99h1M55 99h1M57 99h1M60 99h3M66 99h2M69 99h1M73 99h1M75 99h2M78 99h1M84 99h1M87 99h2M99 99h1M101 99h1M103 99h1M106 99h1M112 99h2M120 99h2M127 99h1M131 99h1M137 99h2M150 99h1M153 99h1M156 99h2M161 99h1M166 99h1M169 99h1M173 99h1M188 99h1M190 99h2M193 99h1M196 99h1M198 99h1M200 99h2M208 99h1M215 99h1M219 99h2M222 99h1M225 99h1M227 99h1M233 99h2M237 99h1M241 99h1M246 99h2M250 99h1M252 99h3M259 99h1M263 99h2M267 99h4M274 99h2M277 99h1M279 99h1M281 99h2M8 100h1M10 100h3M14 100h2M21 100h1M23 100h1M28 100h1M30 100h2M35 100h1M38 100h1M44 100h1M47 100h1M49 100h1M59 100h1M61 100h1M63 100h1M66 100h1M83 100h1M87 100h2M90 100h1M92 100h2M95 100h1M97 100h2M101 100h1M108 100h1M112 100h1M115 100h2M121 100h1M127 100h1M133 100h1M149 100h3M155 100h1M162 100h1M164 100h1M167 100h1M169 100h1M173 100h1M180 100h2M183 100h1M189 100h2M192 100h1M196 100h1M199 100h1M209 100h3M215 100h1M217 100h1M220 100h1M225 100h1M228 100h1M230 100h1M239 100h1M245 100h1M251 100h1M255 100h1M260 100h1M263 100h1M267 100h2M271 100h1M274 100h1M277 100h2M281 100h2M18 101h1M22 101h1M24 101h2M28 101h1M33 101h1M35 101h2M41 101h2M45 101h1M48 101h3M54 101h2M63 101h1M67 101h1M74 101h1M78 101h1M81 101h1M84 101h1M90 101h2M93 101h1M103 101h2M107 101h1M110 101h1M112 101h1M116 101h1M120 101h1M122 101h1M124 101h3M130 101h1M133 101h2M137 101h1M149 101h1M151 101h1M153 101h1M158 101h1M173 101h2M176 101h1M181 101h1M194 101h1M198 101h1M202 101h1M204 101h2M208 101h1M210 101h3M226 101h1M231 101h3M239 101h2M244 101h1M248 101h1M251 101h1M253 101h4M259 101h1M261 101h2M266 101h1M272 101h1M277 101h4M8 102h1M12 102h1M22 102h1M24 102h1M27 102h3M31 102h1M33 102h3M41 102h1M44 102h1M49 102h1M51 102h1M53 102h1M55 102h1M57 102h1M59 102h1M61 102h1M63 102h1M69 102h1M74 102h1M78 102h1M80 102h1M83 102h2M86 102h1M88 102h1M96 102h1M101 102h1M104 102h1M106 102h1M108 102h1M113 102h1M115 102h3M119 102h1M123 102h1M128 102h1M137 102h1M150 102h2M153 102h3M158 102h1M163 102h1M165 102h1M170 102h1M172 102h2M176 102h1M179 102h2M182 102h2M188 102h1M191 102h1M194 102h1M197 102h1M202 102h1M207 102h3M211 102h1M215 102h1M218 102h3M223 102h2M229 102h1M235 102h1M237 102h2M242 102h1M246 102h1M248 102h1M251 102h1M254 102h1M257 102h1M261 102h2M267 102h1M269 102h1M271 102h1M275 102h2M278 102h1M280 102h1M7 103h2M10 103h2M16 103h2M20 103h2M26 103h4M31 103h1M35 103h2M40 103h1M42 103h2M45 103h1M49 103h1M56 103h1M60 103h3M68 103h1M73 103h1M75 103h3M81 103h4M87 103h1M90 103h2M95 103h1M103 103h3M108 103h1M110 103h2M113 103h1M116 103h1M118 103h1M120 103h3M124 103h3M129 103h2M135 103h1M151 103h1M156 103h1M161 103h1M164 103h1M167 103h1M169 103h1M171 103h1M176 103h1M181 103h1M185 103h2M191 103h1M194 103h1M201 103h1M204 103h2M210 103h1M212 103h1M214 103h3M218 103h3M222 103h3M228 103h1M232 103h1M236 103h1M239 103h4M244 103h1M248 103h1M250 103h1M254 103h2M261 103h1M263 103h1M265 103h6M272 103h1M274 103h1M277 103h3M7 104h1M10 104h3M14 104h2M19 104h2M22 104h1M24 104h1M30 104h1M32 104h1M39 104h1M41 104h4M46 104h1M49 104h1M51 104h1M54 104h1M57 104h1M59 104h1M70 104h1M76 104h2M79 104h2M82 104h1M85 104h2M89 104h3M99 104h1M107 104h2M111 104h2M116 104h1M122 104h1M124 104h1M131 104h2M135 104h1M137 104h1M150 104h1M152 104h3M156 104h4M162 104h1M166 104h2M172 104h1M179 104h1M183 104h1M185 104h3M189 104h1M191 104h1M193 104h1M196 104h1M198 104h1M200 104h3M210 104h2M223 104h1M227 104h3M233 104h2M236 104h3M240 104h1M243 104h1M251 104h2M254 104h1M258 104h1M261 104h1M263 104h2M266 104h1M274 104h1M280 104h1M5 105h1M7 105h4M14 105h1M16 105h6M23 105h1M26 105h1M28 105h1M30 105h2M33 105h2M37 105h1M41 105h3M45 105h1M47 105h1M51 105h1M57 105h1M60 105h2M66 105h1M69 105h2M72 105h1M77 105h1M80 105h1M82 105h2M85 105h1M88 105h1M90 105h1M93 105h1M99 105h2M105 105h1M109 105h1M114 105h1M116 105h1M120 105h1M123 105h3M128 105h2M131 105h3M137 105h1M153 105h1M155 105h2M160 105h3M164 105h4M172 105h2M178 105h3M182 105h2M187 105h1M190 105h1M194 105h4M199 105h2M204 105h1M206 105h1M209 105h1M211 105h1M213 105h2M216 105h1M222 105h1M225 105h2M230 105h1M232 105h2M235 105h2M241 105h1M247 105h1M249 105h2M255 105h1M258 105h2M263 105h1M271 105h1M274 105h2M6 106h3M17 106h2M20 106h2M25 106h1M27 106h2M37 106h3M41 106h1M45 106h1M47 106h1M52 106h4M57 106h2M62 106h1M65 106h1M69 106h3M73 106h3M77 106h2M82 106h1M87 106h1M90 106h1M93 106h1M97 106h1M99 106h2M102 106h3M106 106h1M113 106h1M117 106h3M122 106h1M125 106h2M129 106h1M131 106h2M135 106h2M152 106h1M154 106h1M159 106h2M162 106h1M164 106h1M168 106h2M171 106h1M174 106h1M176 106h1M178 106h1M180 106h3M188 106h1M193 106h1M201 106h1M204 106h2M209 106h1M213 106h1M215 106h1M220 106h3M225 106h4M231 106h2M234 106h1M237 106h2M240 106h1M242 106h3M246 106h2M249 106h1M251 106h2M254 106h1M256 106h4M261 106h1M263 106h1M266 106h1M268 106h1M270 106h1M274 106h2M278 106h1M280 106h3M6 107h1M11 107h1M14 107h1M19 107h1M21 107h1M28 107h1M30 107h1M32 107h1M34 107h1M39 107h1M42 107h1M44 107h2M47 107h2M50 107h1M52 107h1M54 107h2M63 107h1M66 107h2M70 107h1M73 107h3M81 107h7M89 107h1M93 107h4M105 107h1M107 107h2M111 107h3M116 107h1M120 107h1M123 107h1M126 107h3M131 107h2M134 107h1M137 107h2M148 107h1M150 107h3M154 107h1M156 107h1M158 107h1M164 107h2M167 107h2M170 107h1M173 107h1M176 107h1M179 107h2M185 107h1M187 107h1M191 107h1M194 107h2M198 107h1M200 107h5M210 107h1M212 107h1M219 107h4M226 107h2M232 107h2M241 107h3M246 107h2M249 107h1M253 107h1M257 107h2M265 107h1M267 107h1M269 107h1M273 107h2M281 107h1M5 108h1M7 108h1M9 108h2M13 108h3M20 108h1M22 108h2M25 108h1M28 108h2M31 108h2M34 108h2M38 108h1M42 108h3M47 108h1M50 108h1M52 108h1M55 108h1M59 108h5M66 108h2M69 108h3M74 108h5M80 108h2M83 108h1M85 108h1M91 108h1M95 108h1M98 108h2M102 108h1M104 108h2M109 108h3M114 108h2M117 108h1M122 108h1M124 108h1M130 108h1M133 108h1M135 108h1M148 108h2M155 108h1M157 108h1M160 108h1M166 108h1M169 108h1M175 108h3M180 108h1M182 108h2M185 108h2M188 108h1M190 108h1M193 108h1M196 108h2M199 108h1M201 108h1M208 108h2M216 108h3M221 108h2M227 108h1M235 108h1M237 108h1M239 108h3M243 108h1M245 108h1M247 108h1M250 108h1M257 108h1M260 108h3M268 108h2M272 108h2M5 109h1M8 109h1M11 109h1M15 109h2M18 109h1M20 109h1M22 109h1M26 109h3M30 109h4M35 109h1M37 109h2M40 109h1M42 109h1M44 109h1M46 109h2M50 109h2M56 109h1M58 109h1M60 109h2M67 109h2M71 109h1M73 109h1M75 109h1M83 109h1M86 109h1M89 109h1M93 109h1M96 109h1M102 109h2M105 109h1M107 109h1M112 109h1M117 109h3M122 109h1M131 109h2M134 109h1M136 109h1M138 109h1M148 109h1M150 109h2M153 109h1M156 109h3M163 109h2M166 109h1M170 109h3M174 109h1M176 109h1M178 109h1M180 109h1M183 109h2M186 109h2M197 109h1M199 109h10M210 109h3M216 109h1M218 109h2M223 109h1M225 109h1M231 109h1M233 109h1M236 109h3M240 109h2M244 109h1M247 109h1M251 109h2M259 109h1M261 109h1M263 109h2M266 109h3M270 109h2M273 109h2M276 109h2M6 110h1M8 110h1M11 110h2M14 110h1M16 110h1M18 110h1M22 110h1M24 110h2M27 110h1M34 110h2M38 110h1M40 110h2M44 110h1M52 110h1M54 110h2M57 110h1M68 110h2M71 110h1M74 110h3M79 110h3M83 110h2M88 110h1M90 110h2M94 110h1M99 110h2M104 110h2M107 110h2M110 110h2M114 110h2M117 110h1M122 110h3M129 110h1M131 110h3M135 110h1M149 110h1M158 110h4M163 110h2M168 110h1M171 110h2M174 110h2M177 110h3M190 110h2M194 110h2M202 110h1M204 110h1M206 110h1M208 110h1M212 110h1M214 110h2M220 110h2M224 110h2M227 110h1M229 110h2M234 110h2M240 110h1M242 110h3M246 110h1M252 110h1M254 110h2M259 110h1M263 110h2M269 110h2M272 110h1M274 110h1M276 110h1M278 110h3M6 111h2M11 111h1M15 111h2M19 111h2M22 111h2M28 111h1M30 111h2M33 111h1M40 111h1M42 111h1M46 111h1M48 111h1M50 111h2M53 111h1M55 111h1M57 111h1M61 111h1M63 111h2M68 111h1M71 111h1M76 111h1M81 111h1M88 111h1M92 111h2M99 111h1M101 111h3M108 111h1M114 111h1M117 111h1M120 111h1M127 111h3M131 111h2M135 111h1M137 111h1M149 111h1M154 111h3M159 111h1M165 111h1M171 111h1M174 111h3M184 111h5M192 111h1M201 111h1M204 111h3M208 111h3M212 111h1M215 111h1M217 111h1M219 111h3M224 111h2M227 111h1M229 111h1M231 111h1M234 111h2M237 111h2M241 111h1M243 111h1M246 111h3M250 111h1M261 111h1M264 111h6M271 111h2M274 111h1M276 111h2M279 111h1M281 111h1M9 112h3M14 112h2M19 112h1M22 112h1M30 112h2M33 112h1M35 112h1M40 112h3M44 112h3M53 112h1M59 112h3M69 112h3M73 112h3M77 112h3M82 112h1M88 112h1M90 112h3M95 112h3M100 112h3M104 112h2M108 112h1M112 112h1M114 112h1M118 112h1M120 112h1M122 112h1M124 112h2M127 112h2M131 112h2M136 112h3M151 112h1M154 112h2M159 112h1M161 112h1M171 112h1M176 112h1M178 112h1M183 112h3M193 112h2M196 112h5M204 112h1M208 112h1M216 112h1M218 112h1M222 112h1M224 112h2M229 112h2M233 112h1M235 112h1M239 112h1M241 112h1M244 112h4M251 112h1M263 112h1M275 112h1M6 113h1M8 113h2M12 113h1M18 113h1M23 113h3M27 113h1M29 113h3M35 113h1M39 113h1M41 113h1M43 113h2M46 113h2M49 113h1M54 113h1M57 113h4M67 113h1M69 113h2M72 113h8M82 113h3M86 113h1M88 113h1M92 113h2M95 113h1M97 113h1M99 113h3M106 113h2M110 113h3M116 113h1M118 113h2M121 113h1M124 113h1M132 113h3M138 113h1M150 113h1M152 113h1M156 113h1M159 113h1M161 113h4M167 113h2M170 113h4M175 113h1M181 113h1M187 113h1M189 113h1M195 113h2M202 113h1M205 113h2M208 113h1M215 113h2M226 113h4M232 113h2M238 113h1M243 113h1M245 113h1M248 113h1M259 113h1M275 113h1M279 113h1M6 114h1M8 114h3M13 114h3M20 114h1M32 114h1M34 114h1M39 114h2M45 114h1M47 114h1M50 114h2M53 114h1M56 114h2M59 114h1M61 114h2M73 114h5M79 114h8M88 114h4M93 114h1M95 114h3M103 114h2M108 114h2M111 114h2M115 114h1M120 114h2M123 114h1M125 114h1M127 114h3M137 114h1M149 114h1M151 114h3M161 114h1M164 114h1M167 114h1M176 114h1M180 114h1M182 114h1M186 114h2M189 114h1M191 114h1M196 114h4M201 114h1M203 114h1M209 114h1M212 114h1M216 114h2M219 114h1M221 114h2M229 114h5M235 114h1M241 114h1M245 114h3M251 114h2M255 114h1M264 114h1M266 114h1M271 114h2M274 114h1M277 114h1M7 115h1M10 115h1M12 115h3M17 115h2M20 115h1M22 115h1M24 115h2M31 115h1M34 115h2M39 115h2M42 115h1M48 115h1M51 115h1M54 115h1M57 115h2M64 115h1M66 115h1M72 115h1M75 115h2M78 115h1M81 115h1M83 115h2M89 115h4M94 115h1M97 115h2M100 115h1M105 115h1M107 115h1M111 115h5M118 115h1M122 115h2M127 115h2M132 115h1M134 115h3M150 115h2M154 115h5M160 115h1M166 115h1M168 115h1M172 115h1M174 115h1M177 115h1M191 115h2M194 115h1M196 115h1M198 115h1M204 115h2M207 115h1M209 115h1M211 115h1M221 115h1M226 115h1M229 115h1M231 115h1M234 115h1M239 115h2M243 115h1M245 115h1M256 115h1M259 115h1M269 115h2M272 115h2M280 115h1M5 116h3M12 116h1M14 116h1M18 116h1M21 116h1M29 116h2M32 116h3M36 116h4M44 116h1M46 116h1M56 116h1M58 116h1M60 116h1M63 116h2M66 116h1M71 116h1M73 116h1M79 116h1M81 116h1M83 116h3M87 116h4M93 116h1M96 116h1M100 116h1M103 116h2M109 116h2M113 116h3M117 116h2M122 116h2M125 116h2M129 116h2M132 116h1M134 116h1M149 116h1M151 116h1M155 116h1M159 116h1M169 116h2M175 116h1M178 116h1M181 116h1M184 116h1M186 116h1M190 116h6M202 116h1M208 116h1M211 116h2M216 116h1M218 116h3M222 116h3M230 116h1M237 116h1M242 116h2M246 116h2M254 116h1M257 116h1M260 116h1M264 116h1M269 116h2M272 116h1M275 116h2M6 117h1M14 117h1M23 117h3M28 117h1M30 117h2M33 117h2M38 117h1M41 117h3M45 117h1M47 117h3M51 117h3M55 117h1M57 117h3M64 117h1M69 117h2M75 117h1M77 117h2M81 117h1M84 117h1M87 117h1M90 117h1M93 117h1M98 117h1M102 117h5M111 117h2M114 117h2M117 117h1M120 117h2M125 117h6M133 117h2M136 117h1M138 117h1M150 117h1M160 117h1M162 117h3M166 117h2M173 117h2M181 117h2M184 117h2M191 117h2M196 117h1M200 117h1M205 117h1M216 117h1M218 117h1M221 117h1M224 117h1M229 117h1M237 117h1M239 117h2M248 117h1M255 117h1M258 117h1M262 117h1M269 117h1M272 117h1M278 117h1M282 117h1M6 118h2M10 118h1M13 118h2M16 118h1M18 118h1M20 118h1M23 118h1M26 118h1M29 118h1M33 118h1M35 118h1M42 118h1M44 118h1M48 118h1M51 118h3M58 118h1M60 118h1M66 118h1M68 118h1M70 118h1M72 118h1M74 118h2M78 118h1M81 118h3M85 118h1M87 118h1M89 118h1M91 118h4M96 118h2M99 118h2M103 118h1M106 118h1M109 118h1M113 118h1M118 118h2M122 118h1M124 118h3M128 118h1M134 118h1M136 118h1M148 118h1M150 118h1M154 118h3M161 118h2M164 118h3M168 118h3M182 118h3M191 118h1M193 118h1M199 118h2M205 118h1M211 118h1M220 118h1M223 118h1M230 118h1M232 118h1M235 118h1M240 118h1M246 118h1M257 118h1M260 118h1M276 118h1M278 118h1M7 119h1M10 119h1M12 119h2M15 119h2M22 119h1M24 119h2M30 119h1M36 119h3M41 119h2M44 119h1M47 119h1M53 119h1M55 119h2M59 119h3M64 119h1M68 119h1M70 119h1M74 119h1M88 119h1M91 119h2M95 119h1M101 119h1M105 119h1M108 119h1M112 119h2M115 119h1M117 119h1M119 119h1M122 119h2M125 119h3M132 119h1M138 119h1M150 119h1M157 119h1M159 119h2M162 119h3M169 119h1M171 119h1M179 119h1M188 119h1M192 119h1M203 119h1M207 119h1M209 119h2M212 119h1M215 119h1M220 119h1M224 119h1M229 119h1M232 119h1M236 119h1M242 119h1M248 119h2M251 119h1M255 119h2M6 120h1M8 120h1M15 120h1M17 120h1M22 120h1M24 120h1M26 120h2M35 120h1M37 120h2M43 120h5M51 120h1M54 120h2M57 120h2M68 120h4M73 120h1M75 120h2M80 120h2M87 120h1M97 120h2M100 120h3M104 120h2M107 120h2M111 120h1M113 120h1M116 120h1M118 120h1M121 120h3M136 120h3M152 120h1M157 120h1M161 120h1M169 120h1M172 120h2M177 120h2M181 120h2M188 120h2M194 120h1M196 120h1M206 120h2M213 120h1M225 120h2M237 120h1M248 120h1M262 120h1M266 120h1M268 120h1M272 120h1M282 120h1M11 121h2M15 121h1M24 121h1M34 121h2M39 121h1M41 121h1M43 121h3M48 121h1M50 121h2M53 121h1M59 121h1M61 121h2M64 121h2M70 121h1M73 121h2M83 121h1M86 121h2M97 121h2M102 121h1M104 121h1M111 121h2M118 121h2M121 121h3M125 121h1M130 121h1M132 121h3M137 121h1M150 121h1M160 121h1M170 121h1M175 121h2M181 121h1M206 121h1M215 121h1M266 121h1M275 121h1M8 122h1M11 122h1M14 122h2M18 122h1M20 122h1M28 122h1M32 122h1M35 122h1M41 122h1M43 122h2M53 122h3M59 122h1M66 122h1M74 122h1M78 122h1M82 122h1M85 122h2M89 122h1M96 122h2M101 122h1M103 122h1M108 122h1M110 122h2M113 122h1M119 122h1M124 122h1M126 122h2M129 122h1M132 122h2M151 122h1M161 122h2M164 122h3M170 122h1M195 122h1M197 122h2M201 122h2M224 122h1M230 122h1M236 122h1M238 122h1M248 122h1M251 122h1M256 122h1M11 123h1M41 123h1M50 123h1M56 123h2M62 123h1M64 123h1M66 123h3M77 123h1M81 123h1M88 123h1M90 123h2M93 123h1M95 123h1M99 123h1M101 123h1M106 123h1M109 123h2M114 123h1M117 123h1M120 123h1M122 123h1M126 123h1M129 123h2M137 123h1M150 123h1M162 123h1M179 123h2M182 123h1M190 123h1M217 123h1M227 123h1M230 123h1M243 123h1M247 123h1M251 123h1M267 123h2M281 123h1M5 124h1M10 124h1M23 124h2M43 124h1M71 124h1M75 124h2M79 124h1M81 124h1M92 124h1M98 124h2M102 124h1M116 124h1M125 124h1M132 124h1M158 124h1M162 124h2M175 124h1M181 124h1M184 124h1M187 124h1M193 124h1M204 124h1M222 124h1M233 124h1M19 125h1M23 125h1M51 125h1M54 125h1M66 125h2M71 125h1M80 125h2M95 125h1M101 125h1M107 125h1M109 125h2M115 125h1M120 125h1M171 125h1M173 125h1M176 125h1M193 125h1M205 125h1M19 126h2M24 126h1M27 126h1M32 126h1M39 126h1M45 126h1M50 126h1M58 126h1M64 126h1M67 126h1M94 126h1M106 126h1M117 126h2M120 126h1M124 126h1M133 126h2M137 126h2M159 126h1M165 126h1M237 126h1M255 126h1M17 127h1M34 127h1M46 127h1M58 127h1M66 127h1M68 127h2M98 127h1M114 127h2M118 127h1M128 127h1M131 127h2M15 128h1M48 128h1M58 128h1M64 128h1M88 128h1M93 128h1M102 128h1M109 128h1M111 128h1M122 128h1M130 128h1M157 128h1M232 128h1M13 129h1M24 129h1M59 129h1M78 129h1M86 129h1M88 129h1M103 129h1M213 129h1M17 130h1M30 130h1M36 130h1M79 130h1M8 131h1M44 131h1M56 131h1M76 131h1M79 131h1M89 131h1M119 131h1M175 131h1M42 132h1M48 132h1M83 132h1M119 132h1M124 132h1M134 132h1M62 133h1M77 133h1M108 133h1M115 133h1M20 136h1M98 136h1M124 136h1M40 137h1M66 137h1" stroke="#10a010" stroke-width="1" fill="none" transform="translate(0,0.5)"/><path d="M139 5h1M77 21h2M139 25h1M3 30h1M71 31h1M138 47h1M3 48h1M76 50h1M78 51h1M282 56h1M3 59h1M138 64h1M136 65h1M139 66h1M73 67h1M140 68h1M69 70h1M71 70h1M140 70h1M74 71h1M280 71h1M70 73h1M71 78h2M74 80h1M78 80h1M58 85h1M62 86h1M76 86h1M51 87h1M65 87h1M73 87h1M265 88h1M54 89h1M176 89h1M243 89h1M253 89h1M258 89h1M111 90h1M137 90h1M164 90h1M276 90h1M49 91h1M51 91h1M56 91h1M59 91h1M261 91h1M273 91h1M278 91h1M64 92h1M239 92h1M248 92h1M17 93h1M57 93h1M64 93h1M66 93h1M75 93h1M117 93h1M120 93h1M196 93h1M222 93h1M245 93h1M256 93h1M41 94h1M62 94h1M64 94h1M67 94h1M75 94h1M133 94h1M176 94h1M201 94h1M229 94h1M239 94h1M281 94h1M18 95h1M22 95h1M34 95h1M57 95h1M62 95h1M69 95h1M78 95h1M95 95h1M114 95h1M130 95h1M136 95h1M178 95h1M181 95h1M190 95h2M202 95h1M221 95h1M223 95h1M229 95h1M248 95h1M252 95h1M260 95h1M270 95h1M274 95h1M10 96h1M15 96h1M44 96h1M98 96h1M102 96h1M135 96h1M176 96h1M199 96h1M217 96h1M233 96h1M240 96h1M251 96h1M270 96h1M278 96h1M31 97h1M46 97h1M49 97h1M55 97h1M64 97h1M93 97h1M181 97h1M184 97h1M204 97h1M219 97h1M223 97h1M238 97h1M241 97h4M252 97h2M265 97h3M276 97h1M280 97h1M7 98h2M26 98h2M34 98h1M38 98h1M61 98h1M63 98h1M67 98h1M75 98h1M86 98h1M89 98h1M104 98h1M153 98h1M161 98h1M187 98h1M193 98h1M205 98h1M208 98h1M211 98h1M213 98h1M216 98h1M222 98h1M242 98h1M245 98h1M260 98h1M262 98h1M265 98h1M274 98h1M278 98h1M14 99h1M29 99h1M37 99h1M58 99h1M94 99h1M96 99h1M98 99h1M104 99h1M107 99h1M117 99h1M135 99h1M149 99h1M163 99h2M181 99h1M183 99h1M186 99h1M209 99h1M218 99h1M223 99h1M229 99h2M236 99h1M240 99h1M245 99h1M256 99h1M262 99h1M272 99h2M278 99h1M280 99h1M46 100h1M50 100h1M53 100h1M58 100h1M60 100h1M76 100h1M84 100h1M100 100h1M104 100h1M107 100h1M113 100h1M117 100h2M120 100h1M124 100h1M126 100h1M128 100h1M132 100h1M134 100h1M153 100h1M160 100h1M175 100h1M178 100h2M182 100h1M184 100h1M204 100h4M212 100h1M219 100h1M226 100h1M231 100h1M233 100h1M235 100h2M241 100h1M246 100h2M252 100h1M259 100h1M262 100h1M265 100h1M269 100h2M275 100h1M279 100h2M6 101h2M11 101h1M16 101h2M23 101h1M26 101h1M29 101h1M40 101h1M58 101h1M62 101h1M71 101h1M76 101h1M96 101h1M99 101h1M108 101h1M118 101h1M129 101h1M135 101h2M161 101h1M165 101h1M172 101h1M183 101h2M191 101h1M195 101h1M200 101h1M209 101h1M215 101h1M221 101h1M235 101h1M238 101h1M245 101h1M250 101h1M257 101h1M264 101h2M268 101h2M271 101h1M273 101h1M275 101h2M281 101h2M10 102h2M15 102h1M18 102h1M26 102h1M32 102h1M37 102h2M43 102h1M47 102h1M54 102h1M73 102h1M75 102h2M82 102h1M89 102h2M95 102h1M98 102h2M102 102h1M114 102h1M120 102h2M127 102h1M149 102h1M152 102h1M156 102h2M159 102h1M162 102h1M164 102h1M174 102h1M177 102h1M185 102h2M192 102h2M201 102h1M203 102h1M205 102h1M213 102h1M216 102h1M222 102h1M228 102h1M234 102h1M236 102h1M239 102h2M244 102h2M249 102h2M252 102h2M255 102h2M263 102h3M268 102h1M270 102h1M272 102h2M281 102h1M13 103h1M15 103h1M18 103h1M25 103h1M30 103h1M32 103h3M44 103h1M47 103h1M54 103h1M57 103h3M63 103h2M70 103h1M78 103h1M85 103h1M89 103h1M96 103h1M99 103h1M102 103h1M119 103h1M123 103h1M149 103h1M154 103h1M157 103h1M159 103h1M162 103h2M172 103h2M183 103h2M192 103h1M195 103h1M197 103h1M199 103h1M202 103h1M207 103h3M225 103h1M227 103h1M229 103h2M234 103h2M237 103h2M243 103h1M246 103h2M252 103h2M258 103h1M260 103h1M264 103h1M271 103h1M273 103h1M275 103h2M281 103h2M5 104h1M16 104h1M21 104h1M29 104h1M37 104h2M48 104h1M62 104h1M65 104h1M68 104h2M74 104h1M78 104h1M83 104h2M87 104h1M97 104h1M106 104h1M110 104h1M113 104h2M117 104h2M125 104h3M130 104h1M134 104h1M155 104h1M160 104h2M169 104h1M171 104h1M174 104h1M176 104h1M181 104h2M190 104h1M192 104h1M197 104h1M199 104h1M203 104h1M207 104h3M213 104h1M215 104h1M217 104h2M220 104h3M226 104h1M230 104h1M232 104h1M242 104h1M244 104h1M246 104h2M250 104h1M253 104h1M255 104h2M259 104h2M265 104h1M270 104h4M275 104h3M281 104h2M6 105h1M13 105h1M15 105h1M24 105h2M27 105h1M32 105h1M40 105h1M46 105h1M48 105h1M53 105h1M58 105h1M65 105h1M67 105h1M71 105h1M76 105h1M78 105h1M81 105h1M84 105h1M92 105h1M94 105h1M96 105h3M101 105h4M108 105h1M111 105h3M115 105h1M121 105h1M134 105h2M149 105h2M154 105h1M157 105h1M159 105h1M168 105h2M171 105h1M174 105h3M181 105h1M184 105h3M192 105h2M201 105h1M203 105h1M205 105h1M207 105h1M210 105h1M212 105h1M215 105h1M217 105h2M220 105h2M223 105h1M227 105h1M229 105h1M231 105h1M237 105h4M244 105h2M253 105h2M256 105h2M260 105h3M265 105h1M267 105h2M270 105h1M277 105h3M282 105h1M9 106h2M13 106h4M22 106h1M29 106h1M31 106h3M40 106h1M42 106h1M46 106h1M51 106h1M56 106h1M59 106h1M61 106h1M68 106h1M79 106h1M81 106h1M85 106h1M88 106h1M92 106h1M105 106h1M107 106h2M111 106h2M114 106h2M121 106h1M123 106h1M130 106h1M134 106h1M150 106h1M153 106h1M155 106h4M165 106h1M167 106h1M175 106h1M179 106h1M184 106h1M187 106h1M189 106h2M192 106h1M194 106h4M199 106h1M203 106h1M206 106h1M210 106h1M216 106h4M223 106h1M233 106h1M235 106h1M239 106h1M241 106h1M245 106h1M250 106h1M253 106h1M262 106h1M267 106h1M269 106h1M271 106h1M273 106h1M279 106h1M5 107h1M7 107h1M9 107h1M12 107h1M16 107h2M24 107h4M35 107h4M40 107h2M51 107h1M53 107h1M57 107h2M62 107h1M65 107h1M68 107h2M76 107h1M90 107h1M92 107h1M99 107h1M102 107h2M110 107h1M115 107h1M117 107h2M125 107h1M135 107h2M149 107h1M155 107h1M157 107h1M159 107h1M162 107h2M166 107h1M169 107h1M172 107h1M174 107h1M177 107h1M184 107h1M186 107h1M189 107h1M192 107h2M196 107h1M199 107h1M205 107h2M208 107h2M213 107h1M217 107h2M223 107h3M228 107h2M231 107h1M234 107h3M238 107h2M244 107h2M248 107h1M250 107h1M252 107h1M254 107h3M259 107h1M263 107h2M266 107h1M268 107h1M270 107h1M272 107h1M275 107h1M278 107h3M6 108h1M8 108h1M11 108h2M18 108h1M21 108h1M36 108h2M39 108h2M51 108h1M54 108h1M56 108h3M64 108h1M68 108h1M73 108h1M79 108h1M88 108h2M93 108h2M96 108h1M100 108h2M103 108h1M107 108h2M112 108h2M116 108h1M118 108h3M127 108h2M134 108h1M137 108h1M151 108h1M153 108h2M156 108h1M161 108h2M164 108h2M167 108h1M170 108h1M173 108h2M178 108h2M181 108h1M187 108h1M189 108h1M192 108h1M194 108h1M198 108h1M200 108h1M202 108h2M205 108h1M207 108h1M215 108h1M220 108h1M223 108h4M228 108h1M230 108h2M233 108h1M242 108h1M244 108h1M252 108h4M258 108h2M264 108h4M270 108h2M274 108h2M277 108h5M6 109h2M9 109h2M12 109h3M17 109h1M21 109h1M23 109h3M41 109h1M45 109h1M52 109h2M55 109h1M57 109h1M59 109h1M69 109h2M72 109h1M74 109h1M76 109h1M78 109h2M85 109h1M87 109h1M90 109h3M94 109h2M99 109h3M108 109h3M113 109h4M121 109h1M123 109h1M127 109h2M137 109h1M149 109h1M152 109h1M159 109h4M165 109h1M167 109h2M173 109h1M175 109h1M179 109h1M181 109h2M185 109h1M188 109h2M192 109h3M196 109h1M213 109h1M215 109h1M217 109h1M220 109h3M224 109h1M226 109h1M228 109h3M234 109h2M239 109h1M242 109h2M245 109h2M248 109h1M250 109h1M253 109h6M260 109h1M265 109h1M269 109h1M275 109h1M279 109h1M281 109h1M5 110h1M7 110h1M9 110h2M15 110h1M19 110h1M21 110h1M26 110h1M32 110h1M39 110h1M42 110h2M45 110h1M47 110h2M50 110h2M53 110h1M58 110h3M62 110h2M66 110h2M78 110h1M85 110h2M95 110h2M98 110h1M101 110h2M106 110h1M113 110h1M118 110h1M121 110h1M125 110h1M130 110h1M136 110h3M148 110h1M150 110h8M162 110h1M166 110h2M169 110h1M173 110h1M176 110h1M180 110h2M186 110h1M188 110h2M192 110h2M196 110h6M203 110h1M205 110h1M207 110h1M209 110h3M216 110h4M222 110h2M226 110h1M228 110h1M231 110h3M237 110h3M241 110h1M247 110h4M253 110h1M256 110h3M260 110h2M266 110h1M268 110h1M271 110h1M273 110h1M8 111h3M12 111h1M18 111h1M21 111h1M24 111h2M32 111h1M37 111h3M41 111h1M43 111h3M47 111h1M54 111h1M56 111h1M60 111h1M62 111h1M65 111h3M69 111h2M73 111h1M79 111h1M83 111h5M89 111h1M91 111h1M95 111h1M97 111h1M100 111h1M104 111h1M106 111h2M109 111h4M115 111h2M119 111h1M122 111h3M130 111h1M134 111h1M136 111h1M150 111h1M152 111h1M157 111h2M160 111h3M164 111h1M166 111h5M172 111h2M177 111h3M181 111h3M189 111h1M193 111h8M203 111h1M211 111h1M218 111h1M222 111h2M226 111h1M230 111h1M232 111h1M239 111h2M242 111h1M245 111h1M251 111h5M257 111h1M259 111h1M262 111h1M270 111h1M273 111h1M278 111h1M8 112h1M13 112h1M16 112h3M21 112h1M23 112h1M25 112h1M27 112h3M32 112h1M37 112h1M39 112h1M43 112h1M49 112h1M55 112h2M58 112h1M62 112h1M64 112h1M66 112h3M72 112h1M80 112h1M83 112h4M94 112h1M99 112h1M103 112h1M106 112h2M109 112h1M111 112h1M115 112h1M117 112h1M119 112h1M121 112h1M123 112h1M126 112h1M129 112h2M135 112h1M149 112h1M152 112h2M157 112h2M160 112h1M162 112h1M165 112h2M168 112h1M170 112h1M174 112h2M177 112h1M180 112h2M186 112h3M190 112h1M192 112h1M195 112h1M201 112h1M203 112h1M205 112h2M210 112h1M212 112h1M215 112h1M217 112h1M219 112h2M223 112h1M234 112h1M237 112h1M242 112h2M253 112h1M258 112h2M262 112h1M271 112h4M277 112h2M281 112h1M7 113h1M13 113h1M19 113h3M28 113h1M32 113h2M36 113h3M42 113h1M48 113h1M50 113h3M55 113h2M61 113h3M65 113h2M68 113h1M81 113h1M87 113h1M89 113h2M94 113h1M102 113h1M104 113h2M108 113h1M115 113h1M120 113h1M122 113h2M128 113h3M135 113h2M149 113h1M153 113h3M158 113h1M165 113h2M176 113h1M178 113h1M180 113h1M183 113h2M188 113h1M200 113h1M203 113h2M211 113h3M217 113h2M222 113h2M230 113h1M234 113h1M241 113h2M246 113h1M249 113h1M255 113h4M261 113h2M268 113h2M272 113h3M282 113h1M11 114h2M16 114h1M18 114h1M22 114h3M28 114h2M31 114h1M33 114h1M35 114h1M38 114h1M42 114h3M48 114h1M54 114h2M58 114h1M64 114h1M66 114h3M70 114h1M92 114h1M98 114h3M102 114h1M110 114h1M113 114h2M117 114h2M126 114h1M130 114h1M134 114h3M150 114h1M154 114h1M156 114h1M159 114h1M163 114h1M166 114h1M171 114h3M183 114h1M188 114h1M190 114h1M192 114h1M200 114h1M202 114h1M205 114h2M211 114h1M213 114h1M215 114h1M226 114h1M237 114h1M242 114h1M244 114h1M256 114h1M261 114h3M267 114h2M275 114h1M8 115h2M15 115h2M23 115h1M27 115h2M45 115h3M50 115h1M52 115h1M56 115h1M59 115h2M62 115h1M65 115h1M68 115h1M70 115h1M73 115h1M77 115h1M79 115h2M85 115h1M87 115h1M99 115h1M102 115h3M109 115h2M117 115h1M119 115h2M126 115h1M129 115h3M133 115h1M137 115h2M149 115h1M152 115h1M161 115h2M165 115h1M170 115h2M178 115h3M187 115h2M190 115h1M195 115h1M197 115h1M199 115h3M206 115h1M210 115h1M213 115h1M218 115h1M224 115h1M227 115h2M232 115h1M235 115h1M238 115h1M268 115h1M277 115h2M10 116h1M13 116h1M15 116h3M22 116h1M24 116h2M31 116h1M40 116h3M45 116h1M51 116h1M53 116h1M61 116h2M72 116h1M74 116h1M76 116h1M80 116h1M82 116h1M86 116h1M99 116h1M101 116h2M106 116h1M108 116h1M111 116h2M116 116h1M119 116h1M128 116h1M131 116h1M135 116h1M150 116h1M152 116h2M156 116h2M160 116h1M163 116h1M173 116h2M179 116h1M182 116h1M210 116h1M213 116h1M228 116h2M234 116h1M241 116h1M259 116h1M7 117h3M11 117h1M16 117h2M20 117h3M27 117h1M37 117h1M44 117h1M56 117h1M61 117h1M63 117h1M66 117h1M72 117h1M74 117h1M86 117h1M89 117h1M94 117h1M110 117h1M116 117h1M118 117h2M124 117h1M137 117h1M155 117h1M158 117h1M176 117h1M187 117h1M195 117h1M206 117h3M230 117h1M234 117h1M250 117h1M11 118h2M17 118h1M19 118h1M22 118h1M24 118h1M31 118h2M41 118h1M43 118h1M47 118h1M50 118h1M54 118h1M59 118h1M61 118h1M64 118h1M86 118h1M88 118h1M95 118h1M101 118h1M107 118h2M133 118h1M137 118h2M149 118h1M157 118h1M159 118h1M163 118h1M179 118h1M186 118h1M189 118h2M198 118h1M225 118h1M243 118h1M11 119h1M14 119h1M21 119h1M33 119h3M46 119h1M57 119h1M62 119h1M80 119h2M98 119h1M106 119h1M114 119h1M118 119h1M133 119h2M148 119h2M158 119h1M167 119h1M183 119h2M187 119h1M204 119h2M217 119h1M222 119h1M230 119h1M244 119h1M10 120h1M13 120h2M19 120h1M23 120h1M39 120h1M59 120h1M74 120h1M82 120h1M84 120h1M89 120h1M92 120h2M96 120h1M99 120h1M106 120h1M109 120h1M124 120h1M128 120h1M131 120h1M149 120h1M155 120h1M168 120h1M174 120h1M236 120h1M46 121h1M55 121h1M78 121h1M90 121h1M136 121h1M165 121h1M169 121h1M174 121h1M185 121h1M201 121h1M34 122h1M42 122h1M47 122h1M57 122h1M79 122h1M88 122h1M105 122h1M118 122h1M125 122h1M156 122h1M28 123h1M46 123h1M48 123h1M55 123h1M61 123h1M80 123h1M89 123h1M100 123h1M112 123h2M115 123h1M133 123h2M153 123h1M155 123h1M262 123h1M38 124h1M54 124h1M87 124h1M113 124h1M118 124h2M137 124h1M243 124h1M50 125h1M77 125h1M79 125h1M103 125h1M10 126h1M68 126h1" stroke="#00ff00" stroke-width="1" fill="none" transform="translate(0,0.5)"/></svg>
<div class="w t or" style="left:1595px;top:102px;width:143px;height:40px;line-height:37px;letter-spacing:-0.06px;">SW Status : N/A</div>
<div class="w t or" style="left:1595px;top:142px;width:143px;height:40px;line-height:37px;letter-spacing:-0.12px;">DE mode : N/A</div>
<div class="w t rd" style="left:1595px;top:182px;width:143px;height:40px;line-height:37px;letter-spacing:0.28px;">ping : 60</div>
<div class="w g" style="left:1595px;top:228px;width:143px;height:49px;line-height:46px;">Ct : 154</div>
<div class="w g" style="left:1595px;top:277px;width:143px;height:49px;line-height:46px;">Ct/s : 14</div>
<div class="w o" style="left:1595px;top:331px;width:143px;height:49px;line-height:46px;letter-spacing:0.3px;"># of det. strips</div>
<div class="w o" style="left:1595px;top:380px;width:72px;height:49px;line-height:46px;">Al : 0</div>
<div class="w o" style="left:1667px;top:380px;width:71px;height:49px;line-height:46px;">Pt : 0</div>
<div class="w b" style="left:1595px;top:435px;width:143px;height:49px;line-height:46px;letter-spacing:0.23px;"># of rest evt. frame</div>
<div class="w b" style="left:1595px;top:484px;width:72px;height:48px;line-height:45px;letter-spacing:0.16px;">t : 0</div>
<div class="w b" style="left:1667px;top:484px;width:71px;height:48px;line-height:45px;letter-spacing:0.11px;">t-1 : 0</div>
<div class="wh" style="left:1px;top:536px;width:866px;height:433px"></div>
<div class="p " style="left:2px;top:537px;width:367px;height:345px;"></div>
<div class="abs" style="left:73px;top:877px;width:1px;height:4px;background:#949cab"></div>
<div class="abs" style="left:145px;top:877px;width:1px;height:4px;background:#949cab"></div>
<div class="abs" style="left:217px;top:877px;width:1px;height:4px;background:#949cab"></div>
<div class="abs" style="left:288px;top:877px;width:1px;height:4px;background:#949cab"></div>
<div class="abs" style="left:360px;top:877px;width:1px;height:4px;background:#949cab"></div>
<div class="abs" style="left:3px;top:594px;width:5px;height:1px;background:#949cab"></div>
<div class="abs" style="left:3px;top:737px;width:5px;height:1px;background:#949cab"></div>
<div class="abs" style="left:3px;top:666px;width:3px;height:1px;background:#949cab"></div>
<div class="abs" style="left:3px;top:809px;width:3px;height:1px;background:#949cab"></div>
<div class="lb" style="left:6px;top:866px">cmos1_pc.log: QL</div>
<div class="w c2" style="left:2px;top:883px;width:189px;height:43px;line-height:40px;padding-left:9px;letter-spacing:-0.05px;">FPGA T : 0</div>
<div class="w c" style="left:191px;top:883px;width:182px;height:43px;line-height:40px;letter-spacing:-0.1px;">Whole Ph. R. : 0</div>
<div class="w c2" style="left:2px;top:926px;width:189px;height:43px;line-height:40px;padding-left:9px;letter-spacing:0.16px;">Sensor T : 0</div>
<div class="w c" style="left:191px;top:926px;width:182px;height:43px;line-height:40px;letter-spacing:-0.13px;">Part Ph. R. : 0</div>
<div class="p " style="left:374px;top:537px;width:310px;height:155px;"></div>
<div class="abs" style="left:414px;top:687px;width:1px;height:4px;background:#949cab"></div>
<div class="abs" style="left:455px;top:687px;width:1px;height:4px;background:#949cab"></div>
<div class="abs" style="left:496px;top:687px;width:1px;height:4px;background:#949cab"></div>
<div class="abs" style="left:536px;top:687px;width:1px;height:4px;background:#949cab"></div>
<div class="abs" style="left:577px;top:687px;width:1px;height:4px;background:#949cab"></div>
<div class="abs" style="left:617px;top:687px;width:1px;height:4px;background:#949cab"></div>
<div class="abs" style="left:658px;top:687px;width:1px;height:4px;background:#949cab"></div>
<div class="abs" style="left:375px;top:612px;width:5px;height:1px;background:#949cab"></div>
<div class="abs" style="left:375px;top:553px;width:3px;height:1px;background:#949cab"></div>
<div class="abs" style="left:375px;top:571px;width:3px;height:1px;background:#949cab"></div>
<div class="abs" style="left:375px;top:592px;width:3px;height:1px;background:#949cab"></div>
<div class="abs" style="left:375px;top:632px;width:3px;height:1px;background:#949cab"></div>
<div class="abs" style="left:375px;top:652px;width:3px;height:1px;background:#949cab"></div>
<div class="abs" style="left:375px;top:672px;width:3px;height:1px;background:#949cab"></div>
<div class="lb" style="left:378px;top:675px">cmos1_pc.log: PC</div>
<div class="w g2" style="left:686px;top:537px;width:181px;height:38px;line-height:35px;padding-left:9px;line-height:33px;letter-spacing:-0.03px;">CPU Load Ave. : 0</div>
<div class="w g2" style="left:686px;top:575px;width:181px;height:39px;line-height:36px;padding-left:9px;letter-spacing:0.06px;">Disk Space : 0</div>
<div class="w g" style="left:686px;top:614px;width:181px;height:39px;line-height:36px;padding-left:9px;letter-spacing:-0.14px;">Ch. Exp. XX : 0</div>
<div class="w g" style="left:686px;top:653px;width:181px;height:39px;line-height:36px;padding-left:9px;letter-spacing:-0.15px;">Ch. Exp. 192 : 0</div>
<div class="w o" style="left:373px;top:692px;width:165px;height:46px;line-height:43px;letter-spacing:-0.04px;">Gain Mode : 10</div>
<div class="w o" style="left:538px;top:692px;width:164px;height:46px;line-height:43px;letter-spacing:-0.11px;">Gain Even : 2</div>
<div class="w o" style="left:702px;top:692px;width:165px;height:46px;line-height:43px;letter-spacing:0.05px;">Gain Odd : 2</div>
<div class="w o" style="left:373px;top:738px;width:165px;height:46px;line-height:43px;letter-spacing:0.07px;">Repeat "n" : 12</div>
<div class="w o" style="left:538px;top:738px;width:164px;height:46px;line-height:43px;letter-spacing:0.12px;">Repeat "N" : 14</div>
<div class="w o" style="left:702px;top:738px;width:165px;height:46px;line-height:43px;letter-spacing:0.11px;">NCapture : 2</div>
<div class="w o or" style="left:455px;top:784px;width:165px;height:46px;line-height:43px;letter-spacing:-0.08px;">QL Exp. : None</div>
<div class="w o or" style="left:620px;top:784px;width:165px;height:46px;line-height:43px;letter-spacing:-0.19px;">PC Exp. : None</div>
<div class="w b" style="left:373px;top:830px;width:165px;height:47px;line-height:44px;letter-spacing:0.15px;">Init : 2.6</div>
<div class="w b" style="left:538px;top:830px;width:164px;height:47px;line-height:44px;letter-spacing:0.09px;">Training : 8.6</div>
<div class="w b" style="left:702px;top:830px;width:165px;height:47px;line-height:44px;letter-spacing:0.25px;">Setting : 8.3</div>
<div class="w b" style="left:373px;top:877px;width:165px;height:46px;line-height:43px;line-height:41px;letter-spacing:0.03px;">Start : 2.1</div>
<div class="w b" style="left:538px;top:877px;width:164px;height:46px;line-height:43px;line-height:41px;letter-spacing:0.16px;">Stop : 5.5</div>
<div class="w b" style="left:702px;top:877px;width:165px;height:46px;line-height:43px;line-height:41px;letter-spacing:0.34px;">Start-&gt;Stop : 2</div>
<div class="w b" style="left:538px;top:923px;width:164px;height:46px;line-height:43px;letter-spacing:0.14px;">Software : 2</div>
<div class="w wp" style="left:711px;top:926px;width:156px;height:43px;line-height:40px;letter-spacing:0.16px;">Write Pointer : 0</div>
<div class="wh" style="left:870px;top:536px;width:866px;height:433px"></div>
<div class="p " style="left:871px;top:537px;width:367px;height:345px;background:#001800;border-color:#4a4f4a;"></div>
<div class="abs" style="left:1014px;top:877px;width:1px;height:4px;background:#9a9a9a"></div>
<div class="abs" style="left:1086px;top:877px;width:1px;height:4px;background:#9a9a9a"></div>
<div class="abs" style="left:1157px;top:877px;width:1px;height:4px;background:#9a9a9a"></div>
<div class="abs" style="left:1229px;top:877px;width:1px;height:4px;background:#9a9a9a"></div>
<div class="abs" style="left:872px;top:594px;width:5px;height:1px;background:#9a9a9a"></div>
<div class="abs" style="left:872px;top:737px;width:5px;height:1px;background:#9a9a9a"></div>
<div class="abs" style="left:872px;top:666px;width:3px;height:1px;background:#9a9a9a"></div>
<div class="abs" style="left:872px;top:809px;width:3px;height:1px;background:#9a9a9a"></div>
<div class="lb" style="left:875px;top:866px">cmos2_pc.log: QL</div>
<div class="w c2" style="left:871px;top:883px;width:189px;height:43px;line-height:40px;padding-left:9px;letter-spacing:-0.05px;">FPGA T : 0</div>
<div class="w c" style="left:1060px;top:883px;width:182px;height:43px;line-height:40px;letter-spacing:-0.1px;">Whole Ph. R. : 0</div>
<div class="w c2" style="left:871px;top:926px;width:189px;height:43px;line-height:40px;padding-left:9px;letter-spacing:0.16px;">Sensor T : 0</div>
<div class="w c" style="left:1060px;top:926px;width:182px;height:43px;line-height:40px;letter-spacing:-0.13px;">Part Ph. R. : 0</div>
<div class="p " style="left:1243px;top:537px;width:310px;height:155px;"></div>
<div class="abs" style="left:1283px;top:687px;width:1px;height:4px;background:#949cab"></div>
<div class="abs" style="left:1324px;top:687px;width:1px;height:4px;background:#949cab"></div>
<div class="abs" style="left:1365px;top:687px;width:1px;height:4px;background:#949cab"></div>
<div class="abs" style="left:1405px;top:687px;width:1px;height:4px;background:#949cab"></div>
<div class="abs" style="left:1446px;top:687px;width:1px;height:4px;background:#949cab"></div>
<div class="abs" style="left:1486px;top:687px;width:1px;height:4px;background:#949cab"></div>
<div class="abs" style="left:1527px;top:687px;width:1px;height:4px;background:#949cab"></div>
<div class="abs" style="left:1244px;top:612px;width:5px;height:1px;background:#949cab"></div>
<div class="abs" style="left:1244px;top:553px;width:3px;height:1px;background:#949cab"></div>
<div class="abs" style="left:1244px;top:571px;width:3px;height:1px;background:#949cab"></div>
<div class="abs" style="left:1244px;top:592px;width:3px;height:1px;background:#949cab"></div>
<div class="abs" style="left:1244px;top:632px;width:3px;height:1px;background:#949cab"></div>
<div class="abs" style="left:1244px;top:652px;width:3px;height:1px;background:#949cab"></div>
<div class="abs" style="left:1244px;top:672px;width:3px;height:1px;background:#949cab"></div>
<div class="lb" style="left:1247px;top:675px">cmos2_pc.log: PC</div>
<div class="w g2" style="left:1555px;top:537px;width:181px;height:38px;line-height:35px;padding-left:9px;line-height:33px;letter-spacing:-0.03px;">CPU Load Ave. : 0</div>
<div class="w g2" style="left:1555px;top:575px;width:181px;height:39px;line-height:36px;padding-left:9px;letter-spacing:0.06px;">Disk Space : 0</div>
<div class="w g" style="left:1555px;top:614px;width:181px;height:39px;line-height:36px;padding-left:9px;letter-spacing:-0.14px;">Ch. Exp. XX : 0</div>
<div class="w g" style="left:1555px;top:653px;width:181px;height:39px;line-height:36px;padding-left:9px;letter-spacing:-0.15px;">Ch. Exp. 192 : 0</div>
<div class="w o" style="left:1242px;top:692px;width:165px;height:46px;line-height:43px;letter-spacing:-0.04px;">Gain Mode : 10</div>
<div class="w o" style="left:1407px;top:692px;width:164px;height:46px;line-height:43px;letter-spacing:-0.11px;">Gain Even : 2</div>
<div class="w o" style="left:1571px;top:692px;width:165px;height:46px;line-height:43px;letter-spacing:0.05px;">Gain Odd : 2</div>
<div class="w o" style="left:1242px;top:738px;width:165px;height:46px;line-height:43px;letter-spacing:0.07px;">Repeat "n" : 12</div>
<div class="w o" style="left:1407px;top:738px;width:164px;height:46px;line-height:43px;letter-spacing:0.12px;">Repeat "N" : 14</div>
<div class="w o" style="left:1571px;top:738px;width:165px;height:46px;line-height:43px;letter-spacing:0.11px;">NCapture : 2</div>
<div class="w o" style="left:1324px;top:784px;width:165px;height:46px;line-height:43px;letter-spacing:0.04px;">QL Exp. : 3735674</div>
<div class="w o or" style="left:1489px;top:784px;width:165px;height:46px;line-height:43px;letter-spacing:-0.19px;">PC Exp. : None</div>
<div class="w b" style="left:1242px;top:830px;width:165px;height:47px;line-height:44px;letter-spacing:0.15px;">Init : 2.6</div>
<div class="w b" style="left:1407px;top:830px;width:164px;height:47px;line-height:44px;letter-spacing:0.09px;">Training : 8.6</div>
<div class="w b" style="left:1571px;top:830px;width:165px;height:47px;line-height:44px;letter-spacing:0.25px;">Setting : 8.3</div>
<div class="w b" style="left:1242px;top:877px;width:165px;height:46px;line-height:43px;line-height:41px;letter-spacing:0.03px;">Start : 2.1</div>
<div class="w b" style="left:1407px;top:877px;width:164px;height:46px;line-height:43px;line-height:41px;letter-spacing:0.16px;">Stop : 5.5</div>
<div class="w b" style="left:1571px;top:877px;width:165px;height:46px;line-height:43px;line-height:41px;letter-spacing:0.34px;">Start-&gt;Stop : 2</div>
<div class="w b" style="left:1407px;top:923px;width:164px;height:46px;line-height:43px;letter-spacing:0.14px;">Software : 2</div>
<div class="w wp" style="left:1580px;top:926px;width:156px;height:43px;line-height:40px;letter-spacing:0.16px;">Write Pointer : 0</div>
</div></div>
</div></body></html>
